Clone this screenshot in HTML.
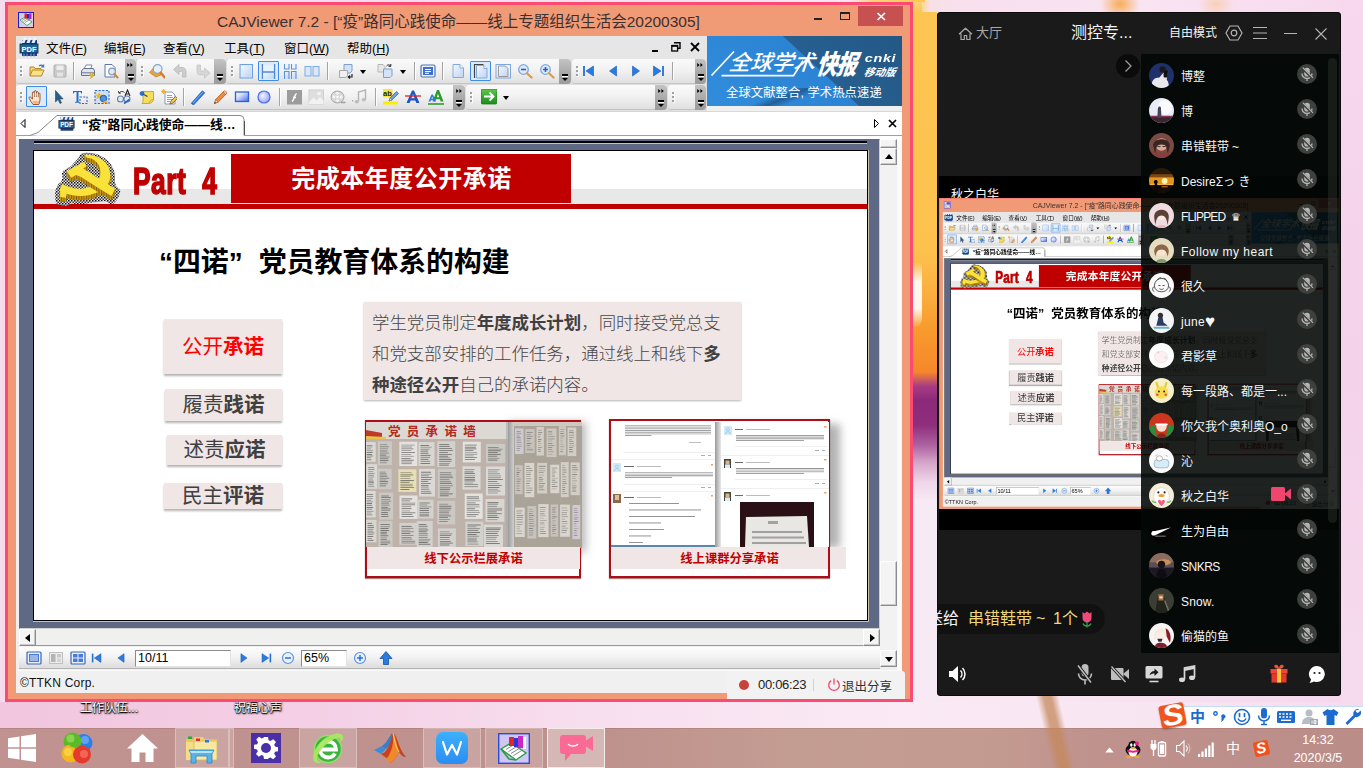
<!DOCTYPE html>
<html lang="zh-CN"><head><meta charset="utf-8"><title>CAJViewer 7.2</title>
<style>
*{box-sizing:border-box;margin:0;padding:0}
html,body{width:1363px;height:768px;overflow:hidden}
body{position:relative;font-family:"Liberation Sans","Noto Sans CJK SC",sans-serif;font-size:13px;color:#000;background:#f6dcee}
.a{position:absolute}
.wall{left:0;top:0;width:1363px;height:768px;background:
 linear-gradient(90deg,#f5dcec 0,#f6d9ec 300px,#f8e2f1 700px,#f9e8f4 1000px,#f5d6ec 1363px)}
.wmid{left:913px;top:0;width:24px;height:727px;background:linear-gradient(180deg,#fbd27a 0,#fdc552 14px,#fdc24e 250px,#fbb040 290px,#f89a2e 330px,#f6872a 372px,#a83c84 386px,#8c2a7a 400px,#8e2e7c 425px,#ac62a0 445px,#d6a6ca 463px,#efd6e8 482px,#f8eaf4 502px,#f8eaf4 727px)}
.wmidhl{left:913px;top:262px;width:9px;height:66px;background:linear-gradient(180deg,rgba(255,255,255,0),#fff 30%,#fff 70%,rgba(255,255,255,0));border-radius:0 6px 10px 0;opacity:.9}
.wtop{left:922px;top:0;width:441px;height:12px;background:radial-gradient(ellipse 20px 16px at 198px 4px,rgba(248,170,80,.95),rgba(248,170,80,0)),radial-gradient(ellipse 18px 14px at 294px 4px,rgba(250,200,160,.7),rgba(250,200,160,0)),linear-gradient(90deg,#fbd890 0,#f9e0e6 8px,#f8e0ee 40px,#f9e4f2 50%,#f7d8ee)}
.wright{left:1341px;top:0;width:22px;height:727px;background:linear-gradient(180deg,#f7d8ee,#f4d2ea 50%,#f6dcee)}
.wstem{left:1044px;top:696px;width:23px;height:72px;background:linear-gradient(90deg,rgba(196,136,92,0) 0,rgba(196,136,92,.75) 35%,rgba(196,136,92,.75) 65%,rgba(196,136,92,0) 100%);transform:skewX(13deg)}
.taskbar{left:0;top:728px;width:1363px;height:40px;background:linear-gradient(180deg,rgba(120,60,50,.25) 0,rgba(120,60,50,0) 1.5px),linear-gradient(90deg,#c09391 0,#be918d 600px,#c49d92 800px,#c39a90 1000px,#bf928d 1100px,#bb8d89 1363px)}
.cajin{left:-5px;top:-2px;width:1363px;height:768px}
.caj{left:5px;top:2px;width:908px;height:700px;overflow:hidden}
.ttl{font-size:15.5px;line-height:22px;color:#3a3030;white-space:nowrap}
.mn{font-size:12.5px;line-height:17px;color:#000;white-space:nowrap}
.mn u{text-underline-offset:1px}
.tb{background:linear-gradient(180deg,#fafafa 0,#f2f2f2 45%,#e0e0e0 100%);border-radius:3px;border-bottom:1px solid #c4c4c4}
.tsep{width:2px;background:linear-gradient(90deg,#a4a4a4 0,#a4a4a4 50%,#fdfdfd 50%)}
.grip{width:2px;height:10px;background:repeating-linear-gradient(180deg,#a0a0a0 0,#a0a0a0 2px,rgba(0,0,0,0) 2px,rgba(0,0,0,0) 4px);box-shadow:1px 1px 0 rgba(255,255,255,.8)}
.tcap{background:linear-gradient(180deg,#c4c4c4,#a6a6a6 60%,#9c9c9c);border-radius:0 4px 4px 0}
.chev{width:7px;height:5px;background:linear-gradient(135deg,#000 35%,rgba(0,0,0,0) 36%) 0 0/3.5px 2.5px repeat-x,linear-gradient(45deg,#000 35%,rgba(0,0,0,0) 36%) 0 2.5px/3.5px 2.5px repeat-x;background-repeat:repeat-x}
.capbar{width:6px;height:2px;background:#000;box-shadow:0 1px 0 #fff}
.capar{border:3px solid transparent;border-bottom:0;border-top:3.5px solid #000;width:0;height:0}
.ddar{border:3px solid transparent;border-bottom:0;border-top:4px solid #000;width:0;height:0}
.selbox{background:#dcebfc;border:1px solid #3c8cec;border-radius:1px}
.bt1{font-size:21.5px;color:#fff;font-style:italic;white-space:nowrap;line-height:26px;letter-spacing:0;font-weight:500;transform:skewX(-6deg)}
.bt2{font-size:27px;color:#fff;font-style:italic;font-weight:900;white-space:nowrap;line-height:34px;letter-spacing:-1px;transform-origin:0 50%;transform:skewX(-8deg) scaleX(.76)}
.bt3{font-size:11.5px;color:#fff;font-style:italic;font-weight:bold;line-height:14px;letter-spacing:.5px;transform:scaleX(1.25)}
.bt4{font-size:10.5px;color:#fff;font-style:italic;font-weight:bold;line-height:13px;white-space:nowrap;transform:skewX(-10deg)}
.bt5{font-size:12.3px;color:#fff;line-height:16px;white-space:nowrap;letter-spacing:.1px;font-weight:400}
.tabt{font-size:12.8px;font-weight:bold;line-height:20px;color:#000;white-space:nowrap}
.page{background:#fff;overflow:hidden}
.sbtn{background:#f4f4f4;border:1px solid;border-color:#fff #8c8c8c #8c8c8c #fff;box-shadow:inset -1px -1px 0 #c8c8c8}
.inp{background:#fff;border:1px solid;border-color:#8c8c8c #e4e4e4 #e4e4e4 #8c8c8c;font-size:12.5px;line-height:15px;padding-left:2px;color:#000}
.part4{font-size:36px;line-height:40px;font-weight:bold;color:#c00000;white-space:nowrap;transform-origin:0 0;transform:scaleX(.73);-webkit-text-stroke:1.6px #c00000;letter-spacing:.8px}
.lbtn{background:#f0e6e6;box-shadow:0 2px 2px rgba(0,0,0,.3);text-align:center;font-size:20.5px;color:#404040;white-space:nowrap}
.tbox{background:#f0e6e6;box-shadow:0 1px 2px rgba(0,0,0,.3)}
.ttxt{font-size:17.45px;line-height:31px;color:#454545;font-weight:300;white-space:nowrap}
.ttxt b{font-weight:bold;color:#404040}
.cap{font-size:12.3px;font-weight:bold;color:#c00000;text-align:center;line-height:24px;white-space:nowrap}
.tscale{left:-.91px;top:-1.23px;width:908px;height:700px;transform-origin:0 0;transform:scale(.4465,.4478)}
.tscale .caj{left:0;top:0}
.mname{font-size:12px;line-height:20px;color:#f6f6f6;white-space:nowrap}
.dlabel{font-size:12px;line-height:18px;color:#fff;white-space:nowrap;text-shadow:0 0 2px #000,1px 1px 2px #000,0 1px 1px #000}
.tbtn{background:rgba(255,255,255,.17);box-shadow:inset 0 0 0 1px rgba(255,255,255,.28)}
.tbtn.act{background:rgba(255,255,255,.36);box-shadow:inset 0 0 0 1px rgba(255,255,255,.75)}
.wbot{left:0;top:702px;width:1363px;height:26px;background:linear-gradient(90deg,#f1c6de 0,#f4cfe5 300px,#f8e0f0 620px,#faeaf5 900px,#f8e4f2 1200px,#f6daee 1363px)}
.wtl{left:850px;top:0;width:75px;height:2px;background:linear-gradient(90deg,rgba(251,210,122,0),#fbd27a 30%,#fdc552)}
</style></head>
<body>
<svg width="0" height="0" style="position:absolute"><defs><linearGradient id="gb" x1="0" y1="0" x2="1" y2="1"><stop offset="0" stop-color="#f4f8fe"/><stop offset="1" stop-color="#bcd4f4"/></linearGradient><linearGradient id="gr" x1="0" y1="0" x2="1" y2="1"><stop offset="0" stop-color="#ffffff"/><stop offset=".35" stop-color="#d8e0fc"/><stop offset="1" stop-color="#4468e8"/></linearGradient><radialGradient id="ge" cx=".4" cy=".4" r=".7"><stop offset="0" stop-color="#f4f4ff"/><stop offset="1" stop-color="#8c9cf4"/></radialGradient><linearGradient id="gg" x1="0" y1="0" x2="0" y2="1"><stop offset="0" stop-color="#5cc84c"/><stop offset="1" stop-color="#1c8c1c"/></linearGradient></defs></svg>
<div class="a wall"></div><div class="a wmid"></div><div class="a wmidhl"></div><div class="a wtop"></div><div class="a wright"></div><div class="a wbot"></div><div class="a wtl"></div>
<div class="a dlabel" style="left:80px;top:699px">工作队伍...</div>
<div class="a dlabel" style="left:234px;top:699px">祝福心声</div>
<div class="a taskbar"></div>
<div class="a wstem"></div>
<!-- start -->
<svg class="a" style="left:8px;top:734px" width="28" height="28" viewBox="0 0 28 28"><path d="M0 4.2L11.5 2.5V13.3H0zM13 2.3L28 0V13.3H13zM0 14.7h11.5V25.5L0 23.8zM13 14.7h15V28L13 25.7z" fill="#fff"/></svg>
<!-- clover -->
<svg class="a" style="left:61px;top:732px" width="32" height="32" viewBox="0 0 32 32"><circle cx="11.5" cy="9.5" r="9" fill="#5cba28"/><circle cx="22.5" cy="11" r="9" fill="#2c7fe8"/><circle cx="9.5" cy="21.5" r="9" fill="#f4b81c"/><circle cx="21" cy="22.5" r="9" fill="#e63a2c"/><path d="M11.5 .5a9 9 0 0 1 8 13l-5 2.5-6-2z" fill="#5cba28"/><circle cx="9.5" cy="6.5" r="4" fill="#b0e870" opacity=".55"/><circle cx="24" cy="8" r="4" fill="#8cc0fa" opacity=".55"/><circle cx="7" cy="20" r="4" fill="#fde26c" opacity=".55"/><circle cx="23" cy="22" r="4" fill="#f98c7c" opacity=".55"/></svg>
<!-- home -->
<svg class="a" style="left:126px;top:733px" width="33" height="30" viewBox="0 0 33 30"><path d="M16.5 1L32 15.5h-4.5V29H19.5V19.5h-6V29H5.5V15.5H1z" fill="#fff"/></svg>
<!-- explorer -->
<div class="a tbtn" style="left:175px;top:728px;width:54px;height:40px"></div>
<div class="a tbtn" style="left:229px;top:728px;width:5px;height:40px"></div>
<svg class="a" style="left:185px;top:734px" width="33" height="30" viewBox="0 0 33 30"><path d="M1 5h9l2 2.5h9V11H1z" fill="#e8c860"/><rect x="1" y="8" width="21" height="18" fill="#f4dc88"/><path d="M9 3h9l2 2.5h12V26H9z" fill="#f0d070"/><rect x="9" y="7" width="23" height="19" rx="1" fill="#f8e8a0" stroke="#d8b850" stroke-width=".8"/><rect x="3" y="2.5" width="4" height="2.5" fill="#2ca82c"/><rect x="11" y="4.5" width="4" height="2.5" fill="#e02c2c"/><rect x="20" y="6" width="4" height="2.5" fill="#2c7ce0"/><path d="M4 16h25l-2 4v9h-5v-7H11v7H6v-9z" fill="#58b4e8" stroke="#2c84c8" stroke-width=".8"/><path d="M5 17h23l-1 2H6z" fill="#b8e4f8"/></svg>
<!-- settings -->

<div class="a" style="left:251px;top:733px;width:30px;height:30px;background:#4a2fa6"></div>
<svg class="a" style="left:254px;top:736px" width="24" height="24" viewBox="0 0 24 24"><path d="M10 1h4l.6 3.2 1.9.8L19.2 3.2l2.8 2.8-1.8 2.7.8 1.9 3.2.6v4l-3.2.6-.8 1.9 1.8 2.7-2.8 2.8-2.7-1.8-1.9.8L14 23h-4l-.6-3.2-1.9-.8-2.7 1.8L2 18l1.8-2.7-.8-1.9L0 12.8v-4l3.2-.6.8-1.9L2.2 3.6 5 .8l2.7 1.8 1.9-.8z" fill="#fff" transform="translate(0 0)"/><circle cx="12" cy="12" r="5" fill="#4a2fa6"/></svg>
<!-- 360 e -->
<div class="a tbtn" style="left:299px;top:728px;width:58px;height:40px"></div>
<svg class="a" style="left:311px;top:731px" width="36" height="36" viewBox="0 0 36 36"><circle cx="17" cy="18" r="13.5" fill="#3cb43c"/><circle cx="17" cy="18" r="13.5" fill="none" stroke="#8ce06c" stroke-width="1.5"/><path d="M9 18.5h16c0-5-3.5-8-8-8s-8 3.5-8 8 3.5 8 8 8c3 0 5.5-1.5 7-4" fill="none" stroke="#fff" stroke-width="3.8"/><path d="M3 30C0 24 6 10 20 4c6-2.5 11-2 12 1 .8 2.5-1 5-3 7 1-3 .5-5-2-5-4 0-12 5-17 12-4 5-5 9-3 11 1 1 3 1 5 0-3 2.5-7 3-9 0z" fill="#a8e860" opacity=".95"/></svg>
<!-- matlab -->
<svg class="a" style="left:374px;top:733px" width="32" height="30" viewBox="0 0 32 30"><path d="M0 17l8-4 4 3-5 5z" fill="#3c8cd8"/><path d="M8 13c3-2 5-5 8-10 1-2 2-3 3-3l2 8-9 8z" fill="#3c7cc0"/><path d="M19 0c2 0 4 6 6 12 2 5 4 9 7 12-3 0-5-2-7-5-2 3-4 8-8 11-2-3-4-5-10-9 5-1 9-8 12-21z" fill="#c8401c"/><path d="M19 0c1 4 0 14-3 20-1 3-3 5-4 6l5 4c4-3 6-8 8-11-2-5-4-19-6-19z" fill="#f0882c"/><path d="M19 0c1 6 3 14 6 19" fill="none" stroke="#fbc04c" stroke-width="1.2"/></svg>
<!-- wps -->
<div class="a tbtn" style="left:423px;top:728px;width:58px;height:40px"></div>
<div class="a" style="left:436px;top:732px;width:32px;height:32px;border-radius:7px;background:linear-gradient(180deg,#3cb0fc,#2c8cf0)"></div>
<svg class="a" style="left:442px;top:741px" width="20" height="15" viewBox="0 0 20 15"><path d="M1 1l4 12.5L10 4l5 9.5L19 1" fill="none" stroke="#fff" stroke-width="2.2" stroke-linejoin="round" stroke-linecap="round"/></svg>
<!-- caj -->
<div class="a tbtn" style="left:485px;top:728px;width:58px;height:40px"></div>
<svg class="a" style="left:498px;top:733px" width="32" height="31" viewBox="0 0 32 31"><rect x=".7" y=".7" width="30.6" height="29.6" fill="#cfc6f6" stroke="#2a4ad8" stroke-width="1.4"/><path d="M3 16l10-6 15 10-10 7z" fill="#fff" stroke="#2c9c3c" stroke-width="1.4"/><path d="M3 16l8 10 7 1" fill="none" stroke="#2c9c3c" stroke-width="1.6"/><path d="M8 16.5l9-5.5M10.5 18.5l9-5.5M13 20.5l9-5.5M15.5 22.5l9-5.5" stroke="#888" stroke-width="1"/><rect x="11" y="4" width="5" height="9" fill="#e02828"/><rect x="16" y="5" width="4" height="9" fill="#2838d8"/><rect x="20" y="3" width="5" height="12" fill="#c828c8"/><rect x="25" y="4" width="3" height="12" fill="#f8f8f8"/></svg>
<!-- meeting (active) -->
<div class="a tbtn act" style="left:547px;top:728px;width:58px;height:40px"></div>
<svg class="a" style="left:560px;top:735px" width="33" height="27" viewBox="0 0 33 27"><path d="M3 0h20a3 3 0 0 1 3 3v2.5L33 1v15l-7-4.5V16a3 3 0 0 1-3 3H11l-6 7v-7H3a3 3 0 0 1-3-3V3a3 3 0 0 1 3-3z" fill="#fb6a94"/><path d="M8.5 9.5c2 2 7 2 9 0" fill="none" stroke="#fff" stroke-width="1.5" stroke-linecap="round"/></svg>
<!-- tray -->
<svg class="a" style="left:1105px;top:747px" width="9" height="6" viewBox="0 0 10 7"><path d="M0 6.5L5 .5l5 6z" fill="#fff"/></svg>
<svg class="a" style="left:1124px;top:740px" width="18" height="18" viewBox="0 0 18 18"><ellipse cx="9" cy="10" rx="7.5" ry="6" fill="#111"/><ellipse cx="9" cy="6" rx="4.8" ry="5.2" fill="#111"/><ellipse cx="9" cy="12" rx="4.5" ry="4.5" fill="#fff"/><ellipse cx="7.3" cy="5" rx="1.2" ry="1.7" fill="#fff"/><ellipse cx="10.7" cy="5" rx="1.2" ry="1.7" fill="#fff"/><ellipse cx="9" cy="8" rx="2.5" ry="1" fill="#f8a81c"/><path d="M3.5 9.5c3 1.5 8 1.5 11 0l.5 2c-3 1.5-9 1.5-12 0z" fill="#f01c8c"/><circle cx="13" cy="3.5" r="2" fill="#f01c8c"/><ellipse cx="5" cy="17" rx="3" ry="1" fill="#f8a81c"/><ellipse cx="13" cy="17" rx="3" ry="1" fill="#f8a81c"/></svg>
<svg class="a" style="left:1150px;top:740px" width="17" height="17" viewBox="0 0 17 17"><path d="M2 0v4M5 0v4" stroke="#fff" stroke-width="1.3"/><path d="M.5 4h6v4l-1.5 2h-3l-1.5-2z" fill="#fff"/><path d="M3.5 10v6" stroke="#fff" stroke-width="1.3"/><rect x="8.5" y="2.5" width="7" height="13.5" rx="1" fill="none" stroke="#fff" stroke-width="1.4"/><rect x="10.5" y="1" width="3" height="1.5" fill="#fff"/><rect x="10" y="4.5" width="4" height="9.5" fill="#fff"/></svg>
<svg class="a" style="left:1176px;top:740px" width="15" height="17" viewBox="0 0 15 17"><path d="M.5 5.5h3L8 1v15L3.5 11.5H.5z" fill="none" stroke="#fff" stroke-width="1.1"/><path d="M10 5.5a4.5 4.5 0 0 1 0 6" fill="none" stroke="#fff" stroke-width="1.1"/><path d="M12 3.5a7.5 7.5 0 0 1 0 10" fill="none" stroke="#e0c8c4" stroke-width="1"/></svg>
<svg class="a" style="left:1198px;top:742px" width="16" height="15" viewBox="0 0 16 15"><rect x="0" y="12" width="2.2" height="3" fill="#fff"/><rect x="3.4" y="9.5" width="2.2" height="5.5" fill="#fff"/><rect x="6.8" y="6.5" width="2.2" height="8.5" fill="#fff"/><rect x="10.2" y="3.5" width="2.2" height="11.5" fill="#fff"/><rect x="13.6" y=".5" width="2.2" height="14.5" fill="#fff"/></svg>
<div class="a" style="left:1226px;top:739px;font-size:14px;line-height:18px;color:#fff">中</div>
<div class="a" style="left:1254px;top:741px;width:15px;height:15px;background:#f0521c;border-radius:2px;transform:rotate(-12deg)"></div>
<div class="a" style="left:1256px;top:738px;font-size:15px;line-height:20px;color:#fff;font-weight:bold;font-style:italic;transform:rotate(-12deg)">S</div>
<div class="a" style="left:1280px;top:731px;width:76px;text-align:center;font-size:12.5px;line-height:18px;color:#fff;white-space:nowrap">14:32</div>
<div class="a" style="left:1280px;top:749px;width:76px;text-align:center;font-size:12.5px;line-height:18px;color:#fff;white-space:nowrap">2020/3/5</div>
<!-- IME bar -->
<div class="a" style="left:1176px;top:706px;width:187px;height:22px;background:#fff;border-top:1px solid #c4dcf4"></div>
<div class="a" style="left:1160px;top:704px;width:25px;height:23px;background:#f0561c;border-radius:3px;transform:rotate(-11deg);box-shadow:0 1px 2px rgba(0,0,0,.3)"></div>
<div class="a" style="left:1163px;top:698px;font-size:29px;line-height:34px;color:#fff;font-weight:bold;font-style:italic;transform:rotate(-11deg) scaleX(1.1)">S</div>
<div class="a" style="left:1190px;top:707px;font-size:15px;line-height:20px;color:#1c6cd0;font-weight:bold">中</div>
<svg class="a" style="left:1213px;top:710px" width="13" height="14" viewBox="0 0 13 14"><circle cx="2.5" cy="3.5" r="1.7" fill="none" stroke="#1c6cd0" stroke-width="1.4"/><path d="M8.5 6.5a1.8 1.8 0 1 1 2 1.8c0 1.5-.8 2.5-2 3.2" fill="#1c6cd0" stroke="#1c6cd0" stroke-width="1"/></svg>
<svg class="a" style="left:1233px;top:708px" width="18" height="18" viewBox="0 0 18 18"><circle cx="9" cy="9" r="7.5" fill="none" stroke="#1c6cd0" stroke-width="1.6"/><path d="M6.5 5.5v3M11.5 5.5v3" stroke="#1c6cd0" stroke-width="1.7" stroke-linecap="round"/><path d="M5 10.5c1.5 3.5 6.5 3.5 8 0" fill="none" stroke="#1c6cd0" stroke-width="1.5"/></svg>
<svg class="a" style="left:1257px;top:707px" width="14" height="19" viewBox="0 0 14 19"><rect x="4" y="1" width="6" height="10.5" rx="3" fill="#1c6cd0"/><path d="M1.5 8.5a5.5 5.5 0 0 0 11 0M7 14v3M4 17.5h6" fill="none" stroke="#1c6cd0" stroke-width="1.5"/></svg>
<svg class="a" style="left:1277px;top:711px" width="18" height="12" viewBox="0 0 18 12"><rect x="0" y="0" width="18" height="12" rx="1.5" fill="#1c6cd0"/><path d="M2 3h2M5.5 3h2M9 3h2M12.5 3h2M2 6h2M5.5 6h2M9 6h2M12.5 6h2" stroke="#fff" stroke-width="1.4"/><path d="M4 9.3h10" stroke="#fff" stroke-width="1.4"/></svg>
<svg class="a" style="left:1301px;top:708px" width="18" height="18" viewBox="0 0 18 18"><circle cx="8" cy="5" r="3.5" fill="#b8bcc4"/><path d="M1 16c0-5 3-7 7-7s7 2 7 7z" fill="#b8bcc4"/><rect x="9" y="11" width="8" height="6" fill="#a4a8b0"/><path d="M11 12.5v3M13 12.5h2v3h-2zM13 14h2" stroke="#fff" stroke-width=".8" fill="none"/></svg>
<svg class="a" style="left:1322px;top:709px" width="17" height="16" viewBox="0 0 17 16"><path d="M5.5 0c1 1.5 5 1.5 6 0l5 3.5-2 3.5-2-1v10h-8V6l-2 1-2-3.5z" fill="#1c6cd0"/></svg>
<svg class="a" style="left:1344px;top:708px" width="17" height="18" viewBox="0 0 17 18"><path d="M15.5 1.5a4.5 4.5 0 0 0-6 5.5L1.5 15l2 2 8-8a4.5 4.5 0 0 0 5-6.5l-2.5 2.5-2-1-.5-1.5z" fill="#1c6cd0"/></svg>

<div class="a caj"><div class="a cajin">
<div class="a" style="left:5px;top:2px;width:908px;height:700px;background:#fb4b72"></div>
<div class="a" style="left:8px;top:5px;width:902px;height:694px;background:#f09a76"></div>
<!-- title bar -->
<svg class="a" style="left:18px;top:12px" width="16" height="16" viewBox="0 0 16 16"><rect x=".5" y=".5" width="15" height="15" fill="#d6cdf6" stroke="#1a1ad8"/><path d="M2 8l5-3 7 5-5 3.5z" fill="#fff" stroke="#2a9a3a" stroke-width=".8"/><path d="M4 8.5l5-3M5.5 9.5l5-3M7 10.5l5-3" stroke="#777" stroke-width=".7"/><rect x="6.5" y="1.5" width="2.5" height="5" fill="#e02020"/><rect x="9" y="2" width="2" height="4.5" fill="#2030d0"/><rect x="11" y="1.5" width="2.5" height="5.5" fill="#c020c0"/></svg>
<div class="a ttl" style="left:217px;top:10.5px;width:490px;height:22px">CAJViewer 7.2 - [“疫”路同心践使命——线上专题组织生活会20200305]</div>
<div class="a" style="left:814px;top:18px;width:8px;height:2px;background:#222"></div>
<div class="a" style="left:840px;top:12px;width:10px;height:8px;border:1px solid #222;border-top-width:2px"></div>
<div class="a" style="left:858px;top:6px;width:45px;height:20px;background:#c75050"></div>
<svg class="a" style="left:875px;top:11px" width="12" height="11" viewBox="0 0 12 11"><path d="M2.5 2l7.5 7M10 2l-7.5 7" stroke="#fff" stroke-width="1.7"/></svg>
<!-- client -->
<div class="a" style="left:16px;top:36px;width:886px;height:657px;background:#f0f0f0"></div>
<!-- menu bar -->
<div class="a" style="left:16px;top:36px;width:691px;height:23px;background:#e6e6e6"></div>
<svg class="a" style="left:19px;top:38px" width="20" height="19" viewBox="0 0 20 19"><path d="M5 0l2 0-1 4h-2zM10 0l2 0-1 4h-2zM15 0l2 0-1 4h-2z" fill="#fff"/><rect x="3" y="2" width="15" height="16" fill="#1b3f8f"/><path d="M4 1l3 0-1.5 4h-3zM9 1l3 0-1.5 4h-3zM14 1l3 0-1.5 4h-3z" fill="#e8eef8"/><rect x="1" y="6" width="18" height="9" fill="#1667a8" stroke="#222" stroke-width=".8"/><text x="10" y="13.5" font-family="Liberation Sans,sans-serif" font-size="7.5" font-weight="bold" fill="#fff" text-anchor="middle">PDF</text><path d="M5 15.5v3M8 15.5v3M12 15.5v3M15 15.5v3" stroke="#6c8fd0" stroke-width="1.2"/></svg>
<div class="a mn" style="left:46px;top:41px">文件(<u>F</u>)</div>
<div class="a mn" style="left:104px;top:41px">编辑(<u>E</u>)</div>
<div class="a mn" style="left:163px;top:41px">查看(<u>V</u>)</div>
<div class="a mn" style="left:224px;top:41px">工具(<u>T</u>)</div>
<div class="a mn" style="left:284px;top:41px">窗口(<u>W</u>)</div>
<div class="a mn" style="left:347px;top:41px">帮助(<u>H</u>)</div>
<div class="a" style="left:652px;top:50px;width:6px;height:2px;background:#000"></div>
<svg class="a" style="left:671px;top:42px" width="10" height="10" viewBox="0 0 10 10"><path d="M3 .8h6v5.5H7" fill="none" stroke="#000" stroke-width="1.4"/><rect x=".8" y="3.5" width="5.8" height="5.5" fill="none" stroke="#000" stroke-width="1.3"/><path d="M.8 4h5.8" stroke="#000" stroke-width="1.6"/></svg>
<svg class="a" style="left:690px;top:42px" width="10" height="10" viewBox="0 0 10 10"><path d="M1 1l8 8M9 1l-8 8" stroke="#000" stroke-width="1.8"/></svg>
<!-- toolbars -->
<div class="a" style="left:16px;top:59px;width:691px;height:52px;background:#dedede"></div>
<div class="a tb" style="left:16px;top:59px;width:120px;height:25px"></div>
<div class="a tb" style="left:137px;top:59px;width:89px;height:25px"></div>
<div class="a tb" style="left:227px;top:59px;width:344px;height:25px"></div>
<div class="a tb" style="left:572px;top:59px;width:134px;height:25px"></div>
<div class="a grip" style="left:20px;top:66px"></div>
<svg class="a" style="left:29px;top:63px" width="16" height="16" viewBox="0 0 16 16"><path d="M1 13V4h4l1 1.5h6V7" fill="#f7d674" stroke="#b58a24" stroke-width="1"/><path d="M1 13l2.5-6h11.5l-2.5 6z" fill="#fbe08a" stroke="#b58a24"/><path d="M10 3.2c1.5-1.6 3.6-1.2 4.4.4M14.6 1.4v2.4h-2.4" fill="none" stroke="#3b78c4" stroke-width="1.2"/></svg>
<svg class="a" style="left:52px;top:63px" width="16" height="16" viewBox="0 0 16 16"><rect x="2" y="2" width="12" height="12" rx="1" fill="#c9c9c9" stroke="#b0b0b0"/><rect x="4.5" y="2.5" width="7" height="4.5" fill="#eee"/><rect x="5" y="9.5" width="6" height="4" fill="#e4e4e4"/></svg>
<div class="a tsep" style="left:73px;top:62px;height:18px"></div>
<svg class="a" style="left:80px;top:63px" width="16" height="16" viewBox="0 0 16 16"><path d="M4 6l2-4h6l-1.5 4z" fill="#fff" stroke="#7e8aa0"/><path d="M1.5 8l2-2.5h10l1 2.5v4.5h-13z" fill="#dfe5ef" stroke="#65728c"/><rect x="2" y="9" width="12" height="1.4" fill="#8a97b0"/><path d="M11 9.5l3 .5-2 2 2.5.3-4 3.2 1-2.6-2.2-.3z" fill="#f5c21c" stroke="#c48a10" stroke-width=".5"/></svg>
<svg class="a" style="left:103px;top:63px" width="16" height="16" viewBox="0 0 16 16"><path d="M2 1.5h7l3 3V14H2z" fill="#fff" stroke="#5e77a8"/><circle cx="9" cy="8.5" r="3.3" fill="#dbe9f8" stroke="#8497b5" stroke-width="1.2"/><path d="M11.3 11l3.2 3.4" stroke="#d18a2c" stroke-width="2.2" stroke-linecap="round"/></svg>
<div class="a tcap" style="left:125px;top:59px;width:11px;height:25px"><svg class="a" style="left:2px;top:4px" width="6" height="4" viewBox="0 0 7 5"><path d="M0 0l3 2.5-3 2.5zM4 0l3 2.5-3 2.5z" fill="#000"/></svg><div class="a capbar" style="left:2.5px;bottom:8px"></div><div class="a capar" style="left:2.5px;bottom:3px"></div></div>
<div class="a grip" style="left:141px;top:66px"></div>
<svg class="a" style="left:149px;top:63px" width="16" height="16" viewBox="0 0 16 16"><path d="M.5 9.5l4-4.5 6 1.5 2.5 5-6 2.5z" fill="#eaa23a" stroke="#b56f14" stroke-width=".6"/><circle cx="8.6" cy="6" r="4.4" fill="#e4f1fc" stroke="#8aa4c4" stroke-width="1.2"/><path d="M11.6 9.6l3.8 4.6" stroke="#d87a2a" stroke-width="2.4" stroke-linecap="round"/></svg>
<svg class="a" style="left:172px;top:63px" width="16" height="16" viewBox="0 0 16 16"><path d="M1.5 6.5L7 1.5V4.5H10C12.5 4.5 14 6 14 8.5V14H10.5V9.5C10.5 8.8 10.2 8.5 9.5 8.5H7V11.5Z" fill="#cdcdcd" stroke="#b4b4b4" stroke-width=".7"/></svg>
<svg class="a" style="left:195px;top:63px" width="16" height="16" viewBox="0 0 16 16"><path d="M2 2H5.5V7C5.5 7.7 5.8 8 6.5 8H9.5V5L15 10L9.5 15V12H5.5C3 12 2 10.5 2 8.5Z" fill="#d6d6d6" stroke="#c2c2c2" stroke-width=".7"/></svg>
<div class="a tcap" style="left:214px;top:59px;width:12px;height:25px"><div class="a capbar" style="left:3px;bottom:8px"></div><div class="a capar" style="left:3px;bottom:3px"></div></div>
<div class="a grip" style="left:231px;top:66px"></div>
<div class="a selbox" style="left:258px;top:61px;width:21px;height:20px"></div>
<svg class="a" style="left:238px;top:63px" width="16" height="16" viewBox="0 0 16 16"><rect x="2" y="1.5" width="12.5" height="13.5" fill="#dce9fa" stroke="#6e9fe0" stroke-width="1"/><rect x="3" y="2.5" width="10.5" height="11.5" fill="url(#gb)"/></svg>
<svg class="a" style="left:260px;top:63px" width="16" height="16" viewBox="0 0 16 16"><rect x="3" y="2" width="11" height="6.5" fill="#e8f1fc"/><rect x="3" y="9.6" width="11" height="6" fill="url(#gb)"/><path d="M2.4 1v15M14.6 1v15M2.4 9h12.2" fill="none" stroke="#4f8ad8" stroke-width="1.3"/></svg>
<svg class="a" style="left:282px;top:63px" width="16" height="16" viewBox="0 0 16 16"><rect x="2.5" y="1" width="4.5" height="5" fill="#edf4fd"/><rect x="9.5" y="1" width="4.5" height="5" fill="#edf4fd"/><rect x="2.5" y="8.5" width="4.5" height="7.5" fill="url(#gb)"/><rect x="9.5" y="8.5" width="4.5" height="7.5" fill="url(#gb)"/><path d="M2.5 1v5h4.5v-5M9.5 1v5h4.5v-5M2.5 16v-7.5h4.5v7.5M9.5 16v-7.5h4.5v7.5" fill="none" stroke="#5b93df" stroke-width="1.1"/></svg>
<svg class="a" style="left:304px;top:63px" width="16" height="16" viewBox="0 0 16 16"><rect x="1" y="3.5" width="6" height="9.5" fill="#dbe8fa" stroke="#7fabe6"/><rect x="9" y="3.5" width="6" height="9.5" fill="#dbe8fa" stroke="#7fabe6"/></svg>
<div class="a tsep" style="left:327px;top:62px;height:18px"></div>
<svg class="a" style="left:338px;top:63px" width="16" height="16" viewBox="0 0 16 16"><path d="M6 1.5h8v6.5l-2 2H6z" fill="#d4e3f7" stroke="#7d9fd2"/><path d="M1.5 7.5h8v5l-1.5 2H1.5z" fill="#f0f0f0" stroke="#a8a8a8"/><path d="M14 11v3h-3.5M12 12.5l-1.7 1.5 1.7 1.5" fill="none" stroke="#222" stroke-width="1.2"/></svg>
<div class="a ddar" style="left:360px;top:70px"></div>
<svg class="a" style="left:377px;top:63px" width="16" height="16" viewBox="0 0 16 16"><path d="M1 1.5h5l2 2V9H1z" fill="#e8e8e8" stroke="#b5b5b5"/><path d="M6.5 6h8.5v6.5l-2 2H6.5z" fill="#d4e3f7" stroke="#7d9fd2"/><path d="M9.5 3c1-1.5 3-1.5 4 0M13.8 1v2.3h-2.3" fill="none" stroke="#222" stroke-width="1"/></svg>
<div class="a ddar" style="left:400px;top:70px"></div>
<div class="a tsep" style="left:414px;top:62px;height:18px"></div>
<svg class="a" style="left:420px;top:63px" width="16" height="16" viewBox="0 0 16 16"><rect x="1" y="2" width="14" height="12" rx="1.5" fill="#e8f0fb" stroke="#4f74b4" stroke-width="1.2"/><rect x="3" y="4" width="10" height="8" fill="#3f6fd0"/><path d="M5 6.5h6M5 8.5h6M5 10.3h4" stroke="#fff" stroke-width="1"/></svg>
<div class="a tsep" style="left:442px;top:62px;height:18px"></div>
<div class="a selbox" style="left:470px;top:61px;width:21px;height:20px"></div>
<svg class="a" style="left:450px;top:63px" width="16" height="16" viewBox="0 0 16 16"><path d="M3 1.5h7l3.5 3.5V14.5H3z" fill="url(#gb)" stroke="#86a9dc"/><path d="M10 1.5V5h3.5" fill="#fff" stroke="#86a9dc"/></svg>
<svg class="a" style="left:473px;top:63px" width="16" height="16" viewBox="0 0 16 16"><path d="M1.5 1v14M1.5 1.5h9" stroke="#444" stroke-width="1.2" fill="none"/><path d="M3.5 2.5h7.5l3 3V15H3.5z" fill="url(#gb)" stroke="#86a9dc"/><path d="M11 2.5V5.5h3" fill="#fff" stroke="#86a9dc"/></svg>
<svg class="a" style="left:495px;top:63px" width="16" height="16" viewBox="0 0 16 16"><rect x="1" y="1.5" width="14.5" height="13.5" fill="none" stroke="#7ea6e0"/><path d="M3.5 3h7l2.5 2.5V13.5H3.5z" fill="url(#gb)" stroke="#9a9a9a"/></svg>
<svg class="a" style="left:517px;top:63px" width="16" height="16" viewBox="0 0 16 16"><circle cx="6.5" cy="6.5" r="4.8" fill="#dcebfb" stroke="#7fa7e0" stroke-width="1.3"/><path d="M4 6.5h5" stroke="#2c5fc4" stroke-width="1.6"/><path d="M10 10.2l4.5 4.3" stroke="#e29a3c" stroke-width="2.2" stroke-linecap="round"/></svg>
<svg class="a" style="left:539px;top:63px" width="16" height="16" viewBox="0 0 16 16"><circle cx="6.5" cy="6.5" r="4.8" fill="#dcebfb" stroke="#7fa7e0" stroke-width="1.3"/><path d="M4 6.5h5M6.5 4v5" stroke="#2c5fc4" stroke-width="1.6"/><path d="M10 10.2l4.5 4.3" stroke="#e29a3c" stroke-width="2.2" stroke-linecap="round"/></svg>
<div class="a tcap" style="left:559px;top:59px;width:12px;height:25px"><div class="a capbar" style="left:3px;bottom:8px"></div><div class="a capar" style="left:3px;bottom:3px"></div></div>
<div class="a grip" style="left:576px;top:66px"></div>
<svg class="a" style="left:581px;top:63px" width="16" height="16" viewBox="0 0 16 16"><path d="M3 3v10" stroke="#1f6fd4" stroke-width="1.8"/><path d="M12.5 3v10L5 8z" fill="#2a7be0" stroke="#1659b8" stroke-width=".6"/></svg>
<svg class="a" style="left:605px;top:63px" width="16" height="16" viewBox="0 0 16 16"><path d="M11.5 3v10L4.5 8z" fill="#2a7be0" stroke="#1659b8" stroke-width=".6"/></svg>
<svg class="a" style="left:628px;top:63px" width="16" height="16" viewBox="0 0 16 16"><path d="M4.5 3v10l7-5z" fill="#2a7be0" stroke="#1659b8" stroke-width=".6"/></svg>
<svg class="a" style="left:650px;top:63px" width="16" height="16" viewBox="0 0 16 16"><path d="M13 3v10" stroke="#1f6fd4" stroke-width="1.8"/><path d="M3.5 3v10L11 8z" fill="#2a7be0" stroke="#1659b8" stroke-width=".6"/></svg>
<div class="a tsep" style="left:672px;top:62px;height:18px"></div>
<div class="a tcap" style="left:695px;top:59px;width:11px;height:25px"><svg class="a" style="left:2px;top:4px" width="6" height="4" viewBox="0 0 7 5"><path d="M0 0l3 2.5-3 2.5zM4 0l3 2.5-3 2.5z" fill="#000"/></svg><div class="a capbar" style="left:2.5px;bottom:8px"></div><div class="a capar" style="left:2.5px;bottom:3px"></div></div>
<div class="a tb" style="left:16px;top:85px;width:449px;height:25px"></div>
<div class="a tb" style="left:466px;top:85px;width:201px;height:25px"></div>
<div class="a tb" style="left:668px;top:85px;width:38px;height:25px"></div>
<div class="a grip" style="left:20px;top:92px"></div>
<div class="a selbox" style="left:26px;top:85.5px;width:21px;height:21px"></div>
<svg class="a" style="left:28px;top:88.5px" width="16" height="16" viewBox="0 0 16 16"><path d="M5 15.5C3.5 13.5 2.5 11.5 1.2 9.5 .5 8.2 1.8 7.2 2.9 8.3L4.4 10.2V4c0-1.5 1.9-1.5 1.9 0V2.8c0-1.6 2-1.6 2 0v.8c0-1.5 1.9-1.5 1.9 0V5c0-1.3 1.8-1.3 1.8.2V10.5c0 2-.6 3.5-1.2 5z" fill="#fde4cc" stroke="#8a4a20" stroke-width=".9" stroke-linejoin="round"/><path d="M6.3 8V4M8.3 8V3.5M10.2 8.2V5" stroke="#8a4a20" stroke-width=".8"/><path d="M5.3 14.5c2 .6 4 .6 5.5 0l.6-2.5H4.5z" fill="#f4a870" opacity=".8"/><path d="M5.3 4v4M7.3 3v4M9.2 4v3.5" stroke="#fff" stroke-width=".7" opacity=".9"/></svg>
<svg class="a" style="left:50px;top:88.5px" width="16" height="16" viewBox="0 0 16 16"><path d="M5.5 1.5v11.5l2.6-2.5 1.9 4 1.5-.7-1.9-3.9h3.5z" fill="#2a5f8c" stroke="#1c4468" stroke-width=".6"/></svg>
<svg class="a" style="left:72px;top:88.5px" width="16" height="16" viewBox="0 0 16 16"><path d="M1 2h9v2.5h-.8C9 3.3 8.5 3 7 3H6.5v9c0 .8.4 1 1.5 1v.8H3V13c1 0 1.5-.2 1.5-1V3H4C2.5 3 2 3.3 1.8 4.5H1z" fill="#1f6fd0"/><rect x="8" y="8" width="7" height="6.5" fill="none" stroke="#2a66c8" stroke-width="1.1" stroke-dasharray="2 1.3"/></svg>
<svg class="a" style="left:94px;top:88.5px" width="16" height="16" viewBox="0 0 16 16"><rect x="1" y="1.5" width="14" height="13" fill="#cfe0f6" stroke="#2a66c8" stroke-width="1.1" stroke-dasharray="2.2 1.4"/><path d="M5 3l1.2 2.4 2.6.3-1.9 1.8.5 2.6L5 8.9 2.6 10.1l.5-2.6L1.2 5.7l2.6-.3z" fill="#f5b81c"/><circle cx="9.5" cy="9.5" r="3.2" fill="#4f92e0" stroke="#1c58b0"/><path d="M8 13.5l6 1.2-2-3.5" fill="#f0a030"/></svg>
<svg class="a" style="left:116px;top:88.5px" width="16" height="16" viewBox="0 0 16 16"><circle cx="4.5" cy="10" r="3" fill="#dcebfb" stroke="#6b7f9c" stroke-width="1.1"/><circle cx="11" cy="10" r="3" fill="#dcebfb" stroke="#6b7f9c" stroke-width="1.1"/><path d="M7.5 9.5h1" stroke="#6b7f9c" stroke-width="1.2"/><path d="M3 4c1.5-2 4-2 5.5-.5M2.5 2l.3 2.3 2.2-.3" fill="none" stroke="#333" stroke-width=".9"/><path d="M9 7l2.5-6L14 7M10 5h3" fill="none" stroke="#222" stroke-width="1.1"/><path d="M8 14.5l5.5-4" stroke="#2a66c8" stroke-width="1.8"/></svg>
<svg class="a" style="left:139px;top:88.5px" width="16" height="16" viewBox="0 0 16 16"><path d="M4 2.5h10.5V10c0 2-2 4.5-5 4.5H3c1.5-1.5 1-3 1-5z" fill="#f6df5c" stroke="#b59a1c" stroke-width=".8"/><path d="M9.5 14.5c.5-2 2-3.5 5-4.5" fill="#e8c93c" stroke="#b59a1c" stroke-width=".6"/><circle cx="3" cy="4.5" r="2" fill="#2f6fd8" stroke="#1a4aa8" stroke-width=".6"/><path d="M4.5 5.5l4 2" stroke="#1a4aa8" stroke-width="1.3"/></svg>
<svg class="a" style="left:161px;top:88.5px" width="16" height="16" viewBox="0 0 16 16"><path d="M4 3h7l3 3v9H4z" fill="#fff" stroke="#7f8fa8" stroke-width=".9"/><path d="M6 6.5h5M6 8.5h6M6 10.5h6M6 12.5h3" stroke="#e0644c" stroke-width=".8"/><path d="M2.5 0v5M0 2.5h5M.8.8l3.4 3.4M4.2.8L.8 4.2" stroke="#f0b020" stroke-width=".9"/><path d="M9 15l.8-2.8 4.7-4.7 2 2-4.7 4.7z" fill="#f2c04c" stroke="#6a4a1a" stroke-width=".7"/></svg>
<div class="a tsep" style="left:183px;top:88px;height:18px"></div>
<svg class="a" style="left:190px;top:88.5px" width="16" height="16" viewBox="0 0 16 16"><path d="M1.3 14.3L12.3 1.8l2.5 2L3.8 15.8z" fill="#2a7be0" stroke="#1450a8" stroke-width=".6"/><path d="M3 14L13 2.8" stroke="#8cc0f8" stroke-width=".8"/><path d="M1.3 14.3l.8 1 1.7.5z" fill="#123"/></svg>
<svg class="a" style="left:212px;top:88.5px" width="16" height="16" viewBox="0 0 16 16"><path d="M2.5 14.5l1.2-4L12 2l2.6 2.5L6.3 13z" fill="#f08a3c" stroke="#a84a14" stroke-width=".7"/><path d="M2.5 14.5l1.2-4 2.6 2.5z" fill="#f3d9b4" stroke="#7a4a24" stroke-width=".5"/><path d="M2.5 14.5l.5-1.6 1 1z" fill="#222"/><path d="M11 3l2.6 2.5 1-1c.5-.5.4-1-.1-1.5l-1-1c-.5-.4-1-.4-1.5 0z" fill="#e8c0b0" stroke="#a84a14" stroke-width=".5"/></svg>
<svg class="a" style="left:234px;top:88.5px" width="16" height="16" viewBox="0 0 16 16"><rect x="1.5" y="3" width="13" height="9.5" fill="url(#gr)" stroke="#2a5fe0" stroke-width="1.3"/></svg>
<svg class="a" style="left:256px;top:88.5px" width="16" height="16" viewBox="0 0 16 16"><circle cx="8" cy="8" r="6" fill="url(#ge)" stroke="#4a6ae8" stroke-width="1.2"/></svg>
<div class="a tsep" style="left:279px;top:88px;height:18px"></div>
<svg class="a" style="left:286px;top:88.5px" width="16" height="16" viewBox="0 0 16 16"><rect x="1" y="1" width="15" height="14.5" fill="#9c9c9c"/><path d="M6 12.5c2-1 2-6 4.5-8M7 8.5h3" stroke="#fff" stroke-width="1.4" fill="none"/></svg>
<svg class="a" style="left:308px;top:88.5px" width="16" height="16" viewBox="0 0 16 16"><rect x="1" y="1" width="14.5" height="14" fill="#dedede" stroke="#d0d0d0"/><path d="M1 13l4.5-4.5 3 3L12 8l3.5 3.5V15H1z" fill="#f2f2f2"/><circle cx="11" cy="4.5" r="1.8" fill="#f4f4f4"/></svg>
<svg class="a" style="left:330px;top:88.5px" width="16" height="16" viewBox="0 0 16 16"><ellipse cx="7.5" cy="8" rx="6.5" ry="6" fill="#d8d8d8" stroke="#a8a8a8"/><circle cx="7.5" cy="8" r="1.2" fill="#fff"/><circle cx="7.5" cy="4.3" r="1.4" fill="#f6f6f6"/><circle cx="7.5" cy="11.7" r="1.4" fill="#f6f6f6"/><circle cx="3.8" cy="8" r="1.4" fill="#f6f6f6"/><circle cx="11.2" cy="8" r="1.4" fill="#f6f6f6"/><path d="M11 13.5h4.5" stroke="#a0a0a0" stroke-width="1.6"/></svg>
<svg class="a" style="left:352px;top:88.5px" width="16" height="16" viewBox="0 0 16 16"><path d="M6.5 12.5V3l7-2v9.5" fill="none" stroke="#b8b8b8" stroke-width="1.5"/><ellipse cx="4.8" cy="12.8" rx="2.2" ry="1.7" fill="#bdbdbd"/><ellipse cx="11.8" cy="10.8" rx="2.2" ry="1.7" fill="#bdbdbd"/><rect x="0" y="11" width="1.2" height="1.5" fill="#aaa"/></svg>
<div class="a tsep" style="left:375px;top:88px;height:18px"></div>
<svg class="a" style="left:383px;top:88.5px" width="16" height="16" viewBox="0 0 16 16"><rect x="0" y="0" width="9.5" height="8.5" fill="#f4e83c"/><text x="0" y="7" font-family="Liberation Sans,sans-serif" font-size="7.5" font-weight="bold" fill="#222">ab</text><rect x="0" y="12.5" width="15" height="3" fill="#f8f000"/><path d="M6 12l1-3L13.5 2.5l2 2L9 11z" fill="#6e9fe6" stroke="#2a4a8a" stroke-width=".6"/><path d="M6 12l1-3 2 2z" fill="#f3d9b4" stroke="#555" stroke-width=".4"/></svg>
<svg class="a" style="left:405px;top:88.5px" width="16" height="16" viewBox="0 0 16 16"><path d="M1.5 14L7 1.5h2L14.5 14h-3.2l-1-2.5H5.6l-1 2.5zM6.4 9.3h3.2L8 5z" fill="#1c56c8"/><path d="M0 7h16" stroke="#e81c1c" stroke-width="1.3"/></svg>
<svg class="a" style="left:428px;top:88.5px" width="16" height="16" viewBox="0 0 16 16"><path d="M4.5 12.5L9 1h2l4.5 11.5h-2.8l-.8-2.2H8l-.8 2.2zM8.8 8.3h2.4L10 4.8z" fill="#2a9a2c"/><path d="M.5 12.5l3-7h1.4l3 7H6l-.5-1.3H2.9l-.5 1.3zM3.4 9.8h1.6L4.2 7.5z" fill="#2a7be0"/><path d="M0 15h16" stroke="#1c8a1c" stroke-width="1.4"/></svg>
<div class="a tcap" style="left:453px;top:85px;width:12px;height:25px"><svg class="a" style="left:2.5px;top:4px" width="6" height="4" viewBox="0 0 7 5"><path d="M0 0l3 2.5-3 2.5zM4 0l3 2.5-3 2.5z" fill="#000"/></svg><div class="a capbar" style="left:3px;bottom:8px"></div><div class="a capar" style="left:3px;bottom:3px"></div></div>
<div class="a grip" style="left:470px;top:92px"></div>
<svg class="a" style="left:481px;top:88.5px" width="16" height="16" viewBox="0 0 16 16"><rect x="0" y="0" width="16" height="15" rx="1.5" fill="url(#gg)" stroke="#1c7a1c" stroke-width=".8"/><path d="M3 7.5h9M8.5 3.5l4 4-4 4" fill="none" stroke="#fff" stroke-width="1.8"/></svg>
<div class="a ddar" style="left:503px;top:95.5px"></div>
<div class="a tcap" style="left:655px;top:85px;width:12px;height:25px"><svg class="a" style="left:2.5px;top:4px" width="6" height="4" viewBox="0 0 7 5"><path d="M0 0l3 2.5-3 2.5zM4 0l3 2.5-3 2.5z" fill="#000"/></svg><div class="a capbar" style="left:3px;bottom:8px"></div><div class="a capar" style="left:3px;bottom:3px"></div></div>
<div class="a grip" style="left:672px;top:92px"></div>
<div class="a tcap" style="left:695px;top:85px;width:11px;height:25px"><svg class="a" style="left:2px;top:4px" width="6" height="4" viewBox="0 0 7 5"><path d="M0 0l3 2.5-3 2.5zM4 0l3 2.5-3 2.5z" fill="#000"/></svg><div class="a capbar" style="left:2.5px;bottom:8px"></div><div class="a capar" style="left:2.5px;bottom:3px"></div></div>
<!-- banner -->
<div class="a banner" style="left:707px;top:36px;width:195px;height:70px">
 <div class="a" style="left:0;top:0;width:195px;height:70px;background:linear-gradient(42.6deg,#318ddc 0,#2b83d4 55.8%,#265f90 56.3%,#235885 100%)"></div>
 <div class="a" style="left:36px;top:52px;width:70px;height:18px;background:linear-gradient(157deg,rgba(30,70,110,0) 42%,rgba(28,66,106,.6) 58%,rgba(30,70,110,0) 74%)"></div>
 <svg class="a" style="left:0;top:0" width="195" height="70" viewBox="0 0 195 70"><path d="M4.5 39.5L27 15.5M14.5 39.7h72l9.5-15" stroke="#fff" stroke-width="1.7" fill="none"/></svg>
 <div class="a bt1" style="left:22px;top:14px">全球学术</div>
 <div class="a bt2" style="left:110px;top:11.5px">快报</div>
 <div class="a bt3" style="left:161px;top:15px">cnki</div>
 <div class="a bt4" style="left:157px;top:30px">移动版</div>
 <div class="a bt5" style="left:19px;top:48.5px">全球文献整合, 学术热点速递</div>
</div>
<!-- tab bar -->
<div class="a" style="left:16px;top:111px;width:886px;height:25px;background:#fff;border-bottom:1px solid #a0a0a0;border-top:1px solid #d8d8d8"></div><div class="a" style="left:16px;top:136px;width:886px;height:3px;background:#fff"></div>
<svg class="a" style="left:16px;top:111px" width="240" height="27" viewBox="0 0 240 27"><path d="M9 8.5v8l-4-4z" fill="#fff" stroke="#000" stroke-width="1"/><path d="M14 24.5l8-3 19-17h183q4 0 4 4v16.5" fill="#fff" stroke="#8a8a8a" stroke-width="1"/><path d="M228.5 10v14" stroke="#555" stroke-width="1"/><path d="M20 25.5h208" stroke="#fff" stroke-width="2"/></svg>
<svg class="a" style="left:58px;top:115px" width="17" height="17" viewBox="0 0 20 19"><rect x="3" y="2" width="15" height="16" fill="#1b3f8f"/><path d="M4 1l3 0-1.5 4h-3zM9 1l3 0-1.5 4h-3zM14 1l3 0-1.5 4h-3z" fill="#e8eef8"/><rect x="1" y="6" width="18" height="9" fill="#1667a8" stroke="#222" stroke-width=".8"/><text x="10" y="13.5" font-family="Liberation Sans,sans-serif" font-size="7.5" font-weight="bold" fill="#fff" text-anchor="middle">PDF</text></svg>
<div class="a tabt" style="left:82px;top:115px">“疫”路同心践使命——线…</div>
<svg class="a" style="left:872px;top:118px" width="26" height="12" viewBox="0 0 26 12"><path d="M2.5 1.5v8l4-4z" fill="#fff" stroke="#000"/><path d="M17 2l7 7M24 2l-7 7" stroke="#000" stroke-width="1.7"/></svg>
<!-- doc area -->
<div class="a" style="left:19px;top:139px;width:861px;height:490px;background:#5f6985;border:1px solid;border-color:#696969 #d0d0d0 #d0d0d0 #696969"></div>
<div class="a" style="left:34px;top:141px;width:833px;height:2px;background:#000"></div>
<div class="a" style="left:34px;top:143px;width:833px;height:1px;background:#c8c4b0"></div>
<div class="a" style="left:33px;top:150px;width:836px;height:472px;background:#000"></div>
<div class="a" style="left:33px;top:621px;width:836px;height:1px;background:#c8c4b0"></div>
<div class="a" style="left:868px;top:150px;width:1px;height:472px;background:#c8c4b0"></div>
<div class="a page" style="left:34px;top:151px;width:833px;height:469px">
<div class="a" style="left:0;top:38px;width:833px;height:15px;background:#e8e8e8"></div>
<div class="a" style="left:0;top:53px;width:833px;height:5px;background:#c00000"></div>
<div class="a" style="left:197px;top:3px;width:340px;height:49px;background:#c00000"></div>
<div class="a" style="left:197px;top:12px;width:341px;text-align:center;font-size:24px;font-weight:bold;color:#fff;line-height:32px;letter-spacing:.5px">完成本年度公开承诺</div>
<div class="a part4" style="left:98.5px;top:10.5px">Part&nbsp; 4</div>
<svg class="a" style="left:20px;top:0" width="68" height="58" viewBox="-2 -1 68 58">
<defs><pattern id="dith" width="3" height="3" patternUnits="userSpaceOnUse"><rect width="3" height="3" fill="#e4e4e4"/><rect width="1.5" height="1.5" fill="#111"/><rect x="1.5" y="1.5" width="1.5" height="1.5" fill="#3a3a3a"/></pattern>
<pattern id="strp" width="2.5" height="4" patternUnits="userSpaceOnUse"><rect width="2.5" height="4" fill="#c8960e"/><rect width="1" height="4" fill="#8a5e08"/></pattern></defs>
<g transform="translate(0 3)" fill="url(#dith)" stroke="url(#dith)" stroke-width="10" stroke-linejoin="round"><path d="M28 4L48 9 54 28 58 40 40 42 20 44 6 40 12 22z"/><path d="M28.1 2.9C33 2.5 36 3 39 3.9C43 5.5 46 7 48.2 9.3C51 12 53 15 53.6 18.4C54.3 22 54.3 25 53.6 28.5C52.5 31.5 50.5 34 48.2 35.8C45.5 38.3 42.5 40 39 41.2C35 42.8 30.5 43.8 26.3 44C22.5 44.2 19 43.8 15.3 43L10.8 41.7L9.9 45.8L4.4 44.9L4 37.6L6.2 32.1L12.6 34.8C16.5 36.2 20.5 36.9 24.5 36.7C27.8 36.5 30.8 36 33.6 34.8C37 33.3 39.8 31 41.8 28.5C43.5 26.3 44.3 23.8 44.5 21.2C44.6 18.3 44 15.5 42.7 13C41.4 10.7 39.5 8.9 37.2 7.5C35.2 6.4 33 5.9 30.8 5.7Z"/><path d="M10.8 19.3L28.1 9.8L30.8 13.9L27.2 16.6L59.1 36.7L55.5 44L46.3 38.5L24.5 24.8L19.9 23L15.3 25.7Z"/></g>
<g fill="url(#strp)" stroke="url(#strp)" stroke-width=".6"><path d="M28.1 2.9C33 2.5 36 3 39 3.9C43 5.5 46 7 48.2 9.3C51 12 53 15 53.6 18.4C54.3 22 54.3 25 53.6 28.5C52.5 31.5 50.5 34 48.2 35.8C45.5 38.3 42.5 40 39 41.2C35 42.8 30.5 43.8 26.3 44C22.5 44.2 19 43.8 15.3 43L10.8 41.7L9.9 45.8L4.4 44.9L4 37.6L6.2 32.1L12.6 34.8C16.5 36.2 20.5 36.9 24.5 36.7C27.8 36.5 30.8 36 33.6 34.8C37 33.3 39.8 31 41.8 28.5C43.5 26.3 44.3 23.8 44.5 21.2C44.6 18.3 44 15.5 42.7 13C41.4 10.7 39.5 8.9 37.2 7.5C35.2 6.4 33 5.9 30.8 5.7Z" transform="translate(0 4)"/><path d="M28.1 2.9C33 2.5 36 3 39 3.9C43 5.5 46 7 48.2 9.3C51 12 53 15 53.6 18.4C54.3 22 54.3 25 53.6 28.5C52.5 31.5 50.5 34 48.2 35.8C45.5 38.3 42.5 40 39 41.2C35 42.8 30.5 43.8 26.3 44C22.5 44.2 19 43.8 15.3 43L10.8 41.7L9.9 45.8L4.4 44.9L4 37.6L6.2 32.1L12.6 34.8C16.5 36.2 20.5 36.9 24.5 36.7C27.8 36.5 30.8 36 33.6 34.8C37 33.3 39.8 31 41.8 28.5C43.5 26.3 44.3 23.8 44.5 21.2C44.6 18.3 44 15.5 42.7 13C41.4 10.7 39.5 8.9 37.2 7.5C35.2 6.4 33 5.9 30.8 5.7Z" transform="translate(0 3)"/><path d="M28.1 2.9C33 2.5 36 3 39 3.9C43 5.5 46 7 48.2 9.3C51 12 53 15 53.6 18.4C54.3 22 54.3 25 53.6 28.5C52.5 31.5 50.5 34 48.2 35.8C45.5 38.3 42.5 40 39 41.2C35 42.8 30.5 43.8 26.3 44C22.5 44.2 19 43.8 15.3 43L10.8 41.7L9.9 45.8L4.4 44.9L4 37.6L6.2 32.1L12.6 34.8C16.5 36.2 20.5 36.9 24.5 36.7C27.8 36.5 30.8 36 33.6 34.8C37 33.3 39.8 31 41.8 28.5C43.5 26.3 44.3 23.8 44.5 21.2C44.6 18.3 44 15.5 42.7 13C41.4 10.7 39.5 8.9 37.2 7.5C35.2 6.4 33 5.9 30.8 5.7Z" transform="translate(0 2)"/><path d="M28.1 2.9C33 2.5 36 3 39 3.9C43 5.5 46 7 48.2 9.3C51 12 53 15 53.6 18.4C54.3 22 54.3 25 53.6 28.5C52.5 31.5 50.5 34 48.2 35.8C45.5 38.3 42.5 40 39 41.2C35 42.8 30.5 43.8 26.3 44C22.5 44.2 19 43.8 15.3 43L10.8 41.7L9.9 45.8L4.4 44.9L4 37.6L6.2 32.1L12.6 34.8C16.5 36.2 20.5 36.9 24.5 36.7C27.8 36.5 30.8 36 33.6 34.8C37 33.3 39.8 31 41.8 28.5C43.5 26.3 44.3 23.8 44.5 21.2C44.6 18.3 44 15.5 42.7 13C41.4 10.7 39.5 8.9 37.2 7.5C35.2 6.4 33 5.9 30.8 5.7Z" transform="translate(0 1)"/></g>
<path d="M28.1 2.9C33 2.5 36 3 39 3.9C43 5.5 46 7 48.2 9.3C51 12 53 15 53.6 18.4C54.3 22 54.3 25 53.6 28.5C52.5 31.5 50.5 34 48.2 35.8C45.5 38.3 42.5 40 39 41.2C35 42.8 30.5 43.8 26.3 44C22.5 44.2 19 43.8 15.3 43L10.8 41.7L9.9 45.8L4.4 44.9L4 37.6L6.2 32.1L12.6 34.8C16.5 36.2 20.5 36.9 24.5 36.7C27.8 36.5 30.8 36 33.6 34.8C37 33.3 39.8 31 41.8 28.5C43.5 26.3 44.3 23.8 44.5 21.2C44.6 18.3 44 15.5 42.7 13C41.4 10.7 39.5 8.9 37.2 7.5C35.2 6.4 33 5.9 30.8 5.7Z" fill="#f9e23a"/>
<g fill="url(#strp)" stroke="url(#strp)" stroke-width=".6"><path d="M10.8 19.3L28.1 9.8L30.8 13.9L27.2 16.6L59.1 36.7L55.5 44L46.3 38.5L24.5 24.8L19.9 23L15.3 25.7Z" transform="translate(0 4)"/><path d="M10.8 19.3L28.1 9.8L30.8 13.9L27.2 16.6L59.1 36.7L55.5 44L46.3 38.5L24.5 24.8L19.9 23L15.3 25.7Z" transform="translate(0 3)"/><path d="M10.8 19.3L28.1 9.8L30.8 13.9L27.2 16.6L59.1 36.7L55.5 44L46.3 38.5L24.5 24.8L19.9 23L15.3 25.7Z" transform="translate(0 2)"/><path d="M10.8 19.3L28.1 9.8L30.8 13.9L27.2 16.6L59.1 36.7L55.5 44L46.3 38.5L24.5 24.8L19.9 23L15.3 25.7Z" transform="translate(0 1)"/></g>
<path d="M10.8 19.3L28.1 9.8L30.8 13.9L27.2 16.6L59.1 36.7L55.5 44L46.3 38.5L24.5 24.8L19.9 23L15.3 25.7Z" fill="#f9e23a"/>
</svg>
<div class="a" style="left:125px;top:94px;font-size:27.9px;font-weight:bold;color:#000;line-height:36px;white-space:nowrap">“四诺”<span style="margin-left:16px">党员教育体系的构建</span></div>
<!-- left buttons -->
<div class="a lbtn" style="left:130px;top:168px;width:118px;height:55px;line-height:55px;color:#ff0000;font-size:20.5px">公开<b>承诺</b></div>
<div class="a lbtn" style="left:131px;top:238px;width:117px;height:32px;line-height:32px">履责<b>践诺</b></div>
<div class="a lbtn" style="left:133px;top:284px;width:115px;height:30px;line-height:30px">述责<b>应诺</b></div>
<div class="a lbtn" style="left:130px;top:332px;width:118px;height:26px;line-height:26px">民主<b>评诺</b></div>
<!-- text box -->
<div class="a tbox" style="left:330px;top:151px;width:377px;height:98px"></div>
<div class="a ttxt" style="left:338px;top:157px">学生党员制定<b>年度成长计划</b>，同时接受党总支<br>和党支部安排的工作任务，通过线上和线下<b>多</b><br><b>种途径公开</b>自己的承诺内容。</div>
<!-- image 1 -->
<div class="a" style="left:474px;top:271px;width:78px;height:130px;background:rgba(60,60,60,.35);filter:blur(4px)"></div>
<div class="a" style="left:331px;top:269px;width:216px;height:158px;background:#fff;border:2px solid #b00c18;box-shadow:0 1px 1px rgba(90,0,0,.5)"></div>
<div class="a" style="left:474px;top:271px;width:6px;height:125px;background:linear-gradient(90deg,#9c9c9c,#d0d0d0)"></div><svg class="a" style="left:332px;top:271px" width="142" height="125" viewBox="0 0 142 125"><rect width="142" height="125" fill="#bfb2ab"/><rect width="142" height="17" fill="#dcd8d4"/><path d="M0 8l16 3 0 4-16 2z" fill="#c03a2a"/><path d="M0 14l20 1v2H0z" fill="#e8c44a"/><text x="22" y="14" font-family="Liberation Sans,Noto Sans CJK SC,sans-serif" font-size="12.5" font-weight="bold" fill="#b4281e" letter-spacing="6.3">党员承诺墙</text><rect x="-1.3" y="20" width="11" height="19.8" fill="#dad9d5"/><rect x="0.7" y="23" width="5.7" height=".8" fill="#4a4a4a" opacity="0.6"/><rect x="0.7" y="24.6" width="5.6" height=".8" fill="#4a4a4a" opacity="0.5"/><rect x="0.7" y="26.5" width="4.4" height=".8" fill="#4a4a4a" opacity="0.5"/><rect x="0.7" y="28.3" width="6.5" height=".8" fill="#4a4a4a" opacity="0.5"/><rect x="0.7" y="30.1" width="6" height=".8" fill="#4a4a4a" opacity="0.8"/><rect x="0.7" y="32" width="5.3" height=".8" fill="#4a4a4a" opacity="0.8"/><rect x="0.7" y="33.6" width="6.6" height=".8" fill="#4a4a4a" opacity="0.6"/><rect x="0.7" y="35.3" width="4.5" height=".8" fill="#4a4a4a" opacity="0.6"/><rect x="0.7" y="37.4" width="4.7" height=".8" fill="#4a4a4a" opacity="0.7"/><rect x="0.2" y="42.2" width="11" height="24.6" fill="#dad9d5"/><rect x="2.2" y="45.2" width="5.9" height=".8" fill="#4a4a4a" opacity="0.6"/><rect x="2.2" y="47.1" width="6.4" height=".8" fill="#4a4a4a" opacity="0.6"/><rect x="2.2" y="49.3" width="5.2" height=".8" fill="#4a4a4a" opacity="0.5"/><rect x="2.2" y="51" width="6.4" height=".8" fill="#4a4a4a" opacity="0.5"/><rect x="2.2" y="52.8" width="5.6" height=".8" fill="#4a4a4a" opacity="0.6"/><rect x="2.2" y="54.6" width="5.9" height=".8" fill="#4a4a4a" opacity="0.5"/><rect x="2.2" y="56.6" width="4.7" height=".8" fill="#4a4a4a" opacity="0.6"/><rect x="2.2" y="58.7" width="5.4" height=".8" fill="#4a4a4a" opacity="0.8"/><rect x="2.2" y="60.4" width="5.8" height=".8" fill="#4a4a4a" opacity="0.8"/><rect x="2.2" y="62.4" width="5.2" height=".8" fill="#4a4a4a" opacity="0.6"/><rect x="2.2" y="64.3" width="6.4" height=".8" fill="#4a4a4a" opacity="0.5"/><rect x="-1.3" y="69" width="11" height="26.4" fill="#dad9d5"/><rect x="0.7" y="72" width="6.2" height=".8" fill="#4a4a4a" opacity="0.7"/><rect x="0.7" y="74.2" width="6.5" height=".8" fill="#4a4a4a" opacity="0.6"/><rect x="0.7" y="76" width="6.1" height=".8" fill="#4a4a4a" opacity="0.5"/><rect x="0.7" y="77.9" width="4.7" height=".8" fill="#4a4a4a" opacity="0.5"/><rect x="0.7" y="79.5" width="6.4" height=".8" fill="#4a4a4a" opacity="0.5"/><rect x="0.7" y="81.2" width="5.3" height=".8" fill="#4a4a4a" opacity="0.8"/><rect x="0.7" y="82.9" width="5.5" height=".8" fill="#4a4a4a" opacity="0.7"/><rect x="0.7" y="85" width="6.5" height=".8" fill="#4a4a4a" opacity="0.8"/><rect x="0.7" y="86.8" width="5.4" height=".8" fill="#4a4a4a" opacity="0.6"/><rect x="0.7" y="88.9" width="6.9" height=".8" fill="#4a4a4a" opacity="0.5"/><rect x="0.7" y="90.6" width="4.8" height=".8" fill="#4a4a4a" opacity="0.5"/><rect x="0.7" y="92.5" width="5.8" height=".8" fill="#4a4a4a" opacity="0.6"/><rect x="-0.5" y="97.9" width="11" height="22.4" fill="#d8d6d0"/><rect x="1.5" y="100.9" width="4.6" height=".8" fill="#4a4a4a" opacity="0.8"/><rect x="1.5" y="103" width="6" height=".8" fill="#4a4a4a" opacity="0.7"/><rect x="1.5" y="104.9" width="6.6" height=".8" fill="#4a4a4a" opacity="0.8"/><rect x="1.5" y="106.9" width="5.8" height=".8" fill="#4a4a4a" opacity="0.6"/><rect x="1.5" y="108.8" width="5.5" height=".8" fill="#4a4a4a" opacity="0.6"/><rect x="1.5" y="110.5" width="7" height=".8" fill="#4a4a4a" opacity="0.6"/><rect x="1.5" y="112.1" width="5.9" height=".8" fill="#4a4a4a" opacity="0.5"/><rect x="1.5" y="114.1" width="5.7" height=".8" fill="#4a4a4a" opacity="0.8"/><rect x="1.5" y="116" width="4.4" height=".8" fill="#4a4a4a" opacity="0.5"/><rect x="1.5" y="117.9" width="6" height=".8" fill="#4a4a4a" opacity="0.8"/><rect x="11.9" y="19.3" width="14" height="23.9" fill="#cbc9c3"/><rect x="13.9" y="22.3" width="7.2" height=".8" fill="#4a4a4a" opacity="0.5"/><rect x="13.9" y="24.4" width="9" height=".8" fill="#4a4a4a" opacity="0.6"/><rect x="13.9" y="26.4" width="8.1" height=".8" fill="#4a4a4a" opacity="0.5"/><rect x="13.9" y="28.6" width="7.4" height=".8" fill="#4a4a4a" opacity="0.7"/><rect x="13.9" y="30.7" width="9" height=".8" fill="#4a4a4a" opacity="0.6"/><rect x="13.9" y="32.7" width="6.4" height=".8" fill="#4a4a4a" opacity="0.8"/><rect x="13.9" y="34.6" width="9.6" height=".8" fill="#4a4a4a" opacity="0.6"/><rect x="13.9" y="36.4" width="8.2" height=".8" fill="#4a4a4a" opacity="0.7"/><rect x="13.9" y="38.3" width="8.5" height=".8" fill="#4a4a4a" opacity="0.8"/><rect x="13.9" y="40.4" width="6.8" height=".8" fill="#4a4a4a" opacity="0.5"/><rect x="11.6" y="46.7" width="14" height="20.4" fill="#cbc9c3"/><rect x="13.6" y="49.7" width="6.1" height=".8" fill="#4a4a4a" opacity="0.5"/><rect x="13.6" y="51.5" width="7" height=".8" fill="#4a4a4a" opacity="0.7"/><rect x="13.6" y="53.7" width="7.8" height=".8" fill="#4a4a4a" opacity="0.8"/><rect x="13.6" y="55.8" width="9.8" height=".8" fill="#4a4a4a" opacity="0.6"/><rect x="13.6" y="57.6" width="6.9" height=".8" fill="#4a4a4a" opacity="0.5"/><rect x="13.6" y="59.3" width="8.5" height=".8" fill="#4a4a4a" opacity="0.8"/><rect x="13.6" y="61.4" width="7.9" height=".8" fill="#4a4a4a" opacity="0.7"/><rect x="13.6" y="63.5" width="6.3" height=".8" fill="#4a4a4a" opacity="0.7"/><rect x="13.2" y="70.6" width="14" height="27" fill="#cbc9c3"/><rect x="15.2" y="73.6" width="7.7" height=".8" fill="#4a4a4a" opacity="0.7"/><rect x="15.2" y="75.2" width="9.8" height=".8" fill="#4a4a4a" opacity="0.7"/><rect x="15.2" y="77.1" width="9" height=".8" fill="#4a4a4a" opacity="0.5"/><rect x="15.2" y="78.8" width="10" height=".8" fill="#4a4a4a" opacity="0.5"/><rect x="15.2" y="80.7" width="7.9" height=".8" fill="#4a4a4a" opacity="0.7"/><rect x="15.2" y="82.7" width="8.4" height=".8" fill="#4a4a4a" opacity="0.6"/><rect x="15.2" y="84.9" width="6.6" height=".8" fill="#4a4a4a" opacity="0.7"/><rect x="15.2" y="86.5" width="9.2" height=".8" fill="#4a4a4a" opacity="0.7"/><rect x="15.2" y="88.1" width="9" height=".8" fill="#4a4a4a" opacity="0.5"/><rect x="15.2" y="90.3" width="6.8" height=".8" fill="#4a4a4a" opacity="0.8"/><rect x="15.2" y="92" width="6.9" height=".8" fill="#4a4a4a" opacity="0.7"/><rect x="15.2" y="94" width="7.3" height=".8" fill="#4a4a4a" opacity="0.7"/><rect x="12.5" y="99.2" width="14" height="25.8" fill="#cbc9c3"/><rect x="14.5" y="102.2" width="9.3" height=".8" fill="#4a4a4a" opacity="0.7"/><rect x="14.5" y="104.3" width="9.5" height=".8" fill="#4a4a4a" opacity="0.5"/><rect x="14.5" y="106" width="8" height=".8" fill="#4a4a4a" opacity="0.8"/><rect x="14.5" y="108.1" width="8.4" height=".8" fill="#4a4a4a" opacity="0.8"/><rect x="14.5" y="109.8" width="6.6" height=".8" fill="#4a4a4a" opacity="0.7"/><rect x="14.5" y="111.4" width="6.2" height=".8" fill="#4a4a4a" opacity="0.7"/><rect x="14.5" y="113.4" width="7.9" height=".8" fill="#4a4a4a" opacity="0.8"/><rect x="14.5" y="115.5" width="6.2" height=".8" fill="#4a4a4a" opacity="0.5"/><rect x="14.5" y="117.1" width="6.4" height=".8" fill="#4a4a4a" opacity="0.6"/><rect x="14.5" y="118.7" width="9.6" height=".8" fill="#4a4a4a" opacity="0.5"/><rect x="14.5" y="120.5" width="9.9" height=".8" fill="#4a4a4a" opacity="0.7"/><rect x="14.5" y="122.2" width="7.1" height=".8" fill="#4a4a4a" opacity="0.7"/><rect x="33.3" y="19.7" width="18" height="24.3" fill="#e3e2de"/><rect x="35.3" y="22.7" width="13.4" height=".8" fill="#4a4a4a" opacity="0.5"/><rect x="35.3" y="24.6" width="10.7" height=".8" fill="#4a4a4a" opacity="0.6"/><rect x="35.3" y="26.4" width="12.2" height=".8" fill="#4a4a4a" opacity="0.6"/><rect x="35.3" y="28.1" width="10.1" height=".8" fill="#4a4a4a" opacity="0.5"/><rect x="35.3" y="30.2" width="13.7" height=".8" fill="#4a4a4a" opacity="0.7"/><rect x="35.3" y="32" width="9.8" height=".8" fill="#4a4a4a" opacity="0.5"/><rect x="35.3" y="33.9" width="12.6" height=".8" fill="#4a4a4a" opacity="0.5"/><rect x="35.3" y="36" width="9.3" height=".8" fill="#4a4a4a" opacity="0.7"/><rect x="35.3" y="37.8" width="12.4" height=".8" fill="#4a4a4a" opacity="0.8"/><rect x="35.3" y="39.6" width="10.8" height=".8" fill="#4a4a4a" opacity="0.6"/><rect x="35.3" y="41.3" width="10.4" height=".8" fill="#4a4a4a" opacity="0.6"/><rect x="32.4" y="47.3" width="18" height="22.6" fill="#e6dfb4"/><rect x="34.4" y="50.3" width="11.3" height=".8" fill="#4a4a4a" opacity="0.5"/><rect x="34.4" y="52.5" width="12.8" height=".8" fill="#4a4a4a" opacity="0.8"/><rect x="34.4" y="54.1" width="9.9" height=".8" fill="#4a4a4a" opacity="0.5"/><rect x="34.4" y="56.2" width="9.9" height=".8" fill="#4a4a4a" opacity="0.5"/><rect x="34.4" y="58.1" width="13.5" height=".8" fill="#4a4a4a" opacity="0.8"/><rect x="34.4" y="59.8" width="9.2" height=".8" fill="#4a4a4a" opacity="0.8"/><rect x="34.4" y="61.8" width="12.3" height=".8" fill="#4a4a4a" opacity="0.5"/><rect x="34.4" y="63.4" width="12.3" height=".8" fill="#4a4a4a" opacity="0.6"/><rect x="34.4" y="65" width="13.7" height=".8" fill="#4a4a4a" opacity="0.7"/><rect x="34.4" y="67.1" width="8.9" height=".8" fill="#4a4a4a" opacity="0.8"/><rect x="33.5" y="73.5" width="18" height="23.4" fill="#e3e2de"/><rect x="35.5" y="76.5" width="10.7" height=".8" fill="#4a4a4a" opacity="0.8"/><rect x="35.5" y="78.5" width="8.6" height=".8" fill="#4a4a4a" opacity="0.7"/><rect x="35.5" y="80.7" width="13.8" height=".8" fill="#4a4a4a" opacity="0.6"/><rect x="35.5" y="82.4" width="13.6" height=".8" fill="#4a4a4a" opacity="0.7"/><rect x="35.5" y="84.3" width="9.6" height=".8" fill="#4a4a4a" opacity="0.6"/><rect x="35.5" y="86.3" width="9.9" height=".8" fill="#4a4a4a" opacity="0.8"/><rect x="35.5" y="88.5" width="8.6" height=".8" fill="#4a4a4a" opacity="0.5"/><rect x="35.5" y="90.4" width="13.9" height=".8" fill="#4a4a4a" opacity="0.7"/><rect x="35.5" y="92.2" width="10.9" height=".8" fill="#4a4a4a" opacity="0.7"/><rect x="35.5" y="94.2" width="12.1" height=".8" fill="#4a4a4a" opacity="0.7"/><rect x="33.4" y="100.9" width="18" height="21.7" fill="#d2d1cd"/><rect x="35.4" y="103.9" width="10.3" height=".8" fill="#4a4a4a" opacity="0.8"/><rect x="35.4" y="105.9" width="12" height=".8" fill="#4a4a4a" opacity="0.6"/><rect x="35.4" y="107.8" width="8.7" height=".8" fill="#4a4a4a" opacity="0.5"/><rect x="35.4" y="109.4" width="12.5" height=".8" fill="#4a4a4a" opacity="0.6"/><rect x="35.4" y="111.1" width="8.9" height=".8" fill="#4a4a4a" opacity="0.8"/><rect x="35.4" y="113.2" width="12.2" height=".8" fill="#4a4a4a" opacity="0.6"/><rect x="35.4" y="115" width="10" height=".8" fill="#4a4a4a" opacity="0.6"/><rect x="35.4" y="116.7" width="10.9" height=".8" fill="#4a4a4a" opacity="0.6"/><rect x="35.4" y="118.8" width="13.8" height=".8" fill="#4a4a4a" opacity="0.7"/><rect x="35.4" y="120.6" width="13.8" height=".8" fill="#4a4a4a" opacity="0.6"/><rect x="52.5" y="20.1" width="16" height="23.7" fill="#d8d6d0"/><rect x="54.5" y="23.1" width="8.4" height=".8" fill="#4a4a4a" opacity="0.8"/><rect x="54.5" y="24.8" width="11.1" height=".8" fill="#4a4a4a" opacity="0.5"/><rect x="54.5" y="26.8" width="9.1" height=".8" fill="#4a4a4a" opacity="0.6"/><rect x="54.5" y="28.7" width="7.6" height=".8" fill="#4a4a4a" opacity="0.8"/><rect x="54.5" y="30.8" width="7.9" height=".8" fill="#4a4a4a" opacity="0.8"/><rect x="54.5" y="32.9" width="10.1" height=".8" fill="#4a4a4a" opacity="0.8"/><rect x="54.5" y="34.9" width="9.6" height=".8" fill="#4a4a4a" opacity="0.6"/><rect x="54.5" y="36.9" width="7.9" height=".8" fill="#4a4a4a" opacity="0.8"/><rect x="54.5" y="38.9" width="9.7" height=".8" fill="#4a4a4a" opacity="0.6"/><rect x="54.5" y="41" width="9.6" height=".8" fill="#4a4a4a" opacity="0.8"/><rect x="53" y="46.8" width="16" height="27.8" fill="#dad9d5"/><rect x="55" y="49.8" width="10" height=".8" fill="#4a4a4a" opacity="0.8"/><rect x="55" y="51.8" width="10.5" height=".8" fill="#4a4a4a" opacity="0.5"/><rect x="55" y="53.4" width="7.8" height=".8" fill="#4a4a4a" opacity="0.6"/><rect x="55" y="55.1" width="11.2" height=".8" fill="#4a4a4a" opacity="0.7"/><rect x="55" y="57" width="10.2" height=".8" fill="#4a4a4a" opacity="0.7"/><rect x="55" y="58.9" width="7.2" height=".8" fill="#4a4a4a" opacity="0.8"/><rect x="55" y="61" width="9.6" height=".8" fill="#4a4a4a" opacity="0.7"/><rect x="55" y="63" width="7.5" height=".8" fill="#4a4a4a" opacity="0.7"/><rect x="55" y="64.7" width="7.6" height=".8" fill="#4a4a4a" opacity="0.6"/><rect x="55" y="66.8" width="8.2" height=".8" fill="#4a4a4a" opacity="0.7"/><rect x="55" y="68.9" width="9.6" height=".8" fill="#4a4a4a" opacity="0.6"/><rect x="55" y="70.8" width="10.5" height=".8" fill="#4a4a4a" opacity="0.8"/><rect x="51.5" y="77.6" width="16" height="18.9" fill="#d2d1cd"/><rect x="53.5" y="80.6" width="10.3" height=".8" fill="#4a4a4a" opacity="0.7"/><rect x="53.5" y="82.6" width="7.8" height=".8" fill="#4a4a4a" opacity="0.6"/><rect x="53.5" y="84.5" width="11.9" height=".8" fill="#4a4a4a" opacity="0.5"/><rect x="53.5" y="86.2" width="9.6" height=".8" fill="#4a4a4a" opacity="0.7"/><rect x="53.5" y="88" width="9.4" height=".8" fill="#4a4a4a" opacity="0.8"/><rect x="53.5" y="90.2" width="9.8" height=".8" fill="#4a4a4a" opacity="0.6"/><rect x="53.5" y="91.8" width="9.5" height=".8" fill="#4a4a4a" opacity="0.6"/><rect x="53.5" y="93.5" width="9.6" height=".8" fill="#4a4a4a" opacity="0.8"/><rect x="50.7" y="99" width="16" height="26" fill="#d2d1cd"/><rect x="52.7" y="102" width="7.6" height=".8" fill="#4a4a4a" opacity="0.7"/><rect x="52.7" y="103.8" width="8.9" height=".8" fill="#4a4a4a" opacity="0.7"/><rect x="52.7" y="105.8" width="8.5" height=".8" fill="#4a4a4a" opacity="0.5"/><rect x="52.7" y="107.6" width="9.6" height=".8" fill="#4a4a4a" opacity="0.8"/><rect x="52.7" y="109.4" width="8" height=".8" fill="#4a4a4a" opacity="0.8"/><rect x="52.7" y="111.4" width="9.1" height=".8" fill="#4a4a4a" opacity="0.7"/><rect x="52.7" y="113.3" width="9" height=".8" fill="#4a4a4a" opacity="0.5"/><rect x="52.7" y="115.1" width="8.8" height=".8" fill="#4a4a4a" opacity="0.6"/><rect x="52.7" y="116.9" width="11.7" height=".8" fill="#4a4a4a" opacity="0.5"/><rect x="52.7" y="118.5" width="10.8" height=".8" fill="#4a4a4a" opacity="0.6"/><rect x="52.7" y="120.2" width="9.1" height=".8" fill="#4a4a4a" opacity="0.8"/><rect x="52.7" y="121.8" width="11.6" height=".8" fill="#4a4a4a" opacity="0.8"/><rect x="71.2" y="19.2" width="18" height="25.9" fill="#d2d1cd"/><rect x="73.2" y="22.2" width="9.9" height=".8" fill="#4a4a4a" opacity="0.7"/><rect x="73.2" y="23.9" width="10.5" height=".8" fill="#4a4a4a" opacity="0.8"/><rect x="73.2" y="26" width="12.9" height=".8" fill="#4a4a4a" opacity="0.7"/><rect x="73.2" y="28.1" width="13.7" height=".8" fill="#4a4a4a" opacity="0.7"/><rect x="73.2" y="30.2" width="8.7" height=".8" fill="#4a4a4a" opacity="0.7"/><rect x="73.2" y="32" width="12.6" height=".8" fill="#4a4a4a" opacity="0.7"/><rect x="73.2" y="33.8" width="8.7" height=".8" fill="#4a4a4a" opacity="0.8"/><rect x="73.2" y="35.5" width="11" height=".8" fill="#4a4a4a" opacity="0.6"/><rect x="73.2" y="37.3" width="12.5" height=".8" fill="#4a4a4a" opacity="0.8"/><rect x="73.2" y="39" width="12.1" height=".8" fill="#4a4a4a" opacity="0.6"/><rect x="73.2" y="41" width="10.6" height=".8" fill="#4a4a4a" opacity="0.5"/><rect x="73.2" y="42.7" width="9.6" height=".8" fill="#4a4a4a" opacity="0.8"/><rect x="71.8" y="47.1" width="18" height="28.9" fill="#cbc9c3"/><rect x="73.8" y="50.1" width="11.5" height=".8" fill="#4a4a4a" opacity="0.5"/><rect x="73.8" y="51.9" width="11.5" height=".8" fill="#4a4a4a" opacity="0.6"/><rect x="73.8" y="53.7" width="12.9" height=".8" fill="#4a4a4a" opacity="0.5"/><rect x="73.8" y="55.3" width="13.3" height=".8" fill="#4a4a4a" opacity="0.6"/><rect x="73.8" y="57.3" width="9.6" height=".8" fill="#4a4a4a" opacity="0.6"/><rect x="73.8" y="59.4" width="11.2" height=".8" fill="#4a4a4a" opacity="0.7"/><rect x="73.8" y="61.2" width="12.2" height=".8" fill="#4a4a4a" opacity="0.7"/><rect x="73.8" y="63.3" width="13.2" height=".8" fill="#4a4a4a" opacity="0.5"/><rect x="73.8" y="65.4" width="10.6" height=".8" fill="#4a4a4a" opacity="0.7"/><rect x="73.8" y="67.3" width="10.1" height=".8" fill="#4a4a4a" opacity="0.8"/><rect x="73.8" y="69.5" width="9.1" height=".8" fill="#4a4a4a" opacity="0.6"/><rect x="73.8" y="71.5" width="12.9" height=".8" fill="#4a4a4a" opacity="0.8"/><rect x="73.8" y="73.4" width="8.8" height=".8" fill="#4a4a4a" opacity="0.8"/><rect x="71.2" y="78.8" width="18" height="23.6" fill="#cbc9c3"/><rect x="73.2" y="81.8" width="9" height=".8" fill="#4a4a4a" opacity="0.5"/><rect x="73.2" y="83.8" width="12.2" height=".8" fill="#4a4a4a" opacity="0.8"/><rect x="73.2" y="85.8" width="12" height=".8" fill="#4a4a4a" opacity="0.8"/><rect x="73.2" y="87.7" width="11.5" height=".8" fill="#4a4a4a" opacity="0.5"/><rect x="73.2" y="89.7" width="9.7" height=".8" fill="#4a4a4a" opacity="0.8"/><rect x="73.2" y="91.7" width="10.1" height=".8" fill="#4a4a4a" opacity="0.5"/><rect x="73.2" y="93.5" width="12" height=".8" fill="#4a4a4a" opacity="0.7"/><rect x="73.2" y="95.1" width="8.8" height=".8" fill="#4a4a4a" opacity="0.7"/><rect x="73.2" y="97.1" width="10.6" height=".8" fill="#4a4a4a" opacity="0.5"/><rect x="73.2" y="99" width="8.5" height=".8" fill="#4a4a4a" opacity="0.6"/><rect x="71.9" y="106.4" width="18" height="18.6" fill="#d2d1cd"/><rect x="73.9" y="109.4" width="9.7" height=".8" fill="#4a4a4a" opacity="0.5"/><rect x="73.9" y="111.5" width="12.3" height=".8" fill="#4a4a4a" opacity="0.6"/><rect x="73.9" y="113.1" width="11.2" height=".8" fill="#4a4a4a" opacity="0.7"/><rect x="73.9" y="115" width="9.8" height=".8" fill="#4a4a4a" opacity="0.7"/><rect x="73.9" y="117.2" width="9.7" height=".8" fill="#4a4a4a" opacity="0.5"/><rect x="73.9" y="119" width="10.8" height=".8" fill="#4a4a4a" opacity="0.7"/><rect x="73.9" y="120.7" width="12.9" height=".8" fill="#4a4a4a" opacity="0.7"/><rect x="73.9" y="122.6" width="9.5" height=".8" fill="#4a4a4a" opacity="0.8"/><rect x="96.8" y="19.7" width="18" height="20.7" fill="#e3e2de"/><rect x="98.8" y="22.7" width="11.9" height=".8" fill="#4a4a4a" opacity="0.7"/><rect x="98.8" y="24.8" width="11.1" height=".8" fill="#4a4a4a" opacity="0.8"/><rect x="98.8" y="26.5" width="11.7" height=".8" fill="#4a4a4a" opacity="0.8"/><rect x="98.8" y="28.1" width="8.5" height=".8" fill="#4a4a4a" opacity="0.7"/><rect x="98.8" y="29.9" width="12.4" height=".8" fill="#4a4a4a" opacity="0.5"/><rect x="98.8" y="31.8" width="12.4" height=".8" fill="#4a4a4a" opacity="0.6"/><rect x="98.8" y="33.5" width="8.8" height=".8" fill="#4a4a4a" opacity="0.5"/><rect x="98.8" y="35.2" width="12.1" height=".8" fill="#4a4a4a" opacity="0.7"/><rect x="98.8" y="37.1" width="10.1" height=".8" fill="#4a4a4a" opacity="0.7"/><rect x="96.5" y="44.3" width="18" height="23.3" fill="#dad9d5"/><rect x="98.5" y="47.3" width="10" height=".8" fill="#4a4a4a" opacity="0.6"/><rect x="98.5" y="49.5" width="9.1" height=".8" fill="#4a4a4a" opacity="0.8"/><rect x="98.5" y="51.2" width="10.4" height=".8" fill="#4a4a4a" opacity="0.8"/><rect x="98.5" y="53.3" width="10.8" height=".8" fill="#4a4a4a" opacity="0.5"/><rect x="98.5" y="55.2" width="10.5" height=".8" fill="#4a4a4a" opacity="0.8"/><rect x="98.5" y="56.9" width="10.4" height=".8" fill="#4a4a4a" opacity="0.8"/><rect x="98.5" y="58.5" width="10.7" height=".8" fill="#4a4a4a" opacity="0.8"/><rect x="98.5" y="60.6" width="8.6" height=".8" fill="#4a4a4a" opacity="0.5"/><rect x="98.5" y="62.2" width="13.6" height=".8" fill="#4a4a4a" opacity="0.6"/><rect x="98.5" y="64.3" width="13.4" height=".8" fill="#4a4a4a" opacity="0.6"/><rect x="98.7" y="71.5" width="18" height="25.4" fill="#e3e2de"/><rect x="100.7" y="74.5" width="12.3" height=".8" fill="#4a4a4a" opacity="0.8"/><rect x="100.7" y="76.3" width="12.4" height=".8" fill="#4a4a4a" opacity="0.7"/><rect x="100.7" y="78.4" width="13.7" height=".8" fill="#4a4a4a" opacity="0.5"/><rect x="100.7" y="80.5" width="9" height=".8" fill="#4a4a4a" opacity="0.7"/><rect x="100.7" y="82.4" width="12.7" height=".8" fill="#4a4a4a" opacity="0.8"/><rect x="100.7" y="84.5" width="13" height=".8" fill="#4a4a4a" opacity="0.5"/><rect x="100.7" y="86.4" width="8.4" height=".8" fill="#4a4a4a" opacity="0.8"/><rect x="100.7" y="88.2" width="12.3" height=".8" fill="#4a4a4a" opacity="0.5"/><rect x="100.7" y="89.9" width="13.2" height=".8" fill="#4a4a4a" opacity="0.6"/><rect x="100.7" y="92" width="11.7" height=".8" fill="#4a4a4a" opacity="0.7"/><rect x="100.7" y="93.8" width="9.3" height=".8" fill="#4a4a4a" opacity="0.6"/><rect x="99.4" y="99.6" width="18" height="24.5" fill="#d2d1cd"/><rect x="101.4" y="102.6" width="13.3" height=".8" fill="#4a4a4a" opacity="0.8"/><rect x="101.4" y="104.4" width="8.9" height=".8" fill="#4a4a4a" opacity="0.5"/><rect x="101.4" y="106.3" width="12.4" height=".8" fill="#4a4a4a" opacity="0.6"/><rect x="101.4" y="108" width="10.7" height=".8" fill="#4a4a4a" opacity="0.7"/><rect x="101.4" y="110" width="12.6" height=".8" fill="#4a4a4a" opacity="0.8"/><rect x="101.4" y="112" width="9.1" height=".8" fill="#4a4a4a" opacity="0.8"/><rect x="101.4" y="113.8" width="11.6" height=".8" fill="#4a4a4a" opacity="0.6"/><rect x="101.4" y="115.8" width="9.5" height=".8" fill="#4a4a4a" opacity="0.5"/><rect x="101.4" y="117.6" width="9.3" height=".8" fill="#4a4a4a" opacity="0.8"/><rect x="101.4" y="119.5" width="10.2" height=".8" fill="#4a4a4a" opacity="0.6"/><rect x="101.4" y="121.7" width="11.2" height=".8" fill="#4a4a4a" opacity="0.5"/><rect x="120.1" y="22" width="19" height="19.2" fill="#cbc9c3"/><rect x="122.1" y="25" width="10.4" height=".8" fill="#4a4a4a" opacity="0.6"/><rect x="122.1" y="26.8" width="14.3" height=".8" fill="#4a4a4a" opacity="0.5"/><rect x="122.1" y="28.4" width="12.6" height=".8" fill="#4a4a4a" opacity="0.8"/><rect x="122.1" y="30.1" width="9.5" height=".8" fill="#4a4a4a" opacity="0.7"/><rect x="122.1" y="31.9" width="12.6" height=".8" fill="#4a4a4a" opacity="0.8"/><rect x="122.1" y="33.8" width="9" height=".8" fill="#4a4a4a" opacity="0.7"/><rect x="122.1" y="35.9" width="11.1" height=".8" fill="#4a4a4a" opacity="0.5"/><rect x="122.1" y="37.7" width="9.3" height=".8" fill="#4a4a4a" opacity="0.8"/><rect x="120" y="44.5" width="19" height="29" fill="#dad9d5"/><rect x="122" y="47.5" width="11.5" height=".8" fill="#4a4a4a" opacity="0.6"/><rect x="122" y="49.5" width="9.5" height=".8" fill="#4a4a4a" opacity="0.5"/><rect x="122" y="51.4" width="11.9" height=".8" fill="#4a4a4a" opacity="0.6"/><rect x="122" y="53.5" width="13" height=".8" fill="#4a4a4a" opacity="0.5"/><rect x="122" y="55.4" width="12.9" height=".8" fill="#4a4a4a" opacity="0.6"/><rect x="122" y="57.2" width="14.9" height=".8" fill="#4a4a4a" opacity="0.7"/><rect x="122" y="59" width="9.3" height=".8" fill="#4a4a4a" opacity="0.7"/><rect x="122" y="61.1" width="11.5" height=".8" fill="#4a4a4a" opacity="0.5"/><rect x="122" y="63.2" width="13.8" height=".8" fill="#4a4a4a" opacity="0.7"/><rect x="122" y="65" width="11.4" height=".8" fill="#4a4a4a" opacity="0.8"/><rect x="122" y="66.9" width="9.9" height=".8" fill="#4a4a4a" opacity="0.5"/><rect x="122" y="68.6" width="12.5" height=".8" fill="#4a4a4a" opacity="0.6"/><rect x="122" y="70.6" width="9.8" height=".8" fill="#4a4a4a" opacity="0.5"/><rect x="119.4" y="77" width="19" height="22.8" fill="#d8d6d0"/><rect x="121.4" y="80" width="11.2" height=".8" fill="#4a4a4a" opacity="0.7"/><rect x="121.4" y="81.7" width="10.7" height=".8" fill="#4a4a4a" opacity="0.7"/><rect x="121.4" y="83.9" width="9.7" height=".8" fill="#4a4a4a" opacity="0.6"/><rect x="121.4" y="85.9" width="14.8" height=".8" fill="#4a4a4a" opacity="0.5"/><rect x="121.4" y="87.6" width="14.7" height=".8" fill="#4a4a4a" opacity="0.8"/><rect x="121.4" y="89.5" width="9.3" height=".8" fill="#4a4a4a" opacity="0.8"/><rect x="121.4" y="91.3" width="14.4" height=".8" fill="#4a4a4a" opacity="0.7"/><rect x="121.4" y="93.4" width="10" height=".8" fill="#4a4a4a" opacity="0.8"/><rect x="121.4" y="95.2" width="11.4" height=".8" fill="#4a4a4a" opacity="0.8"/><rect x="121.4" y="97.3" width="10.1" height=".8" fill="#4a4a4a" opacity="0.5"/><rect x="117.9" y="102.6" width="19" height="22.4" fill="#dad9d5"/><rect x="119.9" y="105.6" width="14.8" height=".8" fill="#4a4a4a" opacity="0.8"/><rect x="119.9" y="107.3" width="14.3" height=".8" fill="#4a4a4a" opacity="0.8"/><rect x="119.9" y="109.3" width="13" height=".8" fill="#4a4a4a" opacity="0.6"/><rect x="119.9" y="111.1" width="11.7" height=".8" fill="#4a4a4a" opacity="0.8"/><rect x="119.9" y="113.2" width="12.9" height=".8" fill="#4a4a4a" opacity="0.6"/><rect x="119.9" y="114.9" width="11.3" height=".8" fill="#4a4a4a" opacity="0.6"/><rect x="119.9" y="116.8" width="10.1" height=".8" fill="#4a4a4a" opacity="0.5"/><rect x="119.9" y="119" width="11.8" height=".8" fill="#4a4a4a" opacity="0.6"/><rect x="119.9" y="121" width="13.9" height=".8" fill="#4a4a4a" opacity="0.8"/><rect x="140" y="0" width="2" height="125" fill="#aaa" opacity=".6"/></svg><svg class="a" style="left:480px;top:271px" width="68" height="126" viewBox="0 0 68 126"><rect width="68" height="126" fill="#aaa398"/><rect width="68" height="4" fill="#cfc8be"/><rect x="1" y="6.4" width="8.6" height="25.7" fill="#cfc9d1"/><rect x="2.5" y="9.4" width="4.1" height=".7" fill="#4a4a4a" opacity="0.6"/><rect x="2.5" y="11.4" width="5" height=".7" fill="#4a4a4a" opacity="0.5"/><rect x="2.5" y="13.6" width="3.3" height=".7" fill="#4a4a4a" opacity="0.5"/><rect x="2.5" y="15.5" width="4.3" height=".7" fill="#4a4a4a" opacity="0.7"/><rect x="2.5" y="17.7" width="4.5" height=".7" fill="#4a4a4a" opacity="0.5"/><rect x="2.5" y="19.9" width="4.9" height=".7" fill="#4a4a4a" opacity="0.6"/><rect x="2.5" y="22.1" width="5.1" height=".7" fill="#4a4a4a" opacity="0.3"/><rect x="2.5" y="23.9" width="5.2" height=".7" fill="#4a4a4a" opacity="0.5"/><rect x="2.5" y="26.3" width="3.7" height=".7" fill="#4a4a4a" opacity="0.5"/><rect x="2.5" y="28.2" width="3.4" height=".7" fill="#4a4a4a" opacity="0.4"/><rect x="11.3" y="7" width="9.3" height="24" fill="#c8c2bd"/><rect x="12.8" y="10" width="5.8" height=".7" fill="#4a4a4a" opacity="0.6"/><rect x="12.8" y="12" width="3.9" height=".7" fill="#4a4a4a" opacity="0.4"/><rect x="12.8" y="13.9" width="5.6" height=".7" fill="#4a4a4a" opacity="0.5"/><rect x="12.8" y="16.3" width="4.4" height=".7" fill="#4a4a4a" opacity="0.7"/><rect x="12.8" y="18.6" width="3.1" height=".7" fill="#4a4a4a" opacity="0.4"/><rect x="12.8" y="21.1" width="4.6" height=".7" fill="#4a4a4a" opacity="0.7"/><rect x="12.8" y="23.2" width="3.4" height=".7" fill="#4a4a4a" opacity="0.6"/><rect x="12.8" y="25.5" width="4" height=".7" fill="#4a4a4a" opacity="0.3"/><rect x="12.8" y="27.5" width="6.2" height=".7" fill="#4a4a4a" opacity="0.6"/><rect x="22.5" y="4.9" width="7.4" height="28.7" fill="#d2cec5"/><rect x="24" y="7.9" width="3.7" height=".7" fill="#4a4a4a" opacity="0.4"/><rect x="24" y="10" width="4.3" height=".7" fill="#4a4a4a" opacity="0.6"/><rect x="24" y="12.1" width="3" height=".7" fill="#4a4a4a" opacity="0.5"/><rect x="24" y="14.6" width="2.2" height=".7" fill="#4a4a4a" opacity="0.6"/><rect x="24" y="17.1" width="3.5" height=".7" fill="#4a4a4a" opacity="0.7"/><rect x="24" y="18.9" width="2.6" height=".7" fill="#4a4a4a" opacity="0.7"/><rect x="24" y="21.1" width="3.4" height=".7" fill="#4a4a4a" opacity="0.3"/><rect x="24" y="23" width="3.1" height=".7" fill="#4a4a4a" opacity="0.3"/><rect x="24" y="25.2" width="4" height=".7" fill="#4a4a4a" opacity="0.5"/><rect x="24" y="27.1" width="2.6" height=".7" fill="#4a4a4a" opacity="0.6"/><rect x="24" y="28.9" width="3" height=".7" fill="#4a4a4a" opacity="0.5"/><rect x="32.6" y="6.5" width="9.9" height="28.6" fill="#cbc7bf"/><rect x="34.1" y="9.5" width="4" height=".7" fill="#4a4a4a" opacity="0.7"/><rect x="34.1" y="11.8" width="4.3" height=".7" fill="#4a4a4a" opacity="0.4"/><rect x="34.1" y="14.2" width="6.7" height=".7" fill="#4a4a4a" opacity="0.4"/><rect x="34.1" y="16.6" width="6.5" height=".7" fill="#4a4a4a" opacity="0.5"/><rect x="34.1" y="18.7" width="3.8" height=".7" fill="#4a4a4a" opacity="0.3"/><rect x="34.1" y="21.2" width="4.3" height=".7" fill="#4a4a4a" opacity="0.6"/><rect x="34.1" y="23.2" width="6.3" height=".7" fill="#4a4a4a" opacity="0.5"/><rect x="34.1" y="25.2" width="4.1" height=".7" fill="#4a4a4a" opacity="0.6"/><rect x="34.1" y="27" width="4.2" height=".7" fill="#4a4a4a" opacity="0.5"/><rect x="34.1" y="29.4" width="5.6" height=".7" fill="#4a4a4a" opacity="0.4"/><rect x="34.1" y="31.9" width="4.2" height=".7" fill="#4a4a4a" opacity="0.3"/><rect x="44.9" y="4.1" width="7.2" height="29.2" fill="#cbc7bf"/><rect x="46.4" y="7.1" width="4.2" height=".7" fill="#4a4a4a" opacity="0.3"/><rect x="46.4" y="9" width="3.1" height=".7" fill="#4a4a4a" opacity="0.4"/><rect x="46.4" y="11.3" width="3.2" height=".7" fill="#4a4a4a" opacity="0.7"/><rect x="46.4" y="13.6" width="4.1" height=".7" fill="#4a4a4a" opacity="0.5"/><rect x="46.4" y="15.6" width="2.8" height=".7" fill="#4a4a4a" opacity="0.3"/><rect x="46.4" y="17.8" width="2.3" height=".7" fill="#4a4a4a" opacity="0.3"/><rect x="46.4" y="19.8" width="2.4" height=".7" fill="#4a4a4a" opacity="0.3"/><rect x="46.4" y="22" width="2.9" height=".7" fill="#4a4a4a" opacity="0.3"/><rect x="46.4" y="24.4" width="3.7" height=".7" fill="#4a4a4a" opacity="0.4"/><rect x="46.4" y="26.9" width="2.8" height=".7" fill="#4a4a4a" opacity="0.3"/><rect x="46.4" y="29" width="2.3" height=".7" fill="#4a4a4a" opacity="0.6"/><rect x="53.6" y="5.5" width="8.7" height="28.6" fill="#d2cec5"/><rect x="55.1" y="8.5" width="4.5" height=".7" fill="#4a4a4a" opacity="0.5"/><rect x="55.1" y="10.4" width="4.7" height=".7" fill="#4a4a4a" opacity="0.7"/><rect x="55.1" y="12.8" width="5" height=".7" fill="#4a4a4a" opacity="0.5"/><rect x="55.1" y="15.1" width="4.5" height=".7" fill="#4a4a4a" opacity="0.5"/><rect x="55.1" y="17.5" width="3.1" height=".7" fill="#4a4a4a" opacity="0.6"/><rect x="55.1" y="19.3" width="4.6" height=".7" fill="#4a4a4a" opacity="0.5"/><rect x="55.1" y="21.3" width="4.9" height=".7" fill="#4a4a4a" opacity="0.5"/><rect x="55.1" y="23.5" width="5.5" height=".7" fill="#4a4a4a" opacity="0.4"/><rect x="55.1" y="25.3" width="3.7" height=".7" fill="#4a4a4a" opacity="0.6"/><rect x="55.1" y="27.2" width="3.4" height=".7" fill="#4a4a4a" opacity="0.7"/><rect x="55.1" y="29.5" width="4.1" height=".7" fill="#4a4a4a" opacity="0.7"/><rect x="1" y="43.2" width="7.7" height="29" fill="#c8c2bd"/><rect x="2.5" y="46.2" width="2.8" height=".7" fill="#4a4a4a" opacity="0.4"/><rect x="2.5" y="48.2" width="4.5" height=".7" fill="#4a4a4a" opacity="0.4"/><rect x="2.5" y="50.1" width="3.2" height=".7" fill="#4a4a4a" opacity="0.7"/><rect x="2.5" y="51.9" width="2.5" height=".7" fill="#4a4a4a" opacity="0.7"/><rect x="2.5" y="54.3" width="2.6" height=".7" fill="#4a4a4a" opacity="0.5"/><rect x="2.5" y="56.7" width="4.3" height=".7" fill="#4a4a4a" opacity="0.5"/><rect x="2.5" y="58.9" width="3.9" height=".7" fill="#4a4a4a" opacity="0.6"/><rect x="2.5" y="61.3" width="3.8" height=".7" fill="#4a4a4a" opacity="0.4"/><rect x="2.5" y="63.6" width="3" height=".7" fill="#4a4a4a" opacity="0.5"/><rect x="2.5" y="65.9" width="3" height=".7" fill="#4a4a4a" opacity="0.4"/><rect x="2.5" y="68.2" width="3.7" height=".7" fill="#4a4a4a" opacity="0.6"/><rect x="10.6" y="40.9" width="9.7" height="34.3" fill="#d9d5cd"/><rect x="12.1" y="43.9" width="3.5" height=".7" fill="#4a4a4a" opacity="0.6"/><rect x="12.1" y="46.1" width="5.5" height=".7" fill="#4a4a4a" opacity="0.6"/><rect x="12.1" y="48.4" width="6.6" height=".7" fill="#4a4a4a" opacity="0.6"/><rect x="12.1" y="50.4" width="4.9" height=".7" fill="#4a4a4a" opacity="0.4"/><rect x="12.1" y="52.2" width="4.9" height=".7" fill="#4a4a4a" opacity="0.6"/><rect x="12.1" y="54.1" width="4.3" height=".7" fill="#4a4a4a" opacity="0.4"/><rect x="12.1" y="56.4" width="5.1" height=".7" fill="#4a4a4a" opacity="0.5"/><rect x="12.1" y="58.7" width="4.7" height=".7" fill="#4a4a4a" opacity="0.6"/><rect x="12.1" y="61.2" width="3.6" height=".7" fill="#4a4a4a" opacity="0.7"/><rect x="12.1" y="63.5" width="3.8" height=".7" fill="#4a4a4a" opacity="0.5"/><rect x="12.1" y="65.7" width="6.4" height=".7" fill="#4a4a4a" opacity="0.5"/><rect x="12.1" y="67.9" width="6.3" height=".7" fill="#4a4a4a" opacity="0.6"/><rect x="12.1" y="70.4" width="4.9" height=".7" fill="#4a4a4a" opacity="0.6"/><rect x="23.2" y="40.9" width="9.9" height="30.6" fill="#d2cec5"/><rect x="24.7" y="43.9" width="6.8" height=".7" fill="#4a4a4a" opacity="0.7"/><rect x="24.7" y="46" width="6.1" height=".7" fill="#4a4a4a" opacity="0.4"/><rect x="24.7" y="48.5" width="6.4" height=".7" fill="#4a4a4a" opacity="0.4"/><rect x="24.7" y="50.3" width="4.9" height=".7" fill="#4a4a4a" opacity="0.5"/><rect x="24.7" y="52.7" width="5.1" height=".7" fill="#4a4a4a" opacity="0.3"/><rect x="24.7" y="55" width="3.7" height=".7" fill="#4a4a4a" opacity="0.6"/><rect x="24.7" y="56.9" width="4.6" height=".7" fill="#4a4a4a" opacity="0.6"/><rect x="24.7" y="58.8" width="3.9" height=".7" fill="#4a4a4a" opacity="0.5"/><rect x="24.7" y="61.2" width="6.3" height=".7" fill="#4a4a4a" opacity="0.6"/><rect x="24.7" y="63.6" width="5.1" height=".7" fill="#4a4a4a" opacity="0.7"/><rect x="24.7" y="65.5" width="4.2" height=".7" fill="#4a4a4a" opacity="0.5"/><rect x="24.7" y="67.5" width="5.9" height=".7" fill="#4a4a4a" opacity="0.6"/><rect x="36.3" y="42.7" width="9" height="28.5" fill="#d9d5cd"/><rect x="37.8" y="45.7" width="5.6" height=".7" fill="#4a4a4a" opacity="0.5"/><rect x="37.8" y="47.7" width="3.4" height=".7" fill="#4a4a4a" opacity="0.5"/><rect x="37.8" y="49.7" width="4.5" height=".7" fill="#4a4a4a" opacity="0.5"/><rect x="37.8" y="51.6" width="3" height=".7" fill="#4a4a4a" opacity="0.5"/><rect x="37.8" y="53.7" width="3.1" height=".7" fill="#4a4a4a" opacity="0.7"/><rect x="37.8" y="55.9" width="5.9" height=".7" fill="#4a4a4a" opacity="0.3"/><rect x="37.8" y="57.8" width="3.5" height=".7" fill="#4a4a4a" opacity="0.7"/><rect x="37.8" y="59.9" width="5.7" height=".7" fill="#4a4a4a" opacity="0.6"/><rect x="37.8" y="62" width="3.7" height=".7" fill="#4a4a4a" opacity="0.5"/><rect x="37.8" y="64" width="5.7" height=".7" fill="#4a4a4a" opacity="0.7"/><rect x="37.8" y="66.5" width="4.5" height=".7" fill="#4a4a4a" opacity="0.3"/><rect x="46.8" y="40.1" width="7.9" height="35.1" fill="#d2cec5"/><rect x="48.3" y="43.1" width="2.5" height=".7" fill="#4a4a4a" opacity="0.4"/><rect x="48.3" y="45.4" width="3.1" height=".7" fill="#4a4a4a" opacity="0.5"/><rect x="48.3" y="47.6" width="3.9" height=".7" fill="#4a4a4a" opacity="0.6"/><rect x="48.3" y="49.8" width="4.2" height=".7" fill="#4a4a4a" opacity="0.6"/><rect x="48.3" y="52.3" width="2.5" height=".7" fill="#4a4a4a" opacity="0.6"/><rect x="48.3" y="54.6" width="4" height=".7" fill="#4a4a4a" opacity="0.5"/><rect x="48.3" y="57" width="3.8" height=".7" fill="#4a4a4a" opacity="0.4"/><rect x="48.3" y="59" width="3.8" height=".7" fill="#4a4a4a" opacity="0.5"/><rect x="48.3" y="60.9" width="4.7" height=".7" fill="#4a4a4a" opacity="0.6"/><rect x="48.3" y="62.9" width="2.9" height=".7" fill="#4a4a4a" opacity="0.5"/><rect x="48.3" y="65.3" width="2.9" height=".7" fill="#4a4a4a" opacity="0.6"/><rect x="48.3" y="67.3" width="2.7" height=".7" fill="#4a4a4a" opacity="0.7"/><rect x="48.3" y="69.2" width="2.7" height=".7" fill="#4a4a4a" opacity="0.5"/><rect x="48.3" y="71.3" width="4.8" height=".7" fill="#4a4a4a" opacity="0.5"/><rect x="56.6" y="40.4" width="9.2" height="32.8" fill="#d2cec5"/><rect x="58.1" y="43.4" width="4.2" height=".7" fill="#4a4a4a" opacity="0.6"/><rect x="58.1" y="45.4" width="5.3" height=".7" fill="#4a4a4a" opacity="0.6"/><rect x="58.1" y="47.5" width="6.2" height=".7" fill="#4a4a4a" opacity="0.6"/><rect x="58.1" y="49.8" width="4.6" height=".7" fill="#4a4a4a" opacity="0.3"/><rect x="58.1" y="52.2" width="5" height=".7" fill="#4a4a4a" opacity="0.7"/><rect x="58.1" y="54.3" width="3.7" height=".7" fill="#4a4a4a" opacity="0.3"/><rect x="58.1" y="56.2" width="3.6" height=".7" fill="#4a4a4a" opacity="0.4"/><rect x="58.1" y="58.5" width="4.9" height=".7" fill="#4a4a4a" opacity="0.4"/><rect x="58.1" y="60.8" width="3.3" height=".7" fill="#4a4a4a" opacity="0.3"/><rect x="58.1" y="62.9" width="4.4" height=".7" fill="#4a4a4a" opacity="0.4"/><rect x="58.1" y="64.8" width="4.3" height=".7" fill="#4a4a4a" opacity="0.6"/><rect x="58.1" y="66.6" width="3.7" height=".7" fill="#4a4a4a" opacity="0.5"/><rect x="58.1" y="68.7" width="4.2" height=".7" fill="#4a4a4a" opacity="0.7"/><rect x="1" y="85.6" width="9.8" height="29.4" fill="#d9d5cd"/><rect x="2.5" y="88.6" width="5.8" height=".7" fill="#4a4a4a" opacity="0.6"/><rect x="2.5" y="90.8" width="4.8" height=".7" fill="#4a4a4a" opacity="0.5"/><rect x="2.5" y="93" width="6.7" height=".7" fill="#4a4a4a" opacity="0.6"/><rect x="2.5" y="94.9" width="6.5" height=".7" fill="#4a4a4a" opacity="0.6"/><rect x="2.5" y="97.3" width="6.1" height=".7" fill="#4a4a4a" opacity="0.5"/><rect x="2.5" y="99.7" width="6.4" height=".7" fill="#4a4a4a" opacity="0.6"/><rect x="2.5" y="102.1" width="6" height=".7" fill="#4a4a4a" opacity="0.5"/><rect x="2.5" y="104.4" width="3.6" height=".7" fill="#4a4a4a" opacity="0.4"/><rect x="2.5" y="106.5" width="3.4" height=".7" fill="#4a4a4a" opacity="0.4"/><rect x="2.5" y="108.7" width="5.5" height=".7" fill="#4a4a4a" opacity="0.4"/><rect x="2.5" y="111.2" width="5.6" height=".7" fill="#4a4a4a" opacity="0.4"/><rect x="13.4" y="84.1" width="8.9" height="32.5" fill="#c8c2bd"/><rect x="14.9" y="87.1" width="3.6" height=".7" fill="#4a4a4a" opacity="0.3"/><rect x="14.9" y="89.1" width="4.6" height=".7" fill="#4a4a4a" opacity="0.3"/><rect x="14.9" y="91" width="3.6" height=".7" fill="#4a4a4a" opacity="0.5"/><rect x="14.9" y="93.2" width="5.2" height=".7" fill="#4a4a4a" opacity="0.6"/><rect x="14.9" y="95" width="3.7" height=".7" fill="#4a4a4a" opacity="0.4"/><rect x="14.9" y="97" width="4.5" height=".7" fill="#4a4a4a" opacity="0.5"/><rect x="14.9" y="99.2" width="5.4" height=".7" fill="#4a4a4a" opacity="0.3"/><rect x="14.9" y="101.3" width="4.8" height=".7" fill="#4a4a4a" opacity="0.5"/><rect x="14.9" y="103.6" width="5.7" height=".7" fill="#4a4a4a" opacity="0.5"/><rect x="14.9" y="106" width="4.1" height=".7" fill="#4a4a4a" opacity="0.7"/><rect x="14.9" y="108.4" width="4.5" height=".7" fill="#4a4a4a" opacity="0.5"/><rect x="14.9" y="110.5" width="4.4" height=".7" fill="#4a4a4a" opacity="0.4"/><rect x="14.9" y="112.6" width="3.8" height=".7" fill="#4a4a4a" opacity="0.5"/><rect x="24.3" y="82.1" width="10.3" height="33" fill="#d9d5cd"/><rect x="25.8" y="85.1" width="5.8" height=".7" fill="#4a4a4a" opacity="0.6"/><rect x="25.8" y="87.2" width="6.1" height=".7" fill="#4a4a4a" opacity="0.3"/><rect x="25.8" y="89.2" width="5.1" height=".7" fill="#4a4a4a" opacity="0.5"/><rect x="25.8" y="91.5" width="4.8" height=".7" fill="#4a4a4a" opacity="0.6"/><rect x="25.8" y="93.5" width="6.2" height=".7" fill="#4a4a4a" opacity="0.4"/><rect x="25.8" y="95.8" width="3.8" height=".7" fill="#4a4a4a" opacity="0.3"/><rect x="25.8" y="98.2" width="6.9" height=".7" fill="#4a4a4a" opacity="0.4"/><rect x="25.8" y="100.6" width="4.5" height=".7" fill="#4a4a4a" opacity="0.6"/><rect x="25.8" y="102.5" width="5.1" height=".7" fill="#4a4a4a" opacity="0.3"/><rect x="25.8" y="104.9" width="4.9" height=".7" fill="#4a4a4a" opacity="0.4"/><rect x="25.8" y="106.9" width="4.1" height=".7" fill="#4a4a4a" opacity="0.5"/><rect x="25.8" y="109.2" width="5.9" height=".7" fill="#4a4a4a" opacity="0.6"/><rect x="25.8" y="111.2" width="6.3" height=".7" fill="#4a4a4a" opacity="0.6"/><rect x="36.7" y="82.5" width="7.5" height="32.1" fill="#c8c2bd"/><rect x="38.2" y="85.5" width="4" height=".7" fill="#4a4a4a" opacity="0.5"/><rect x="38.2" y="87.5" width="2.8" height=".7" fill="#4a4a4a" opacity="0.6"/><rect x="38.2" y="89.7" width="3.5" height=".7" fill="#4a4a4a" opacity="0.6"/><rect x="38.2" y="92" width="2.6" height=".7" fill="#4a4a4a" opacity="0.4"/><rect x="38.2" y="94.5" width="4.3" height=".7" fill="#4a4a4a" opacity="0.7"/><rect x="38.2" y="96.3" width="2.4" height=".7" fill="#4a4a4a" opacity="0.4"/><rect x="38.2" y="98.4" width="3.6" height=".7" fill="#4a4a4a" opacity="0.3"/><rect x="38.2" y="100.6" width="2.4" height=".7" fill="#4a4a4a" opacity="0.3"/><rect x="38.2" y="102.9" width="3.5" height=".7" fill="#4a4a4a" opacity="0.6"/><rect x="38.2" y="105" width="3.3" height=".7" fill="#4a4a4a" opacity="0.4"/><rect x="38.2" y="107" width="3.9" height=".7" fill="#4a4a4a" opacity="0.6"/><rect x="38.2" y="108.8" width="2.5" height=".7" fill="#4a4a4a" opacity="0.6"/><rect x="38.2" y="111.1" width="3.9" height=".7" fill="#4a4a4a" opacity="0.4"/><rect x="46.1" y="82.6" width="9.8" height="32.2" fill="#d9d5cd"/><rect x="47.6" y="85.6" width="5.5" height=".7" fill="#4a4a4a" opacity="0.4"/><rect x="47.6" y="87.9" width="6.2" height=".7" fill="#4a4a4a" opacity="0.4"/><rect x="47.6" y="90.2" width="5.4" height=".7" fill="#4a4a4a" opacity="0.5"/><rect x="47.6" y="92.2" width="5.3" height=".7" fill="#4a4a4a" opacity="0.5"/><rect x="47.6" y="94.4" width="6.2" height=".7" fill="#4a4a4a" opacity="0.5"/><rect x="47.6" y="96.8" width="3.4" height=".7" fill="#4a4a4a" opacity="0.4"/><rect x="47.6" y="99.2" width="5.5" height=".7" fill="#4a4a4a" opacity="0.6"/><rect x="47.6" y="101.4" width="6" height=".7" fill="#4a4a4a" opacity="0.4"/><rect x="47.6" y="103.8" width="4.2" height=".7" fill="#4a4a4a" opacity="0.6"/><rect x="47.6" y="105.8" width="6.5" height=".7" fill="#4a4a4a" opacity="0.4"/><rect x="47.6" y="107.9" width="5.4" height=".7" fill="#4a4a4a" opacity="0.7"/><rect x="47.6" y="110.2" width="4.4" height=".7" fill="#4a4a4a" opacity="0.5"/><rect x="58.4" y="83" width="7.8" height="34.2" fill="#cfc9d1"/><rect x="59.9" y="86" width="3.3" height=".7" fill="#4a4a4a" opacity="0.4"/><rect x="59.9" y="88.1" width="3.3" height=".7" fill="#4a4a4a" opacity="0.4"/><rect x="59.9" y="90.3" width="4.3" height=".7" fill="#4a4a4a" opacity="0.5"/><rect x="59.9" y="92.7" width="3.7" height=".7" fill="#4a4a4a" opacity="0.4"/><rect x="59.9" y="95" width="4.5" height=".7" fill="#4a4a4a" opacity="0.4"/><rect x="59.9" y="96.8" width="3.6" height=".7" fill="#4a4a4a" opacity="0.5"/><rect x="59.9" y="99" width="4.7" height=".7" fill="#4a4a4a" opacity="0.6"/><rect x="59.9" y="101.4" width="2.5" height=".7" fill="#4a4a4a" opacity="0.5"/><rect x="59.9" y="103.7" width="2.6" height=".7" fill="#4a4a4a" opacity="0.3"/><rect x="59.9" y="106" width="4.5" height=".7" fill="#4a4a4a" opacity="0.3"/><rect x="59.9" y="108.3" width="2.7" height=".7" fill="#4a4a4a" opacity="0.6"/><rect x="59.9" y="110.5" width="3" height=".7" fill="#4a4a4a" opacity="0.4"/><rect x="59.9" y="112.9" width="3.6" height=".7" fill="#4a4a4a" opacity="0.6"/></svg>
<div class="a" style="left:333px;top:396px;width:213px;height:22px;background:#f0e6e6"></div>
<div class="a cap" style="left:333px;top:396px;width:213px">线下公示栏展承诺</div>
<!-- image 2 -->
<div class="a" style="left:690px;top:273px;width:116px;height:124px;background:rgba(60,60,60,.4);filter:blur(4px)"></div>
<div class="a" style="left:575px;top:268px;width:221px;height:159px;background:#fff;border:2px solid #b00c18;box-shadow:0 1px 1px rgba(90,0,0,.5)"></div>
<svg class="a" style="left:577px;top:271px" width="104" height="125" viewBox="0 0 104 125"><rect width="104" height="125" fill="#fff"/><rect x="14" y="3" width="86" height=".8" fill="#555" opacity="0.5"/><rect x="14" y="4.7" width="86" height=".8" fill="#555" opacity="0.6"/><rect x="14" y="6.4" width="86" height=".8" fill="#555" opacity="0.6"/><rect x="14" y="8.1" width="86" height=".8" fill="#555" opacity="0.7"/><rect x="14" y="9.8" width="86" height=".8" fill="#555" opacity="0.7"/><rect x="14" y="11.5" width="86" height=".8" fill="#555" opacity="0.5"/><rect x="14" y="13.2" width="26.4" height=".8" fill="#555" opacity="0.7"/><rect x="78" y="20" width="12" height=".8" fill="#777" opacity=".6"/><rect x="12" y="30" width="92" height=".5" fill="#ddd"/><rect x="90" y="33" width="4" height=".8" fill="#999"/><rect x="97" y="33" width="3" height=".8" fill="#999"/><rect x="0" y="37.5" width="104" height=".6" fill="#e4e4e4"/><rect x="2" y="41" width="8" height="9" fill="#d4e8f6"/><path d="M6 43a1.5 1.5 0 1 0 .01 0M3.5 49c0-3 5-3 5 0" fill="none" stroke="#8cc0e4" stroke-width=".7"/><rect x="13" y="44" width="10" height=".8" fill="#444"/><rect x="26" y="44" width="24" height=".8" fill="#aaa"/><rect x="100" y="42" width="2" height="1.5" fill="#f0a060"/><rect x="14" y="50" width="88" height=".8" fill="#555" opacity="0.5"/><rect x="14" y="51.7" width="88" height=".8" fill="#555" opacity="0.5"/><rect x="14" y="53.4" width="88" height=".8" fill="#555" opacity="0.8"/><rect x="14" y="55.1" width="47.1" height=".8" fill="#555" opacity="0.7"/><rect x="12" y="62" width="92" height=".5" fill="#ddd"/><rect x="90" y="65" width="4" height=".8" fill="#999"/><rect x="97" y="65" width="3" height=".8" fill="#999"/><rect x="0" y="69.5" width="104" height=".6" fill="#e4e4e4"/><rect x="2" y="72" width="8" height="9" fill="#8a6a4a"/><rect x="4" y="73" width="4" height="5" fill="#d8c0a0"/><rect x="13" y="75" width="10" height=".8" fill="#444"/><rect x="26" y="75" width="24" height=".8" fill="#aaa"/><rect x="100" y="73" width="2" height="1.5" fill="#f0a060"/><rect x="18" y="81" width="50" height=".9" fill="#555" opacity=".7"/><rect x="18" y="87.5" width="72" height=".9" fill="#555" opacity=".7"/><rect x="18" y="94" width="66" height=".9" fill="#555" opacity=".7"/><rect x="18" y="100.5" width="32" height=".9" fill="#555" opacity=".7"/><rect x="18" y="107" width="35" height=".9" fill="#555" opacity=".7"/><rect x="18" y="113.5" width="22" height=".9" fill="#555" opacity=".7"/><rect x="18" y="120" width="14" height=".9" fill="#555" opacity=".7"/><rect x="0" y="123" width="104" height="2" fill="#5a86b4"/></svg><div class="a" style="left:681px;top:271px;width:6px;height:125px;background:linear-gradient(90deg,#9a9a9a,#e8e8e8)"></div><svg class="a" style="left:687px;top:271px" width="108" height="125" viewBox="0 0 108 125"><rect width="108" height="125" fill="#fff"/><rect x="3" y="4" width="8" height="9" fill="#d4e8f6"/><path d="M7 6a1.5 1.5 0 1 0 .01 0M4.5 12c0-3 5-3 5 0" fill="none" stroke="#8cc0e4" stroke-width=".7"/><rect x="14" y="7" width="8" height=".8" fill="#444"/><rect x="25" y="7" width="24" height=".8" fill="#aaa"/><rect x="103" y="4" width="2.5" height="1.5" fill="#f0a060"/><rect x="15" y="13" width="88" height=".8" fill="#555" opacity="0.7"/><rect x="15" y="14.7" width="88" height=".8" fill="#555" opacity="0.7"/><rect x="15" y="16.4" width="88" height=".8" fill="#555" opacity="0.7"/><rect x="15" y="18.1" width="67.9" height=".8" fill="#555" opacity="0.7"/><rect x="14" y="24" width="92" height=".5" fill="#ddd"/><rect x="94" y="28" width="4" height=".8" fill="#999"/><rect x="101" y="28" width="3" height=".8" fill="#999"/><rect x="0" y="33" width="108" height=".6" fill="#e4e4e4"/><rect x="3" y="37" width="7" height="9" fill="#3a4a3a"/><rect x="4.5" y="38.5" width="4" height="4" fill="#e0b090"/><rect x="4" y="42.5" width="5" height="3.5" fill="#dfe8f4"/><rect x="14" y="40" width="8" height=".8" fill="#444"/><rect x="25" y="40" width="24" height=".8" fill="#aaa"/><rect x="103" y="37" width="2.5" height="1.5" fill="#f0a060"/><rect x="15" y="46" width="88" height=".8" fill="#555" opacity="0.8"/><rect x="15" y="47.7" width="88" height=".8" fill="#555" opacity="0.5"/><rect x="15" y="49.4" width="88" height=".8" fill="#555" opacity="0.6"/><rect x="15" y="51.1" width="67.9" height=".8" fill="#555" opacity="0.7"/><rect x="14" y="57" width="92" height=".5" fill="#ddd"/><rect x="94" y="61" width="4" height=".8" fill="#999"/><rect x="101" y="61" width="3" height=".8" fill="#999"/><rect x="0" y="66" width="108" height=".6" fill="#e4e4e4"/><rect x="3" y="70" width="7" height="9" fill="#3a4a3a"/><rect x="4.5" y="71.5" width="4" height="4" fill="#e0b090"/><rect x="4" y="75.5" width="5" height="3.5" fill="#dfe8f4"/><rect x="14" y="73" width="8" height=".8" fill="#444"/><rect x="25" y="73" width="24" height=".8" fill="#aaa"/><rect x="103" y="70" width="2.5" height="1.5" fill="#f0a060"/><rect x="19" y="80" width="74" height="45" fill="#2a0f16"/><path d="M25 95l61-1 2 31H24z" fill="#e9e7e4"/><rect x="47" y="99" width="10" height="3" fill="#777" opacity=".6"/><rect x="31" y="109" width="50" height="2" fill="#666" opacity=".55"/><rect x="31" y="114.5" width="52" height="2" fill="#666" opacity=".55"/><rect x="31" y="120" width="54" height="2" fill="#666" opacity=".55"/></svg>
<div class="a" style="left:578px;top:396px;width:234px;height:22px;background:#f0e6e6"></div>
<div class="a" style="left:794px;top:396px;width:2px;height:22px;background:#b00c18"></div>
<div class="a cap" style="left:578px;top:396px;width:235px">线上课群分享承诺</div>

</div>
<!-- v scrollbar -->
<div class="a" style="left:880px;top:139px;width:17px;height:528px;background:#f2f2f2"></div>
<div class="a sbtn" style="left:880px;top:139px;width:17px;height:9px"></div>
<div class="a sbtn" style="left:880px;top:148px;width:17px;height:17px"><div class="a" style="left:4px;top:5px;border:4px solid transparent;border-top:0;border-bottom:5px solid #000"></div></div>
<div class="a sbtn" style="left:880px;top:561px;width:17px;height:45px"></div>
<div class="a sbtn" style="left:880px;top:650px;width:17px;height:17px"><div class="a" style="left:4px;top:6px;border:4px solid transparent;border-bottom:0;border-top:5px solid #000"></div></div>
<div class="a" style="left:897px;top:139px;width:5px;height:554px;background:#fafafa"></div>
<!-- h scrollbar -->
<div class="a" style="left:19px;top:629px;width:861px;height:17px;background:#f0f0f0;border-bottom:1px solid #999"></div>
<div class="a sbtn" style="left:19px;top:629px;width:17px;height:17px"><div class="a" style="left:5px;top:4px;border:4px solid transparent;border-left:0;border-right:5px solid #000"></div></div>
<div class="a sbtn" style="left:863px;top:629px;width:17px;height:17px"><div class="a" style="left:6px;top:4px;border:4px solid transparent;border-right:0;border-left:5px solid #000"></div></div>
<!-- nav toolbar -->
<div class="a" style="left:19px;top:647px;width:861px;height:22px;background:linear-gradient(180deg,#fdfdfd,#f2f2f2 50%,#dcdcdc);border-bottom:1px solid #b4b4b4"></div>
<svg class="a" style="left:26px;top:650px" width="16" height="16" viewBox="0 0 16 16"><rect x="1" y="2" width="14" height="12" rx="1" fill="#e8f0fb" stroke="#3c66b0" stroke-width="1.2"/><rect x="3" y="4" width="10" height="8" fill="#4a7ad8"/><path d="M4 6h8M4 8h8M4 10h8" stroke="#fff" stroke-width=".9"/></svg>
<svg class="a" style="left:48px;top:650px" width="16" height="16" viewBox="0 0 16 16"><rect x="1.5" y="2.5" width="13" height="11" fill="#ececec" stroke="#c0c0c0"/><rect x="3" y="4" width="4.5" height="8" fill="#b4b4b4"/><rect x="9" y="4" width="4" height="3.5" fill="#c8c8c8"/><rect x="9" y="8.5" width="4" height="3.5" fill="#d4d4d4"/></svg>
<svg class="a" style="left:70px;top:650px" width="16" height="16" viewBox="0 0 16 16"><rect x="1" y="2" width="14" height="12" rx="1" fill="#e8f0fb" stroke="#3c66b0" stroke-width="1.2"/><rect x="3" y="4" width="4.5" height="3.5" fill="#4a7ad8"/><rect x="8.5" y="4" width="4.5" height="3.5" fill="#4a7ad8"/><rect x="3" y="8.5" width="4.5" height="3.5" fill="#4a7ad8"/><rect x="8.5" y="8.5" width="4.5" height="3.5" fill="#4a7ad8"/></svg>
<svg class="a" style="left:90px;top:651px" width="14" height="14" viewBox="0 0 16 16"><path d="M3 3v10" stroke="#1f6fd4" stroke-width="1.8"/><path d="M12.5 3v10L5 8z" fill="#2a7be0" stroke="#1659b8" stroke-width=".6"/></svg>
<svg class="a" style="left:114px;top:651px" width="14" height="14" viewBox="0 0 16 16"><path d="M11.5 3v10L4.5 8z" fill="#2a7be0" stroke="#1659b8" stroke-width=".6"/></svg>
<svg class="a" style="left:237px;top:651px" width="14" height="14" viewBox="0 0 16 16"><path d="M4.5 3v10l7-5z" fill="#2a7be0" stroke="#1659b8" stroke-width=".6"/></svg>
<svg class="a" style="left:259px;top:651px" width="14" height="14" viewBox="0 0 16 16"><path d="M13 3v10" stroke="#1f6fd4" stroke-width="1.8"/><path d="M3.5 3v10L11 8z" fill="#2a7be0" stroke="#1659b8" stroke-width=".6"/></svg>
<svg class="a" style="left:280px;top:650px" width="16" height="16" viewBox="0 0 16 16"><circle cx="8" cy="8" r="5.5" fill="#e8f2fd" stroke="#5b93df" stroke-width="1.2"/><path d="M5 8h6" stroke="#2c6fd4" stroke-width="1.5"/></svg>
<svg class="a" style="left:352px;top:650px" width="16" height="16" viewBox="0 0 16 16"><circle cx="8" cy="8" r="5.5" fill="#e8f2fd" stroke="#5b93df" stroke-width="1.2"/><path d="M5 8h6M8 5v6" stroke="#2c6fd4" stroke-width="1.5"/></svg>
<svg class="a" style="left:378px;top:650px" width="16" height="16" viewBox="0 0 16 16"><path d="M8 1.5L14 8.5h-3.5V14.5h-5V8.5H2z" fill="#2a7be0" stroke="#1450a8" stroke-width=".8"/></svg>
<div class="a inp" style="left:135px;top:650px;width:96px;height:17px">10/11</div>
<div class="a inp" style="left:301px;top:650px;width:46px;height:17px">65%</div>
<!-- status -->
<div class="a" style="left:16px;top:670px;width:886px;height:23px;background:#f0f0f0;border-top:1px solid #fafafa"></div>
<div class="a" style="left:20px;top:676px;font-size:12px;color:#111;letter-spacing:.2px">©TTKN Corp.</div>
<!-- share bar -->
<div class="a" style="left:727px;top:671px;width:178px;height:28px;background:#f2f2f2;border-radius:3px 3px 0 0"></div>
<div class="a" style="left:739px;top:680px;width:10px;height:10px;border-radius:5px;background:#c8423c"></div>
<div class="a" style="left:758px;top:677px;font-size:13px;color:#222;letter-spacing:-.3px">00:06:23</div>
<div class="a" style="left:813px;top:679px;width:1px;height:12px;background:#d0d0d0"></div>
<svg class="a" style="left:827px;top:678px" width="14" height="14" viewBox="0 0 14 14"><path d="M4.2 2.6A5.3 5.3 0 1 0 9.8 2.6" fill="none" stroke="#f0466e" stroke-width="1.3"/><path d="M7 .5v6" stroke="#f0466e" stroke-width="1.3"/></svg>
<div class="a" style="left:842px;top:676px;font-size:12.5px;color:#333">退出分享</div>
</div>
</div>
<div class="a" style="left:937px;top:12px;width:404px;height:684px;background:#1a1a1a;border-radius:4px;box-shadow:0 0 0 1px rgba(10,10,10,.9) inset"></div>
<!-- header -->
<svg class="a" style="left:958px;top:27px" width="15" height="14" viewBox="0 0 15 14"><path d="M1 7.3L7.5 1.2 14 7.3M3 6.5V12.5h3.3V8.5h2.4v4H12V6.5" fill="none" stroke="#a9a9a9" stroke-width="1.2" stroke-linejoin="round"/></svg>
<div class="a" style="left:976px;top:24px;font-size:13px;line-height:18px;color:#a9a9a9;white-space:nowrap">大厅</div>
<div class="a" style="left:1071px;top:22px;font-size:16px;line-height:22px;color:#f4f4f4;white-space:nowrap">测控专...</div>
<div class="a" style="left:1169px;top:24px;font-size:12px;line-height:18px;color:#f4f4f4;white-space:nowrap">自由模式</div>
<svg class="a" style="left:1225px;top:24px" width="18" height="18" viewBox="0 0 18 18"><path d="M5 2h8l4 7-4 7H5L1 9z" fill="none" stroke="#b4b4b4" stroke-width="1.2"/><circle cx="9" cy="9" r="2.8" fill="none" stroke="#b4b4b4" stroke-width="1.2"/></svg>
<svg class="a" style="left:1253px;top:26px" width="14" height="14" viewBox="0 0 14 14"><path d="M0 1.5h14M0 7h14M0 12.5h14" stroke="#b4b4b4" stroke-width="1.2"/></svg>
<div class="a" style="left:1284px;top:33px;width:13px;height:1px;background:#b4b4b4"></div>
<svg class="a" style="left:1315px;top:28px" width="12" height="12" viewBox="0 0 12 12"><path d="M.5.5l11 11M11.5.5l-11 11" stroke="#b4b4b4" stroke-width="1.1"/></svg>
<!-- video -->
<div class="a" style="left:939px;top:176px;width:400px;height:354px;background:#000"></div>
<div class="a" style="left:951px;top:187px;font-size:12px;line-height:16px;color:#fff;white-space:nowrap">秋之白华</div>
<div class="a thumb" style="left:939px;top:198px;width:400px;height:310.8px;overflow:hidden"><div class="a tscale"><div class="a caj"><div class="a cajin">
<div class="a" style="left:5px;top:2px;width:908px;height:700px;background:#fb4b72"></div>
<div class="a" style="left:8px;top:5px;width:902px;height:694px;background:#f09a76"></div>
<!-- title bar -->
<svg class="a" style="left:18px;top:12px" width="16" height="16" viewBox="0 0 16 16"><rect x=".5" y=".5" width="15" height="15" fill="#d6cdf6" stroke="#1a1ad8"/><path d="M2 8l5-3 7 5-5 3.5z" fill="#fff" stroke="#2a9a3a" stroke-width=".8"/><path d="M4 8.5l5-3M5.5 9.5l5-3M7 10.5l5-3" stroke="#777" stroke-width=".7"/><rect x="6.5" y="1.5" width="2.5" height="5" fill="#e02020"/><rect x="9" y="2" width="2" height="4.5" fill="#2030d0"/><rect x="11" y="1.5" width="2.5" height="5.5" fill="#c020c0"/></svg>
<div class="a ttl" style="left:217px;top:10.5px;width:490px;height:22px">CAJViewer 7.2 - [“疫”路同心践使命——线上专题组织生活会20200305]</div>
<div class="a" style="left:814px;top:18px;width:8px;height:2px;background:#222"></div>
<div class="a" style="left:840px;top:12px;width:10px;height:8px;border:1px solid #222;border-top-width:2px"></div>
<div class="a" style="left:858px;top:6px;width:45px;height:20px;background:#c75050"></div>
<svg class="a" style="left:875px;top:11px" width="12" height="11" viewBox="0 0 12 11"><path d="M2.5 2l7.5 7M10 2l-7.5 7" stroke="#fff" stroke-width="1.7"/></svg>
<!-- client -->
<div class="a" style="left:16px;top:36px;width:886px;height:657px;background:#f0f0f0"></div>
<!-- menu bar -->
<div class="a" style="left:16px;top:36px;width:691px;height:23px;background:#e6e6e6"></div>
<svg class="a" style="left:19px;top:38px" width="20" height="19" viewBox="0 0 20 19"><path d="M5 0l2 0-1 4h-2zM10 0l2 0-1 4h-2zM15 0l2 0-1 4h-2z" fill="#fff"/><rect x="3" y="2" width="15" height="16" fill="#1b3f8f"/><path d="M4 1l3 0-1.5 4h-3zM9 1l3 0-1.5 4h-3zM14 1l3 0-1.5 4h-3z" fill="#e8eef8"/><rect x="1" y="6" width="18" height="9" fill="#1667a8" stroke="#222" stroke-width=".8"/><text x="10" y="13.5" font-family="Liberation Sans,sans-serif" font-size="7.5" font-weight="bold" fill="#fff" text-anchor="middle">PDF</text><path d="M5 15.5v3M8 15.5v3M12 15.5v3M15 15.5v3" stroke="#6c8fd0" stroke-width="1.2"/></svg>
<div class="a mn" style="left:46px;top:41px">文件(<u>F</u>)</div>
<div class="a mn" style="left:104px;top:41px">编辑(<u>E</u>)</div>
<div class="a mn" style="left:163px;top:41px">查看(<u>V</u>)</div>
<div class="a mn" style="left:224px;top:41px">工具(<u>T</u>)</div>
<div class="a mn" style="left:284px;top:41px">窗口(<u>W</u>)</div>
<div class="a mn" style="left:347px;top:41px">帮助(<u>H</u>)</div>
<div class="a" style="left:652px;top:50px;width:6px;height:2px;background:#000"></div>
<svg class="a" style="left:671px;top:42px" width="10" height="10" viewBox="0 0 10 10"><path d="M3 .8h6v5.5H7" fill="none" stroke="#000" stroke-width="1.4"/><rect x=".8" y="3.5" width="5.8" height="5.5" fill="none" stroke="#000" stroke-width="1.3"/><path d="M.8 4h5.8" stroke="#000" stroke-width="1.6"/></svg>
<svg class="a" style="left:690px;top:42px" width="10" height="10" viewBox="0 0 10 10"><path d="M1 1l8 8M9 1l-8 8" stroke="#000" stroke-width="1.8"/></svg>
<!-- toolbars -->
<div class="a" style="left:16px;top:59px;width:691px;height:52px;background:#dedede"></div>
<div class="a tb" style="left:16px;top:59px;width:120px;height:25px"></div>
<div class="a tb" style="left:137px;top:59px;width:89px;height:25px"></div>
<div class="a tb" style="left:227px;top:59px;width:344px;height:25px"></div>
<div class="a tb" style="left:572px;top:59px;width:134px;height:25px"></div>
<div class="a grip" style="left:20px;top:66px"></div>
<svg class="a" style="left:29px;top:63px" width="16" height="16" viewBox="0 0 16 16"><path d="M1 13V4h4l1 1.5h6V7" fill="#f7d674" stroke="#b58a24" stroke-width="1"/><path d="M1 13l2.5-6h11.5l-2.5 6z" fill="#fbe08a" stroke="#b58a24"/><path d="M10 3.2c1.5-1.6 3.6-1.2 4.4.4M14.6 1.4v2.4h-2.4" fill="none" stroke="#3b78c4" stroke-width="1.2"/></svg>
<svg class="a" style="left:52px;top:63px" width="16" height="16" viewBox="0 0 16 16"><rect x="2" y="2" width="12" height="12" rx="1" fill="#c9c9c9" stroke="#b0b0b0"/><rect x="4.5" y="2.5" width="7" height="4.5" fill="#eee"/><rect x="5" y="9.5" width="6" height="4" fill="#e4e4e4"/></svg>
<div class="a tsep" style="left:73px;top:62px;height:18px"></div>
<svg class="a" style="left:80px;top:63px" width="16" height="16" viewBox="0 0 16 16"><path d="M4 6l2-4h6l-1.5 4z" fill="#fff" stroke="#7e8aa0"/><path d="M1.5 8l2-2.5h10l1 2.5v4.5h-13z" fill="#dfe5ef" stroke="#65728c"/><rect x="2" y="9" width="12" height="1.4" fill="#8a97b0"/><path d="M11 9.5l3 .5-2 2 2.5.3-4 3.2 1-2.6-2.2-.3z" fill="#f5c21c" stroke="#c48a10" stroke-width=".5"/></svg>
<svg class="a" style="left:103px;top:63px" width="16" height="16" viewBox="0 0 16 16"><path d="M2 1.5h7l3 3V14H2z" fill="#fff" stroke="#5e77a8"/><circle cx="9" cy="8.5" r="3.3" fill="#dbe9f8" stroke="#8497b5" stroke-width="1.2"/><path d="M11.3 11l3.2 3.4" stroke="#d18a2c" stroke-width="2.2" stroke-linecap="round"/></svg>
<div class="a tcap" style="left:125px;top:59px;width:11px;height:25px"><svg class="a" style="left:2px;top:4px" width="6" height="4" viewBox="0 0 7 5"><path d="M0 0l3 2.5-3 2.5zM4 0l3 2.5-3 2.5z" fill="#000"/></svg><div class="a capbar" style="left:2.5px;bottom:8px"></div><div class="a capar" style="left:2.5px;bottom:3px"></div></div>
<div class="a grip" style="left:141px;top:66px"></div>
<svg class="a" style="left:149px;top:63px" width="16" height="16" viewBox="0 0 16 16"><path d="M.5 9.5l4-4.5 6 1.5 2.5 5-6 2.5z" fill="#eaa23a" stroke="#b56f14" stroke-width=".6"/><circle cx="8.6" cy="6" r="4.4" fill="#e4f1fc" stroke="#8aa4c4" stroke-width="1.2"/><path d="M11.6 9.6l3.8 4.6" stroke="#d87a2a" stroke-width="2.4" stroke-linecap="round"/></svg>
<svg class="a" style="left:172px;top:63px" width="16" height="16" viewBox="0 0 16 16"><path d="M1.5 6.5L7 1.5V4.5H10C12.5 4.5 14 6 14 8.5V14H10.5V9.5C10.5 8.8 10.2 8.5 9.5 8.5H7V11.5Z" fill="#cdcdcd" stroke="#b4b4b4" stroke-width=".7"/></svg>
<svg class="a" style="left:195px;top:63px" width="16" height="16" viewBox="0 0 16 16"><path d="M2 2H5.5V7C5.5 7.7 5.8 8 6.5 8H9.5V5L15 10L9.5 15V12H5.5C3 12 2 10.5 2 8.5Z" fill="#d6d6d6" stroke="#c2c2c2" stroke-width=".7"/></svg>
<div class="a tcap" style="left:214px;top:59px;width:12px;height:25px"><div class="a capbar" style="left:3px;bottom:8px"></div><div class="a capar" style="left:3px;bottom:3px"></div></div>
<div class="a grip" style="left:231px;top:66px"></div>
<div class="a selbox" style="left:258px;top:61px;width:21px;height:20px"></div>
<svg class="a" style="left:238px;top:63px" width="16" height="16" viewBox="0 0 16 16"><rect x="2" y="1.5" width="12.5" height="13.5" fill="#dce9fa" stroke="#6e9fe0" stroke-width="1"/><rect x="3" y="2.5" width="10.5" height="11.5" fill="url(#gb)"/></svg>
<svg class="a" style="left:260px;top:63px" width="16" height="16" viewBox="0 0 16 16"><rect x="3" y="2" width="11" height="6.5" fill="#e8f1fc"/><rect x="3" y="9.6" width="11" height="6" fill="url(#gb)"/><path d="M2.4 1v15M14.6 1v15M2.4 9h12.2" fill="none" stroke="#4f8ad8" stroke-width="1.3"/></svg>
<svg class="a" style="left:282px;top:63px" width="16" height="16" viewBox="0 0 16 16"><rect x="2.5" y="1" width="4.5" height="5" fill="#edf4fd"/><rect x="9.5" y="1" width="4.5" height="5" fill="#edf4fd"/><rect x="2.5" y="8.5" width="4.5" height="7.5" fill="url(#gb)"/><rect x="9.5" y="8.5" width="4.5" height="7.5" fill="url(#gb)"/><path d="M2.5 1v5h4.5v-5M9.5 1v5h4.5v-5M2.5 16v-7.5h4.5v7.5M9.5 16v-7.5h4.5v7.5" fill="none" stroke="#5b93df" stroke-width="1.1"/></svg>
<svg class="a" style="left:304px;top:63px" width="16" height="16" viewBox="0 0 16 16"><rect x="1" y="3.5" width="6" height="9.5" fill="#dbe8fa" stroke="#7fabe6"/><rect x="9" y="3.5" width="6" height="9.5" fill="#dbe8fa" stroke="#7fabe6"/></svg>
<div class="a tsep" style="left:327px;top:62px;height:18px"></div>
<svg class="a" style="left:338px;top:63px" width="16" height="16" viewBox="0 0 16 16"><path d="M6 1.5h8v6.5l-2 2H6z" fill="#d4e3f7" stroke="#7d9fd2"/><path d="M1.5 7.5h8v5l-1.5 2H1.5z" fill="#f0f0f0" stroke="#a8a8a8"/><path d="M14 11v3h-3.5M12 12.5l-1.7 1.5 1.7 1.5" fill="none" stroke="#222" stroke-width="1.2"/></svg>
<div class="a ddar" style="left:360px;top:70px"></div>
<svg class="a" style="left:377px;top:63px" width="16" height="16" viewBox="0 0 16 16"><path d="M1 1.5h5l2 2V9H1z" fill="#e8e8e8" stroke="#b5b5b5"/><path d="M6.5 6h8.5v6.5l-2 2H6.5z" fill="#d4e3f7" stroke="#7d9fd2"/><path d="M9.5 3c1-1.5 3-1.5 4 0M13.8 1v2.3h-2.3" fill="none" stroke="#222" stroke-width="1"/></svg>
<div class="a ddar" style="left:400px;top:70px"></div>
<div class="a tsep" style="left:414px;top:62px;height:18px"></div>
<svg class="a" style="left:420px;top:63px" width="16" height="16" viewBox="0 0 16 16"><rect x="1" y="2" width="14" height="12" rx="1.5" fill="#e8f0fb" stroke="#4f74b4" stroke-width="1.2"/><rect x="3" y="4" width="10" height="8" fill="#3f6fd0"/><path d="M5 6.5h6M5 8.5h6M5 10.3h4" stroke="#fff" stroke-width="1"/></svg>
<div class="a tsep" style="left:442px;top:62px;height:18px"></div>
<div class="a selbox" style="left:470px;top:61px;width:21px;height:20px"></div>
<svg class="a" style="left:450px;top:63px" width="16" height="16" viewBox="0 0 16 16"><path d="M3 1.5h7l3.5 3.5V14.5H3z" fill="url(#gb)" stroke="#86a9dc"/><path d="M10 1.5V5h3.5" fill="#fff" stroke="#86a9dc"/></svg>
<svg class="a" style="left:473px;top:63px" width="16" height="16" viewBox="0 0 16 16"><path d="M1.5 1v14M1.5 1.5h9" stroke="#444" stroke-width="1.2" fill="none"/><path d="M3.5 2.5h7.5l3 3V15H3.5z" fill="url(#gb)" stroke="#86a9dc"/><path d="M11 2.5V5.5h3" fill="#fff" stroke="#86a9dc"/></svg>
<svg class="a" style="left:495px;top:63px" width="16" height="16" viewBox="0 0 16 16"><rect x="1" y="1.5" width="14.5" height="13.5" fill="none" stroke="#7ea6e0"/><path d="M3.5 3h7l2.5 2.5V13.5H3.5z" fill="url(#gb)" stroke="#9a9a9a"/></svg>
<svg class="a" style="left:517px;top:63px" width="16" height="16" viewBox="0 0 16 16"><circle cx="6.5" cy="6.5" r="4.8" fill="#dcebfb" stroke="#7fa7e0" stroke-width="1.3"/><path d="M4 6.5h5" stroke="#2c5fc4" stroke-width="1.6"/><path d="M10 10.2l4.5 4.3" stroke="#e29a3c" stroke-width="2.2" stroke-linecap="round"/></svg>
<svg class="a" style="left:539px;top:63px" width="16" height="16" viewBox="0 0 16 16"><circle cx="6.5" cy="6.5" r="4.8" fill="#dcebfb" stroke="#7fa7e0" stroke-width="1.3"/><path d="M4 6.5h5M6.5 4v5" stroke="#2c5fc4" stroke-width="1.6"/><path d="M10 10.2l4.5 4.3" stroke="#e29a3c" stroke-width="2.2" stroke-linecap="round"/></svg>
<div class="a tcap" style="left:559px;top:59px;width:12px;height:25px"><div class="a capbar" style="left:3px;bottom:8px"></div><div class="a capar" style="left:3px;bottom:3px"></div></div>
<div class="a grip" style="left:576px;top:66px"></div>
<svg class="a" style="left:581px;top:63px" width="16" height="16" viewBox="0 0 16 16"><path d="M3 3v10" stroke="#1f6fd4" stroke-width="1.8"/><path d="M12.5 3v10L5 8z" fill="#2a7be0" stroke="#1659b8" stroke-width=".6"/></svg>
<svg class="a" style="left:605px;top:63px" width="16" height="16" viewBox="0 0 16 16"><path d="M11.5 3v10L4.5 8z" fill="#2a7be0" stroke="#1659b8" stroke-width=".6"/></svg>
<svg class="a" style="left:628px;top:63px" width="16" height="16" viewBox="0 0 16 16"><path d="M4.5 3v10l7-5z" fill="#2a7be0" stroke="#1659b8" stroke-width=".6"/></svg>
<svg class="a" style="left:650px;top:63px" width="16" height="16" viewBox="0 0 16 16"><path d="M13 3v10" stroke="#1f6fd4" stroke-width="1.8"/><path d="M3.5 3v10L11 8z" fill="#2a7be0" stroke="#1659b8" stroke-width=".6"/></svg>
<div class="a tsep" style="left:672px;top:62px;height:18px"></div>
<div class="a tcap" style="left:695px;top:59px;width:11px;height:25px"><svg class="a" style="left:2px;top:4px" width="6" height="4" viewBox="0 0 7 5"><path d="M0 0l3 2.5-3 2.5zM4 0l3 2.5-3 2.5z" fill="#000"/></svg><div class="a capbar" style="left:2.5px;bottom:8px"></div><div class="a capar" style="left:2.5px;bottom:3px"></div></div>
<div class="a tb" style="left:16px;top:85px;width:449px;height:25px"></div>
<div class="a tb" style="left:466px;top:85px;width:201px;height:25px"></div>
<div class="a tb" style="left:668px;top:85px;width:38px;height:25px"></div>
<div class="a grip" style="left:20px;top:92px"></div>
<div class="a selbox" style="left:26px;top:85.5px;width:21px;height:21px"></div>
<svg class="a" style="left:28px;top:88.5px" width="16" height="16" viewBox="0 0 16 16"><path d="M5 15.5C3.5 13.5 2.5 11.5 1.2 9.5 .5 8.2 1.8 7.2 2.9 8.3L4.4 10.2V4c0-1.5 1.9-1.5 1.9 0V2.8c0-1.6 2-1.6 2 0v.8c0-1.5 1.9-1.5 1.9 0V5c0-1.3 1.8-1.3 1.8.2V10.5c0 2-.6 3.5-1.2 5z" fill="#fde4cc" stroke="#8a4a20" stroke-width=".9" stroke-linejoin="round"/><path d="M6.3 8V4M8.3 8V3.5M10.2 8.2V5" stroke="#8a4a20" stroke-width=".8"/><path d="M5.3 14.5c2 .6 4 .6 5.5 0l.6-2.5H4.5z" fill="#f4a870" opacity=".8"/><path d="M5.3 4v4M7.3 3v4M9.2 4v3.5" stroke="#fff" stroke-width=".7" opacity=".9"/></svg>
<svg class="a" style="left:50px;top:88.5px" width="16" height="16" viewBox="0 0 16 16"><path d="M5.5 1.5v11.5l2.6-2.5 1.9 4 1.5-.7-1.9-3.9h3.5z" fill="#2a5f8c" stroke="#1c4468" stroke-width=".6"/></svg>
<svg class="a" style="left:72px;top:88.5px" width="16" height="16" viewBox="0 0 16 16"><path d="M1 2h9v2.5h-.8C9 3.3 8.5 3 7 3H6.5v9c0 .8.4 1 1.5 1v.8H3V13c1 0 1.5-.2 1.5-1V3H4C2.5 3 2 3.3 1.8 4.5H1z" fill="#1f6fd0"/><rect x="8" y="8" width="7" height="6.5" fill="none" stroke="#2a66c8" stroke-width="1.1" stroke-dasharray="2 1.3"/></svg>
<svg class="a" style="left:94px;top:88.5px" width="16" height="16" viewBox="0 0 16 16"><rect x="1" y="1.5" width="14" height="13" fill="#cfe0f6" stroke="#2a66c8" stroke-width="1.1" stroke-dasharray="2.2 1.4"/><path d="M5 3l1.2 2.4 2.6.3-1.9 1.8.5 2.6L5 8.9 2.6 10.1l.5-2.6L1.2 5.7l2.6-.3z" fill="#f5b81c"/><circle cx="9.5" cy="9.5" r="3.2" fill="#4f92e0" stroke="#1c58b0"/><path d="M8 13.5l6 1.2-2-3.5" fill="#f0a030"/></svg>
<svg class="a" style="left:116px;top:88.5px" width="16" height="16" viewBox="0 0 16 16"><circle cx="4.5" cy="10" r="3" fill="#dcebfb" stroke="#6b7f9c" stroke-width="1.1"/><circle cx="11" cy="10" r="3" fill="#dcebfb" stroke="#6b7f9c" stroke-width="1.1"/><path d="M7.5 9.5h1" stroke="#6b7f9c" stroke-width="1.2"/><path d="M3 4c1.5-2 4-2 5.5-.5M2.5 2l.3 2.3 2.2-.3" fill="none" stroke="#333" stroke-width=".9"/><path d="M9 7l2.5-6L14 7M10 5h3" fill="none" stroke="#222" stroke-width="1.1"/><path d="M8 14.5l5.5-4" stroke="#2a66c8" stroke-width="1.8"/></svg>
<svg class="a" style="left:139px;top:88.5px" width="16" height="16" viewBox="0 0 16 16"><path d="M4 2.5h10.5V10c0 2-2 4.5-5 4.5H3c1.5-1.5 1-3 1-5z" fill="#f6df5c" stroke="#b59a1c" stroke-width=".8"/><path d="M9.5 14.5c.5-2 2-3.5 5-4.5" fill="#e8c93c" stroke="#b59a1c" stroke-width=".6"/><circle cx="3" cy="4.5" r="2" fill="#2f6fd8" stroke="#1a4aa8" stroke-width=".6"/><path d="M4.5 5.5l4 2" stroke="#1a4aa8" stroke-width="1.3"/></svg>
<svg class="a" style="left:161px;top:88.5px" width="16" height="16" viewBox="0 0 16 16"><path d="M4 3h7l3 3v9H4z" fill="#fff" stroke="#7f8fa8" stroke-width=".9"/><path d="M6 6.5h5M6 8.5h6M6 10.5h6M6 12.5h3" stroke="#e0644c" stroke-width=".8"/><path d="M2.5 0v5M0 2.5h5M.8.8l3.4 3.4M4.2.8L.8 4.2" stroke="#f0b020" stroke-width=".9"/><path d="M9 15l.8-2.8 4.7-4.7 2 2-4.7 4.7z" fill="#f2c04c" stroke="#6a4a1a" stroke-width=".7"/></svg>
<div class="a tsep" style="left:183px;top:88px;height:18px"></div>
<svg class="a" style="left:190px;top:88.5px" width="16" height="16" viewBox="0 0 16 16"><path d="M1.3 14.3L12.3 1.8l2.5 2L3.8 15.8z" fill="#2a7be0" stroke="#1450a8" stroke-width=".6"/><path d="M3 14L13 2.8" stroke="#8cc0f8" stroke-width=".8"/><path d="M1.3 14.3l.8 1 1.7.5z" fill="#123"/></svg>
<svg class="a" style="left:212px;top:88.5px" width="16" height="16" viewBox="0 0 16 16"><path d="M2.5 14.5l1.2-4L12 2l2.6 2.5L6.3 13z" fill="#f08a3c" stroke="#a84a14" stroke-width=".7"/><path d="M2.5 14.5l1.2-4 2.6 2.5z" fill="#f3d9b4" stroke="#7a4a24" stroke-width=".5"/><path d="M2.5 14.5l.5-1.6 1 1z" fill="#222"/><path d="M11 3l2.6 2.5 1-1c.5-.5.4-1-.1-1.5l-1-1c-.5-.4-1-.4-1.5 0z" fill="#e8c0b0" stroke="#a84a14" stroke-width=".5"/></svg>
<svg class="a" style="left:234px;top:88.5px" width="16" height="16" viewBox="0 0 16 16"><rect x="1.5" y="3" width="13" height="9.5" fill="url(#gr)" stroke="#2a5fe0" stroke-width="1.3"/></svg>
<svg class="a" style="left:256px;top:88.5px" width="16" height="16" viewBox="0 0 16 16"><circle cx="8" cy="8" r="6" fill="url(#ge)" stroke="#4a6ae8" stroke-width="1.2"/></svg>
<div class="a tsep" style="left:279px;top:88px;height:18px"></div>
<svg class="a" style="left:286px;top:88.5px" width="16" height="16" viewBox="0 0 16 16"><rect x="1" y="1" width="15" height="14.5" fill="#9c9c9c"/><path d="M6 12.5c2-1 2-6 4.5-8M7 8.5h3" stroke="#fff" stroke-width="1.4" fill="none"/></svg>
<svg class="a" style="left:308px;top:88.5px" width="16" height="16" viewBox="0 0 16 16"><rect x="1" y="1" width="14.5" height="14" fill="#dedede" stroke="#d0d0d0"/><path d="M1 13l4.5-4.5 3 3L12 8l3.5 3.5V15H1z" fill="#f2f2f2"/><circle cx="11" cy="4.5" r="1.8" fill="#f4f4f4"/></svg>
<svg class="a" style="left:330px;top:88.5px" width="16" height="16" viewBox="0 0 16 16"><ellipse cx="7.5" cy="8" rx="6.5" ry="6" fill="#d8d8d8" stroke="#a8a8a8"/><circle cx="7.5" cy="8" r="1.2" fill="#fff"/><circle cx="7.5" cy="4.3" r="1.4" fill="#f6f6f6"/><circle cx="7.5" cy="11.7" r="1.4" fill="#f6f6f6"/><circle cx="3.8" cy="8" r="1.4" fill="#f6f6f6"/><circle cx="11.2" cy="8" r="1.4" fill="#f6f6f6"/><path d="M11 13.5h4.5" stroke="#a0a0a0" stroke-width="1.6"/></svg>
<svg class="a" style="left:352px;top:88.5px" width="16" height="16" viewBox="0 0 16 16"><path d="M6.5 12.5V3l7-2v9.5" fill="none" stroke="#b8b8b8" stroke-width="1.5"/><ellipse cx="4.8" cy="12.8" rx="2.2" ry="1.7" fill="#bdbdbd"/><ellipse cx="11.8" cy="10.8" rx="2.2" ry="1.7" fill="#bdbdbd"/><rect x="0" y="11" width="1.2" height="1.5" fill="#aaa"/></svg>
<div class="a tsep" style="left:375px;top:88px;height:18px"></div>
<svg class="a" style="left:383px;top:88.5px" width="16" height="16" viewBox="0 0 16 16"><rect x="0" y="0" width="9.5" height="8.5" fill="#f4e83c"/><text x="0" y="7" font-family="Liberation Sans,sans-serif" font-size="7.5" font-weight="bold" fill="#222">ab</text><rect x="0" y="12.5" width="15" height="3" fill="#f8f000"/><path d="M6 12l1-3L13.5 2.5l2 2L9 11z" fill="#6e9fe6" stroke="#2a4a8a" stroke-width=".6"/><path d="M6 12l1-3 2 2z" fill="#f3d9b4" stroke="#555" stroke-width=".4"/></svg>
<svg class="a" style="left:405px;top:88.5px" width="16" height="16" viewBox="0 0 16 16"><path d="M1.5 14L7 1.5h2L14.5 14h-3.2l-1-2.5H5.6l-1 2.5zM6.4 9.3h3.2L8 5z" fill="#1c56c8"/><path d="M0 7h16" stroke="#e81c1c" stroke-width="1.3"/></svg>
<svg class="a" style="left:428px;top:88.5px" width="16" height="16" viewBox="0 0 16 16"><path d="M4.5 12.5L9 1h2l4.5 11.5h-2.8l-.8-2.2H8l-.8 2.2zM8.8 8.3h2.4L10 4.8z" fill="#2a9a2c"/><path d="M.5 12.5l3-7h1.4l3 7H6l-.5-1.3H2.9l-.5 1.3zM3.4 9.8h1.6L4.2 7.5z" fill="#2a7be0"/><path d="M0 15h16" stroke="#1c8a1c" stroke-width="1.4"/></svg>
<div class="a tcap" style="left:453px;top:85px;width:12px;height:25px"><svg class="a" style="left:2.5px;top:4px" width="6" height="4" viewBox="0 0 7 5"><path d="M0 0l3 2.5-3 2.5zM4 0l3 2.5-3 2.5z" fill="#000"/></svg><div class="a capbar" style="left:3px;bottom:8px"></div><div class="a capar" style="left:3px;bottom:3px"></div></div>
<div class="a grip" style="left:470px;top:92px"></div>
<svg class="a" style="left:481px;top:88.5px" width="16" height="16" viewBox="0 0 16 16"><rect x="0" y="0" width="16" height="15" rx="1.5" fill="url(#gg)" stroke="#1c7a1c" stroke-width=".8"/><path d="M3 7.5h9M8.5 3.5l4 4-4 4" fill="none" stroke="#fff" stroke-width="1.8"/></svg>
<div class="a ddar" style="left:503px;top:95.5px"></div>
<div class="a tcap" style="left:655px;top:85px;width:12px;height:25px"><svg class="a" style="left:2.5px;top:4px" width="6" height="4" viewBox="0 0 7 5"><path d="M0 0l3 2.5-3 2.5zM4 0l3 2.5-3 2.5z" fill="#000"/></svg><div class="a capbar" style="left:3px;bottom:8px"></div><div class="a capar" style="left:3px;bottom:3px"></div></div>
<div class="a grip" style="left:672px;top:92px"></div>
<div class="a tcap" style="left:695px;top:85px;width:11px;height:25px"><svg class="a" style="left:2px;top:4px" width="6" height="4" viewBox="0 0 7 5"><path d="M0 0l3 2.5-3 2.5zM4 0l3 2.5-3 2.5z" fill="#000"/></svg><div class="a capbar" style="left:2.5px;bottom:8px"></div><div class="a capar" style="left:2.5px;bottom:3px"></div></div>
<!-- banner -->
<div class="a banner" style="left:707px;top:36px;width:195px;height:70px">
 <div class="a" style="left:0;top:0;width:195px;height:70px;background:linear-gradient(42.6deg,#318ddc 0,#2b83d4 55.8%,#265f90 56.3%,#235885 100%)"></div>
 <div class="a" style="left:36px;top:52px;width:70px;height:18px;background:linear-gradient(157deg,rgba(30,70,110,0) 42%,rgba(28,66,106,.6) 58%,rgba(30,70,110,0) 74%)"></div>
 <svg class="a" style="left:0;top:0" width="195" height="70" viewBox="0 0 195 70"><path d="M4.5 39.5L27 15.5M14.5 39.7h72l9.5-15" stroke="#fff" stroke-width="1.7" fill="none"/></svg>
 <div class="a bt1" style="left:22px;top:14px">全球学术</div>
 <div class="a bt2" style="left:110px;top:11.5px">快报</div>
 <div class="a bt3" style="left:161px;top:15px">cnki</div>
 <div class="a bt4" style="left:157px;top:30px">移动版</div>
 <div class="a bt5" style="left:19px;top:48.5px">全球文献整合, 学术热点速递</div>
</div>
<!-- tab bar -->
<div class="a" style="left:16px;top:111px;width:886px;height:25px;background:#fff;border-bottom:1px solid #a0a0a0;border-top:1px solid #d8d8d8"></div><div class="a" style="left:16px;top:136px;width:886px;height:3px;background:#fff"></div>
<svg class="a" style="left:16px;top:111px" width="240" height="27" viewBox="0 0 240 27"><path d="M9 8.5v8l-4-4z" fill="#fff" stroke="#000" stroke-width="1"/><path d="M14 24.5l8-3 19-17h183q4 0 4 4v16.5" fill="#fff" stroke="#8a8a8a" stroke-width="1"/><path d="M228.5 10v14" stroke="#555" stroke-width="1"/><path d="M20 25.5h208" stroke="#fff" stroke-width="2"/></svg>
<svg class="a" style="left:58px;top:115px" width="17" height="17" viewBox="0 0 20 19"><rect x="3" y="2" width="15" height="16" fill="#1b3f8f"/><path d="M4 1l3 0-1.5 4h-3zM9 1l3 0-1.5 4h-3zM14 1l3 0-1.5 4h-3z" fill="#e8eef8"/><rect x="1" y="6" width="18" height="9" fill="#1667a8" stroke="#222" stroke-width=".8"/><text x="10" y="13.5" font-family="Liberation Sans,sans-serif" font-size="7.5" font-weight="bold" fill="#fff" text-anchor="middle">PDF</text></svg>
<div class="a tabt" style="left:82px;top:115px">“疫”路同心践使命——线…</div>
<svg class="a" style="left:872px;top:118px" width="26" height="12" viewBox="0 0 26 12"><path d="M2.5 1.5v8l4-4z" fill="#fff" stroke="#000"/><path d="M17 2l7 7M24 2l-7 7" stroke="#000" stroke-width="1.7"/></svg>
<!-- doc area -->
<div class="a" style="left:19px;top:139px;width:861px;height:490px;background:#5f6985;border:1px solid;border-color:#696969 #d0d0d0 #d0d0d0 #696969"></div>
<div class="a" style="left:34px;top:141px;width:833px;height:2px;background:#000"></div>
<div class="a" style="left:34px;top:143px;width:833px;height:1px;background:#c8c4b0"></div>
<div class="a" style="left:33px;top:150px;width:836px;height:472px;background:#000"></div>
<div class="a" style="left:33px;top:621px;width:836px;height:1px;background:#c8c4b0"></div>
<div class="a" style="left:868px;top:150px;width:1px;height:472px;background:#c8c4b0"></div>
<div class="a page" style="left:34px;top:151px;width:833px;height:469px">
<div class="a" style="left:0;top:38px;width:833px;height:15px;background:#e8e8e8"></div>
<div class="a" style="left:0;top:53px;width:833px;height:5px;background:#c00000"></div>
<div class="a" style="left:197px;top:3px;width:340px;height:49px;background:#c00000"></div>
<div class="a" style="left:197px;top:12px;width:341px;text-align:center;font-size:24px;font-weight:bold;color:#fff;line-height:32px;letter-spacing:.5px">完成本年度公开承诺</div>
<div class="a part4" style="left:98.5px;top:10.5px">Part&nbsp; 4</div>
<svg class="a" style="left:20px;top:0" width="68" height="58" viewBox="-2 -1 68 58">
<defs><pattern id="dith2" width="3" height="3" patternUnits="userSpaceOnUse"><rect width="3" height="3" fill="#e4e4e4"/><rect width="1.5" height="1.5" fill="#111"/><rect x="1.5" y="1.5" width="1.5" height="1.5" fill="#3a3a3a"/></pattern>
<pattern id="strp2" width="2.5" height="4" patternUnits="userSpaceOnUse"><rect width="2.5" height="4" fill="#c8960e"/><rect width="1" height="4" fill="#8a5e08"/></pattern></defs>
<g transform="translate(0 3)" fill="url(#dith2)" stroke="url(#dith2)" stroke-width="10" stroke-linejoin="round"><path d="M28 4L48 9 54 28 58 40 40 42 20 44 6 40 12 22z"/><path d="M28.1 2.9C33 2.5 36 3 39 3.9C43 5.5 46 7 48.2 9.3C51 12 53 15 53.6 18.4C54.3 22 54.3 25 53.6 28.5C52.5 31.5 50.5 34 48.2 35.8C45.5 38.3 42.5 40 39 41.2C35 42.8 30.5 43.8 26.3 44C22.5 44.2 19 43.8 15.3 43L10.8 41.7L9.9 45.8L4.4 44.9L4 37.6L6.2 32.1L12.6 34.8C16.5 36.2 20.5 36.9 24.5 36.7C27.8 36.5 30.8 36 33.6 34.8C37 33.3 39.8 31 41.8 28.5C43.5 26.3 44.3 23.8 44.5 21.2C44.6 18.3 44 15.5 42.7 13C41.4 10.7 39.5 8.9 37.2 7.5C35.2 6.4 33 5.9 30.8 5.7Z"/><path d="M10.8 19.3L28.1 9.8L30.8 13.9L27.2 16.6L59.1 36.7L55.5 44L46.3 38.5L24.5 24.8L19.9 23L15.3 25.7Z"/></g>
<g fill="url(#strp2)" stroke="url(#strp2)" stroke-width=".6"><path d="M28.1 2.9C33 2.5 36 3 39 3.9C43 5.5 46 7 48.2 9.3C51 12 53 15 53.6 18.4C54.3 22 54.3 25 53.6 28.5C52.5 31.5 50.5 34 48.2 35.8C45.5 38.3 42.5 40 39 41.2C35 42.8 30.5 43.8 26.3 44C22.5 44.2 19 43.8 15.3 43L10.8 41.7L9.9 45.8L4.4 44.9L4 37.6L6.2 32.1L12.6 34.8C16.5 36.2 20.5 36.9 24.5 36.7C27.8 36.5 30.8 36 33.6 34.8C37 33.3 39.8 31 41.8 28.5C43.5 26.3 44.3 23.8 44.5 21.2C44.6 18.3 44 15.5 42.7 13C41.4 10.7 39.5 8.9 37.2 7.5C35.2 6.4 33 5.9 30.8 5.7Z" transform="translate(0 4)"/><path d="M28.1 2.9C33 2.5 36 3 39 3.9C43 5.5 46 7 48.2 9.3C51 12 53 15 53.6 18.4C54.3 22 54.3 25 53.6 28.5C52.5 31.5 50.5 34 48.2 35.8C45.5 38.3 42.5 40 39 41.2C35 42.8 30.5 43.8 26.3 44C22.5 44.2 19 43.8 15.3 43L10.8 41.7L9.9 45.8L4.4 44.9L4 37.6L6.2 32.1L12.6 34.8C16.5 36.2 20.5 36.9 24.5 36.7C27.8 36.5 30.8 36 33.6 34.8C37 33.3 39.8 31 41.8 28.5C43.5 26.3 44.3 23.8 44.5 21.2C44.6 18.3 44 15.5 42.7 13C41.4 10.7 39.5 8.9 37.2 7.5C35.2 6.4 33 5.9 30.8 5.7Z" transform="translate(0 3)"/><path d="M28.1 2.9C33 2.5 36 3 39 3.9C43 5.5 46 7 48.2 9.3C51 12 53 15 53.6 18.4C54.3 22 54.3 25 53.6 28.5C52.5 31.5 50.5 34 48.2 35.8C45.5 38.3 42.5 40 39 41.2C35 42.8 30.5 43.8 26.3 44C22.5 44.2 19 43.8 15.3 43L10.8 41.7L9.9 45.8L4.4 44.9L4 37.6L6.2 32.1L12.6 34.8C16.5 36.2 20.5 36.9 24.5 36.7C27.8 36.5 30.8 36 33.6 34.8C37 33.3 39.8 31 41.8 28.5C43.5 26.3 44.3 23.8 44.5 21.2C44.6 18.3 44 15.5 42.7 13C41.4 10.7 39.5 8.9 37.2 7.5C35.2 6.4 33 5.9 30.8 5.7Z" transform="translate(0 2)"/><path d="M28.1 2.9C33 2.5 36 3 39 3.9C43 5.5 46 7 48.2 9.3C51 12 53 15 53.6 18.4C54.3 22 54.3 25 53.6 28.5C52.5 31.5 50.5 34 48.2 35.8C45.5 38.3 42.5 40 39 41.2C35 42.8 30.5 43.8 26.3 44C22.5 44.2 19 43.8 15.3 43L10.8 41.7L9.9 45.8L4.4 44.9L4 37.6L6.2 32.1L12.6 34.8C16.5 36.2 20.5 36.9 24.5 36.7C27.8 36.5 30.8 36 33.6 34.8C37 33.3 39.8 31 41.8 28.5C43.5 26.3 44.3 23.8 44.5 21.2C44.6 18.3 44 15.5 42.7 13C41.4 10.7 39.5 8.9 37.2 7.5C35.2 6.4 33 5.9 30.8 5.7Z" transform="translate(0 1)"/></g>
<path d="M28.1 2.9C33 2.5 36 3 39 3.9C43 5.5 46 7 48.2 9.3C51 12 53 15 53.6 18.4C54.3 22 54.3 25 53.6 28.5C52.5 31.5 50.5 34 48.2 35.8C45.5 38.3 42.5 40 39 41.2C35 42.8 30.5 43.8 26.3 44C22.5 44.2 19 43.8 15.3 43L10.8 41.7L9.9 45.8L4.4 44.9L4 37.6L6.2 32.1L12.6 34.8C16.5 36.2 20.5 36.9 24.5 36.7C27.8 36.5 30.8 36 33.6 34.8C37 33.3 39.8 31 41.8 28.5C43.5 26.3 44.3 23.8 44.5 21.2C44.6 18.3 44 15.5 42.7 13C41.4 10.7 39.5 8.9 37.2 7.5C35.2 6.4 33 5.9 30.8 5.7Z" fill="#f9e23a"/>
<g fill="url(#strp2)" stroke="url(#strp2)" stroke-width=".6"><path d="M10.8 19.3L28.1 9.8L30.8 13.9L27.2 16.6L59.1 36.7L55.5 44L46.3 38.5L24.5 24.8L19.9 23L15.3 25.7Z" transform="translate(0 4)"/><path d="M10.8 19.3L28.1 9.8L30.8 13.9L27.2 16.6L59.1 36.7L55.5 44L46.3 38.5L24.5 24.8L19.9 23L15.3 25.7Z" transform="translate(0 3)"/><path d="M10.8 19.3L28.1 9.8L30.8 13.9L27.2 16.6L59.1 36.7L55.5 44L46.3 38.5L24.5 24.8L19.9 23L15.3 25.7Z" transform="translate(0 2)"/><path d="M10.8 19.3L28.1 9.8L30.8 13.9L27.2 16.6L59.1 36.7L55.5 44L46.3 38.5L24.5 24.8L19.9 23L15.3 25.7Z" transform="translate(0 1)"/></g>
<path d="M10.8 19.3L28.1 9.8L30.8 13.9L27.2 16.6L59.1 36.7L55.5 44L46.3 38.5L24.5 24.8L19.9 23L15.3 25.7Z" fill="#f9e23a"/>
</svg>
<div class="a" style="left:125px;top:94px;font-size:27.9px;font-weight:bold;color:#000;line-height:36px;white-space:nowrap">“四诺”<span style="margin-left:16px">党员教育体系的构建</span></div>
<!-- left buttons -->
<div class="a lbtn" style="left:130px;top:168px;width:118px;height:55px;line-height:55px;color:#ff0000;font-size:20.5px">公开<b>承诺</b></div>
<div class="a lbtn" style="left:131px;top:238px;width:117px;height:32px;line-height:32px">履责<b>践诺</b></div>
<div class="a lbtn" style="left:133px;top:284px;width:115px;height:30px;line-height:30px">述责<b>应诺</b></div>
<div class="a lbtn" style="left:130px;top:332px;width:118px;height:26px;line-height:26px">民主<b>评诺</b></div>
<!-- text box -->
<div class="a tbox" style="left:330px;top:151px;width:377px;height:98px"></div>
<div class="a ttxt" style="left:338px;top:157px">学生党员制定<b>年度成长计划</b>，同时接受党总支<br>和党支部安排的工作任务，通过线上和线下<b>多</b><br><b>种途径公开</b>自己的承诺内容。</div>
<!-- image 1 -->
<div class="a" style="left:474px;top:271px;width:78px;height:130px;background:rgba(60,60,60,.35);filter:blur(4px)"></div>
<div class="a" style="left:331px;top:269px;width:216px;height:158px;background:#fff;border:2px solid #b00c18;box-shadow:0 1px 1px rgba(90,0,0,.5)"></div>
<div class="a" style="left:474px;top:271px;width:6px;height:125px;background:linear-gradient(90deg,#9c9c9c,#d0d0d0)"></div><svg class="a" style="left:332px;top:271px" width="142" height="125" viewBox="0 0 142 125"><rect width="142" height="125" fill="#bfb2ab"/><rect width="142" height="17" fill="#dcd8d4"/><path d="M0 8l16 3 0 4-16 2z" fill="#c03a2a"/><path d="M0 14l20 1v2H0z" fill="#e8c44a"/><text x="22" y="14" font-family="Liberation Sans,Noto Sans CJK SC,sans-serif" font-size="12.5" font-weight="bold" fill="#b4281e" letter-spacing="6.3">党员承诺墙</text><rect x="-1.3" y="20" width="11" height="19.8" fill="#dad9d5"/><rect x="0.7" y="23" width="5.7" height=".8" fill="#4a4a4a" opacity="0.6"/><rect x="0.7" y="24.6" width="5.6" height=".8" fill="#4a4a4a" opacity="0.5"/><rect x="0.7" y="26.5" width="4.4" height=".8" fill="#4a4a4a" opacity="0.5"/><rect x="0.7" y="28.3" width="6.5" height=".8" fill="#4a4a4a" opacity="0.5"/><rect x="0.7" y="30.1" width="6" height=".8" fill="#4a4a4a" opacity="0.8"/><rect x="0.7" y="32" width="5.3" height=".8" fill="#4a4a4a" opacity="0.8"/><rect x="0.7" y="33.6" width="6.6" height=".8" fill="#4a4a4a" opacity="0.6"/><rect x="0.7" y="35.3" width="4.5" height=".8" fill="#4a4a4a" opacity="0.6"/><rect x="0.7" y="37.4" width="4.7" height=".8" fill="#4a4a4a" opacity="0.7"/><rect x="0.2" y="42.2" width="11" height="24.6" fill="#dad9d5"/><rect x="2.2" y="45.2" width="5.9" height=".8" fill="#4a4a4a" opacity="0.6"/><rect x="2.2" y="47.1" width="6.4" height=".8" fill="#4a4a4a" opacity="0.6"/><rect x="2.2" y="49.3" width="5.2" height=".8" fill="#4a4a4a" opacity="0.5"/><rect x="2.2" y="51" width="6.4" height=".8" fill="#4a4a4a" opacity="0.5"/><rect x="2.2" y="52.8" width="5.6" height=".8" fill="#4a4a4a" opacity="0.6"/><rect x="2.2" y="54.6" width="5.9" height=".8" fill="#4a4a4a" opacity="0.5"/><rect x="2.2" y="56.6" width="4.7" height=".8" fill="#4a4a4a" opacity="0.6"/><rect x="2.2" y="58.7" width="5.4" height=".8" fill="#4a4a4a" opacity="0.8"/><rect x="2.2" y="60.4" width="5.8" height=".8" fill="#4a4a4a" opacity="0.8"/><rect x="2.2" y="62.4" width="5.2" height=".8" fill="#4a4a4a" opacity="0.6"/><rect x="2.2" y="64.3" width="6.4" height=".8" fill="#4a4a4a" opacity="0.5"/><rect x="-1.3" y="69" width="11" height="26.4" fill="#dad9d5"/><rect x="0.7" y="72" width="6.2" height=".8" fill="#4a4a4a" opacity="0.7"/><rect x="0.7" y="74.2" width="6.5" height=".8" fill="#4a4a4a" opacity="0.6"/><rect x="0.7" y="76" width="6.1" height=".8" fill="#4a4a4a" opacity="0.5"/><rect x="0.7" y="77.9" width="4.7" height=".8" fill="#4a4a4a" opacity="0.5"/><rect x="0.7" y="79.5" width="6.4" height=".8" fill="#4a4a4a" opacity="0.5"/><rect x="0.7" y="81.2" width="5.3" height=".8" fill="#4a4a4a" opacity="0.8"/><rect x="0.7" y="82.9" width="5.5" height=".8" fill="#4a4a4a" opacity="0.7"/><rect x="0.7" y="85" width="6.5" height=".8" fill="#4a4a4a" opacity="0.8"/><rect x="0.7" y="86.8" width="5.4" height=".8" fill="#4a4a4a" opacity="0.6"/><rect x="0.7" y="88.9" width="6.9" height=".8" fill="#4a4a4a" opacity="0.5"/><rect x="0.7" y="90.6" width="4.8" height=".8" fill="#4a4a4a" opacity="0.5"/><rect x="0.7" y="92.5" width="5.8" height=".8" fill="#4a4a4a" opacity="0.6"/><rect x="-0.5" y="97.9" width="11" height="22.4" fill="#d8d6d0"/><rect x="1.5" y="100.9" width="4.6" height=".8" fill="#4a4a4a" opacity="0.8"/><rect x="1.5" y="103" width="6" height=".8" fill="#4a4a4a" opacity="0.7"/><rect x="1.5" y="104.9" width="6.6" height=".8" fill="#4a4a4a" opacity="0.8"/><rect x="1.5" y="106.9" width="5.8" height=".8" fill="#4a4a4a" opacity="0.6"/><rect x="1.5" y="108.8" width="5.5" height=".8" fill="#4a4a4a" opacity="0.6"/><rect x="1.5" y="110.5" width="7" height=".8" fill="#4a4a4a" opacity="0.6"/><rect x="1.5" y="112.1" width="5.9" height=".8" fill="#4a4a4a" opacity="0.5"/><rect x="1.5" y="114.1" width="5.7" height=".8" fill="#4a4a4a" opacity="0.8"/><rect x="1.5" y="116" width="4.4" height=".8" fill="#4a4a4a" opacity="0.5"/><rect x="1.5" y="117.9" width="6" height=".8" fill="#4a4a4a" opacity="0.8"/><rect x="11.9" y="19.3" width="14" height="23.9" fill="#cbc9c3"/><rect x="13.9" y="22.3" width="7.2" height=".8" fill="#4a4a4a" opacity="0.5"/><rect x="13.9" y="24.4" width="9" height=".8" fill="#4a4a4a" opacity="0.6"/><rect x="13.9" y="26.4" width="8.1" height=".8" fill="#4a4a4a" opacity="0.5"/><rect x="13.9" y="28.6" width="7.4" height=".8" fill="#4a4a4a" opacity="0.7"/><rect x="13.9" y="30.7" width="9" height=".8" fill="#4a4a4a" opacity="0.6"/><rect x="13.9" y="32.7" width="6.4" height=".8" fill="#4a4a4a" opacity="0.8"/><rect x="13.9" y="34.6" width="9.6" height=".8" fill="#4a4a4a" opacity="0.6"/><rect x="13.9" y="36.4" width="8.2" height=".8" fill="#4a4a4a" opacity="0.7"/><rect x="13.9" y="38.3" width="8.5" height=".8" fill="#4a4a4a" opacity="0.8"/><rect x="13.9" y="40.4" width="6.8" height=".8" fill="#4a4a4a" opacity="0.5"/><rect x="11.6" y="46.7" width="14" height="20.4" fill="#cbc9c3"/><rect x="13.6" y="49.7" width="6.1" height=".8" fill="#4a4a4a" opacity="0.5"/><rect x="13.6" y="51.5" width="7" height=".8" fill="#4a4a4a" opacity="0.7"/><rect x="13.6" y="53.7" width="7.8" height=".8" fill="#4a4a4a" opacity="0.8"/><rect x="13.6" y="55.8" width="9.8" height=".8" fill="#4a4a4a" opacity="0.6"/><rect x="13.6" y="57.6" width="6.9" height=".8" fill="#4a4a4a" opacity="0.5"/><rect x="13.6" y="59.3" width="8.5" height=".8" fill="#4a4a4a" opacity="0.8"/><rect x="13.6" y="61.4" width="7.9" height=".8" fill="#4a4a4a" opacity="0.7"/><rect x="13.6" y="63.5" width="6.3" height=".8" fill="#4a4a4a" opacity="0.7"/><rect x="13.2" y="70.6" width="14" height="27" fill="#cbc9c3"/><rect x="15.2" y="73.6" width="7.7" height=".8" fill="#4a4a4a" opacity="0.7"/><rect x="15.2" y="75.2" width="9.8" height=".8" fill="#4a4a4a" opacity="0.7"/><rect x="15.2" y="77.1" width="9" height=".8" fill="#4a4a4a" opacity="0.5"/><rect x="15.2" y="78.8" width="10" height=".8" fill="#4a4a4a" opacity="0.5"/><rect x="15.2" y="80.7" width="7.9" height=".8" fill="#4a4a4a" opacity="0.7"/><rect x="15.2" y="82.7" width="8.4" height=".8" fill="#4a4a4a" opacity="0.6"/><rect x="15.2" y="84.9" width="6.6" height=".8" fill="#4a4a4a" opacity="0.7"/><rect x="15.2" y="86.5" width="9.2" height=".8" fill="#4a4a4a" opacity="0.7"/><rect x="15.2" y="88.1" width="9" height=".8" fill="#4a4a4a" opacity="0.5"/><rect x="15.2" y="90.3" width="6.8" height=".8" fill="#4a4a4a" opacity="0.8"/><rect x="15.2" y="92" width="6.9" height=".8" fill="#4a4a4a" opacity="0.7"/><rect x="15.2" y="94" width="7.3" height=".8" fill="#4a4a4a" opacity="0.7"/><rect x="12.5" y="99.2" width="14" height="25.8" fill="#cbc9c3"/><rect x="14.5" y="102.2" width="9.3" height=".8" fill="#4a4a4a" opacity="0.7"/><rect x="14.5" y="104.3" width="9.5" height=".8" fill="#4a4a4a" opacity="0.5"/><rect x="14.5" y="106" width="8" height=".8" fill="#4a4a4a" opacity="0.8"/><rect x="14.5" y="108.1" width="8.4" height=".8" fill="#4a4a4a" opacity="0.8"/><rect x="14.5" y="109.8" width="6.6" height=".8" fill="#4a4a4a" opacity="0.7"/><rect x="14.5" y="111.4" width="6.2" height=".8" fill="#4a4a4a" opacity="0.7"/><rect x="14.5" y="113.4" width="7.9" height=".8" fill="#4a4a4a" opacity="0.8"/><rect x="14.5" y="115.5" width="6.2" height=".8" fill="#4a4a4a" opacity="0.5"/><rect x="14.5" y="117.1" width="6.4" height=".8" fill="#4a4a4a" opacity="0.6"/><rect x="14.5" y="118.7" width="9.6" height=".8" fill="#4a4a4a" opacity="0.5"/><rect x="14.5" y="120.5" width="9.9" height=".8" fill="#4a4a4a" opacity="0.7"/><rect x="14.5" y="122.2" width="7.1" height=".8" fill="#4a4a4a" opacity="0.7"/><rect x="33.3" y="19.7" width="18" height="24.3" fill="#e3e2de"/><rect x="35.3" y="22.7" width="13.4" height=".8" fill="#4a4a4a" opacity="0.5"/><rect x="35.3" y="24.6" width="10.7" height=".8" fill="#4a4a4a" opacity="0.6"/><rect x="35.3" y="26.4" width="12.2" height=".8" fill="#4a4a4a" opacity="0.6"/><rect x="35.3" y="28.1" width="10.1" height=".8" fill="#4a4a4a" opacity="0.5"/><rect x="35.3" y="30.2" width="13.7" height=".8" fill="#4a4a4a" opacity="0.7"/><rect x="35.3" y="32" width="9.8" height=".8" fill="#4a4a4a" opacity="0.5"/><rect x="35.3" y="33.9" width="12.6" height=".8" fill="#4a4a4a" opacity="0.5"/><rect x="35.3" y="36" width="9.3" height=".8" fill="#4a4a4a" opacity="0.7"/><rect x="35.3" y="37.8" width="12.4" height=".8" fill="#4a4a4a" opacity="0.8"/><rect x="35.3" y="39.6" width="10.8" height=".8" fill="#4a4a4a" opacity="0.6"/><rect x="35.3" y="41.3" width="10.4" height=".8" fill="#4a4a4a" opacity="0.6"/><rect x="32.4" y="47.3" width="18" height="22.6" fill="#e6dfb4"/><rect x="34.4" y="50.3" width="11.3" height=".8" fill="#4a4a4a" opacity="0.5"/><rect x="34.4" y="52.5" width="12.8" height=".8" fill="#4a4a4a" opacity="0.8"/><rect x="34.4" y="54.1" width="9.9" height=".8" fill="#4a4a4a" opacity="0.5"/><rect x="34.4" y="56.2" width="9.9" height=".8" fill="#4a4a4a" opacity="0.5"/><rect x="34.4" y="58.1" width="13.5" height=".8" fill="#4a4a4a" opacity="0.8"/><rect x="34.4" y="59.8" width="9.2" height=".8" fill="#4a4a4a" opacity="0.8"/><rect x="34.4" y="61.8" width="12.3" height=".8" fill="#4a4a4a" opacity="0.5"/><rect x="34.4" y="63.4" width="12.3" height=".8" fill="#4a4a4a" opacity="0.6"/><rect x="34.4" y="65" width="13.7" height=".8" fill="#4a4a4a" opacity="0.7"/><rect x="34.4" y="67.1" width="8.9" height=".8" fill="#4a4a4a" opacity="0.8"/><rect x="33.5" y="73.5" width="18" height="23.4" fill="#e3e2de"/><rect x="35.5" y="76.5" width="10.7" height=".8" fill="#4a4a4a" opacity="0.8"/><rect x="35.5" y="78.5" width="8.6" height=".8" fill="#4a4a4a" opacity="0.7"/><rect x="35.5" y="80.7" width="13.8" height=".8" fill="#4a4a4a" opacity="0.6"/><rect x="35.5" y="82.4" width="13.6" height=".8" fill="#4a4a4a" opacity="0.7"/><rect x="35.5" y="84.3" width="9.6" height=".8" fill="#4a4a4a" opacity="0.6"/><rect x="35.5" y="86.3" width="9.9" height=".8" fill="#4a4a4a" opacity="0.8"/><rect x="35.5" y="88.5" width="8.6" height=".8" fill="#4a4a4a" opacity="0.5"/><rect x="35.5" y="90.4" width="13.9" height=".8" fill="#4a4a4a" opacity="0.7"/><rect x="35.5" y="92.2" width="10.9" height=".8" fill="#4a4a4a" opacity="0.7"/><rect x="35.5" y="94.2" width="12.1" height=".8" fill="#4a4a4a" opacity="0.7"/><rect x="33.4" y="100.9" width="18" height="21.7" fill="#d2d1cd"/><rect x="35.4" y="103.9" width="10.3" height=".8" fill="#4a4a4a" opacity="0.8"/><rect x="35.4" y="105.9" width="12" height=".8" fill="#4a4a4a" opacity="0.6"/><rect x="35.4" y="107.8" width="8.7" height=".8" fill="#4a4a4a" opacity="0.5"/><rect x="35.4" y="109.4" width="12.5" height=".8" fill="#4a4a4a" opacity="0.6"/><rect x="35.4" y="111.1" width="8.9" height=".8" fill="#4a4a4a" opacity="0.8"/><rect x="35.4" y="113.2" width="12.2" height=".8" fill="#4a4a4a" opacity="0.6"/><rect x="35.4" y="115" width="10" height=".8" fill="#4a4a4a" opacity="0.6"/><rect x="35.4" y="116.7" width="10.9" height=".8" fill="#4a4a4a" opacity="0.6"/><rect x="35.4" y="118.8" width="13.8" height=".8" fill="#4a4a4a" opacity="0.7"/><rect x="35.4" y="120.6" width="13.8" height=".8" fill="#4a4a4a" opacity="0.6"/><rect x="52.5" y="20.1" width="16" height="23.7" fill="#d8d6d0"/><rect x="54.5" y="23.1" width="8.4" height=".8" fill="#4a4a4a" opacity="0.8"/><rect x="54.5" y="24.8" width="11.1" height=".8" fill="#4a4a4a" opacity="0.5"/><rect x="54.5" y="26.8" width="9.1" height=".8" fill="#4a4a4a" opacity="0.6"/><rect x="54.5" y="28.7" width="7.6" height=".8" fill="#4a4a4a" opacity="0.8"/><rect x="54.5" y="30.8" width="7.9" height=".8" fill="#4a4a4a" opacity="0.8"/><rect x="54.5" y="32.9" width="10.1" height=".8" fill="#4a4a4a" opacity="0.8"/><rect x="54.5" y="34.9" width="9.6" height=".8" fill="#4a4a4a" opacity="0.6"/><rect x="54.5" y="36.9" width="7.9" height=".8" fill="#4a4a4a" opacity="0.8"/><rect x="54.5" y="38.9" width="9.7" height=".8" fill="#4a4a4a" opacity="0.6"/><rect x="54.5" y="41" width="9.6" height=".8" fill="#4a4a4a" opacity="0.8"/><rect x="53" y="46.8" width="16" height="27.8" fill="#dad9d5"/><rect x="55" y="49.8" width="10" height=".8" fill="#4a4a4a" opacity="0.8"/><rect x="55" y="51.8" width="10.5" height=".8" fill="#4a4a4a" opacity="0.5"/><rect x="55" y="53.4" width="7.8" height=".8" fill="#4a4a4a" opacity="0.6"/><rect x="55" y="55.1" width="11.2" height=".8" fill="#4a4a4a" opacity="0.7"/><rect x="55" y="57" width="10.2" height=".8" fill="#4a4a4a" opacity="0.7"/><rect x="55" y="58.9" width="7.2" height=".8" fill="#4a4a4a" opacity="0.8"/><rect x="55" y="61" width="9.6" height=".8" fill="#4a4a4a" opacity="0.7"/><rect x="55" y="63" width="7.5" height=".8" fill="#4a4a4a" opacity="0.7"/><rect x="55" y="64.7" width="7.6" height=".8" fill="#4a4a4a" opacity="0.6"/><rect x="55" y="66.8" width="8.2" height=".8" fill="#4a4a4a" opacity="0.7"/><rect x="55" y="68.9" width="9.6" height=".8" fill="#4a4a4a" opacity="0.6"/><rect x="55" y="70.8" width="10.5" height=".8" fill="#4a4a4a" opacity="0.8"/><rect x="51.5" y="77.6" width="16" height="18.9" fill="#d2d1cd"/><rect x="53.5" y="80.6" width="10.3" height=".8" fill="#4a4a4a" opacity="0.7"/><rect x="53.5" y="82.6" width="7.8" height=".8" fill="#4a4a4a" opacity="0.6"/><rect x="53.5" y="84.5" width="11.9" height=".8" fill="#4a4a4a" opacity="0.5"/><rect x="53.5" y="86.2" width="9.6" height=".8" fill="#4a4a4a" opacity="0.7"/><rect x="53.5" y="88" width="9.4" height=".8" fill="#4a4a4a" opacity="0.8"/><rect x="53.5" y="90.2" width="9.8" height=".8" fill="#4a4a4a" opacity="0.6"/><rect x="53.5" y="91.8" width="9.5" height=".8" fill="#4a4a4a" opacity="0.6"/><rect x="53.5" y="93.5" width="9.6" height=".8" fill="#4a4a4a" opacity="0.8"/><rect x="50.7" y="99" width="16" height="26" fill="#d2d1cd"/><rect x="52.7" y="102" width="7.6" height=".8" fill="#4a4a4a" opacity="0.7"/><rect x="52.7" y="103.8" width="8.9" height=".8" fill="#4a4a4a" opacity="0.7"/><rect x="52.7" y="105.8" width="8.5" height=".8" fill="#4a4a4a" opacity="0.5"/><rect x="52.7" y="107.6" width="9.6" height=".8" fill="#4a4a4a" opacity="0.8"/><rect x="52.7" y="109.4" width="8" height=".8" fill="#4a4a4a" opacity="0.8"/><rect x="52.7" y="111.4" width="9.1" height=".8" fill="#4a4a4a" opacity="0.7"/><rect x="52.7" y="113.3" width="9" height=".8" fill="#4a4a4a" opacity="0.5"/><rect x="52.7" y="115.1" width="8.8" height=".8" fill="#4a4a4a" opacity="0.6"/><rect x="52.7" y="116.9" width="11.7" height=".8" fill="#4a4a4a" opacity="0.5"/><rect x="52.7" y="118.5" width="10.8" height=".8" fill="#4a4a4a" opacity="0.6"/><rect x="52.7" y="120.2" width="9.1" height=".8" fill="#4a4a4a" opacity="0.8"/><rect x="52.7" y="121.8" width="11.6" height=".8" fill="#4a4a4a" opacity="0.8"/><rect x="71.2" y="19.2" width="18" height="25.9" fill="#d2d1cd"/><rect x="73.2" y="22.2" width="9.9" height=".8" fill="#4a4a4a" opacity="0.7"/><rect x="73.2" y="23.9" width="10.5" height=".8" fill="#4a4a4a" opacity="0.8"/><rect x="73.2" y="26" width="12.9" height=".8" fill="#4a4a4a" opacity="0.7"/><rect x="73.2" y="28.1" width="13.7" height=".8" fill="#4a4a4a" opacity="0.7"/><rect x="73.2" y="30.2" width="8.7" height=".8" fill="#4a4a4a" opacity="0.7"/><rect x="73.2" y="32" width="12.6" height=".8" fill="#4a4a4a" opacity="0.7"/><rect x="73.2" y="33.8" width="8.7" height=".8" fill="#4a4a4a" opacity="0.8"/><rect x="73.2" y="35.5" width="11" height=".8" fill="#4a4a4a" opacity="0.6"/><rect x="73.2" y="37.3" width="12.5" height=".8" fill="#4a4a4a" opacity="0.8"/><rect x="73.2" y="39" width="12.1" height=".8" fill="#4a4a4a" opacity="0.6"/><rect x="73.2" y="41" width="10.6" height=".8" fill="#4a4a4a" opacity="0.5"/><rect x="73.2" y="42.7" width="9.6" height=".8" fill="#4a4a4a" opacity="0.8"/><rect x="71.8" y="47.1" width="18" height="28.9" fill="#cbc9c3"/><rect x="73.8" y="50.1" width="11.5" height=".8" fill="#4a4a4a" opacity="0.5"/><rect x="73.8" y="51.9" width="11.5" height=".8" fill="#4a4a4a" opacity="0.6"/><rect x="73.8" y="53.7" width="12.9" height=".8" fill="#4a4a4a" opacity="0.5"/><rect x="73.8" y="55.3" width="13.3" height=".8" fill="#4a4a4a" opacity="0.6"/><rect x="73.8" y="57.3" width="9.6" height=".8" fill="#4a4a4a" opacity="0.6"/><rect x="73.8" y="59.4" width="11.2" height=".8" fill="#4a4a4a" opacity="0.7"/><rect x="73.8" y="61.2" width="12.2" height=".8" fill="#4a4a4a" opacity="0.7"/><rect x="73.8" y="63.3" width="13.2" height=".8" fill="#4a4a4a" opacity="0.5"/><rect x="73.8" y="65.4" width="10.6" height=".8" fill="#4a4a4a" opacity="0.7"/><rect x="73.8" y="67.3" width="10.1" height=".8" fill="#4a4a4a" opacity="0.8"/><rect x="73.8" y="69.5" width="9.1" height=".8" fill="#4a4a4a" opacity="0.6"/><rect x="73.8" y="71.5" width="12.9" height=".8" fill="#4a4a4a" opacity="0.8"/><rect x="73.8" y="73.4" width="8.8" height=".8" fill="#4a4a4a" opacity="0.8"/><rect x="71.2" y="78.8" width="18" height="23.6" fill="#cbc9c3"/><rect x="73.2" y="81.8" width="9" height=".8" fill="#4a4a4a" opacity="0.5"/><rect x="73.2" y="83.8" width="12.2" height=".8" fill="#4a4a4a" opacity="0.8"/><rect x="73.2" y="85.8" width="12" height=".8" fill="#4a4a4a" opacity="0.8"/><rect x="73.2" y="87.7" width="11.5" height=".8" fill="#4a4a4a" opacity="0.5"/><rect x="73.2" y="89.7" width="9.7" height=".8" fill="#4a4a4a" opacity="0.8"/><rect x="73.2" y="91.7" width="10.1" height=".8" fill="#4a4a4a" opacity="0.5"/><rect x="73.2" y="93.5" width="12" height=".8" fill="#4a4a4a" opacity="0.7"/><rect x="73.2" y="95.1" width="8.8" height=".8" fill="#4a4a4a" opacity="0.7"/><rect x="73.2" y="97.1" width="10.6" height=".8" fill="#4a4a4a" opacity="0.5"/><rect x="73.2" y="99" width="8.5" height=".8" fill="#4a4a4a" opacity="0.6"/><rect x="71.9" y="106.4" width="18" height="18.6" fill="#d2d1cd"/><rect x="73.9" y="109.4" width="9.7" height=".8" fill="#4a4a4a" opacity="0.5"/><rect x="73.9" y="111.5" width="12.3" height=".8" fill="#4a4a4a" opacity="0.6"/><rect x="73.9" y="113.1" width="11.2" height=".8" fill="#4a4a4a" opacity="0.7"/><rect x="73.9" y="115" width="9.8" height=".8" fill="#4a4a4a" opacity="0.7"/><rect x="73.9" y="117.2" width="9.7" height=".8" fill="#4a4a4a" opacity="0.5"/><rect x="73.9" y="119" width="10.8" height=".8" fill="#4a4a4a" opacity="0.7"/><rect x="73.9" y="120.7" width="12.9" height=".8" fill="#4a4a4a" opacity="0.7"/><rect x="73.9" y="122.6" width="9.5" height=".8" fill="#4a4a4a" opacity="0.8"/><rect x="96.8" y="19.7" width="18" height="20.7" fill="#e3e2de"/><rect x="98.8" y="22.7" width="11.9" height=".8" fill="#4a4a4a" opacity="0.7"/><rect x="98.8" y="24.8" width="11.1" height=".8" fill="#4a4a4a" opacity="0.8"/><rect x="98.8" y="26.5" width="11.7" height=".8" fill="#4a4a4a" opacity="0.8"/><rect x="98.8" y="28.1" width="8.5" height=".8" fill="#4a4a4a" opacity="0.7"/><rect x="98.8" y="29.9" width="12.4" height=".8" fill="#4a4a4a" opacity="0.5"/><rect x="98.8" y="31.8" width="12.4" height=".8" fill="#4a4a4a" opacity="0.6"/><rect x="98.8" y="33.5" width="8.8" height=".8" fill="#4a4a4a" opacity="0.5"/><rect x="98.8" y="35.2" width="12.1" height=".8" fill="#4a4a4a" opacity="0.7"/><rect x="98.8" y="37.1" width="10.1" height=".8" fill="#4a4a4a" opacity="0.7"/><rect x="96.5" y="44.3" width="18" height="23.3" fill="#dad9d5"/><rect x="98.5" y="47.3" width="10" height=".8" fill="#4a4a4a" opacity="0.6"/><rect x="98.5" y="49.5" width="9.1" height=".8" fill="#4a4a4a" opacity="0.8"/><rect x="98.5" y="51.2" width="10.4" height=".8" fill="#4a4a4a" opacity="0.8"/><rect x="98.5" y="53.3" width="10.8" height=".8" fill="#4a4a4a" opacity="0.5"/><rect x="98.5" y="55.2" width="10.5" height=".8" fill="#4a4a4a" opacity="0.8"/><rect x="98.5" y="56.9" width="10.4" height=".8" fill="#4a4a4a" opacity="0.8"/><rect x="98.5" y="58.5" width="10.7" height=".8" fill="#4a4a4a" opacity="0.8"/><rect x="98.5" y="60.6" width="8.6" height=".8" fill="#4a4a4a" opacity="0.5"/><rect x="98.5" y="62.2" width="13.6" height=".8" fill="#4a4a4a" opacity="0.6"/><rect x="98.5" y="64.3" width="13.4" height=".8" fill="#4a4a4a" opacity="0.6"/><rect x="98.7" y="71.5" width="18" height="25.4" fill="#e3e2de"/><rect x="100.7" y="74.5" width="12.3" height=".8" fill="#4a4a4a" opacity="0.8"/><rect x="100.7" y="76.3" width="12.4" height=".8" fill="#4a4a4a" opacity="0.7"/><rect x="100.7" y="78.4" width="13.7" height=".8" fill="#4a4a4a" opacity="0.5"/><rect x="100.7" y="80.5" width="9" height=".8" fill="#4a4a4a" opacity="0.7"/><rect x="100.7" y="82.4" width="12.7" height=".8" fill="#4a4a4a" opacity="0.8"/><rect x="100.7" y="84.5" width="13" height=".8" fill="#4a4a4a" opacity="0.5"/><rect x="100.7" y="86.4" width="8.4" height=".8" fill="#4a4a4a" opacity="0.8"/><rect x="100.7" y="88.2" width="12.3" height=".8" fill="#4a4a4a" opacity="0.5"/><rect x="100.7" y="89.9" width="13.2" height=".8" fill="#4a4a4a" opacity="0.6"/><rect x="100.7" y="92" width="11.7" height=".8" fill="#4a4a4a" opacity="0.7"/><rect x="100.7" y="93.8" width="9.3" height=".8" fill="#4a4a4a" opacity="0.6"/><rect x="99.4" y="99.6" width="18" height="24.5" fill="#d2d1cd"/><rect x="101.4" y="102.6" width="13.3" height=".8" fill="#4a4a4a" opacity="0.8"/><rect x="101.4" y="104.4" width="8.9" height=".8" fill="#4a4a4a" opacity="0.5"/><rect x="101.4" y="106.3" width="12.4" height=".8" fill="#4a4a4a" opacity="0.6"/><rect x="101.4" y="108" width="10.7" height=".8" fill="#4a4a4a" opacity="0.7"/><rect x="101.4" y="110" width="12.6" height=".8" fill="#4a4a4a" opacity="0.8"/><rect x="101.4" y="112" width="9.1" height=".8" fill="#4a4a4a" opacity="0.8"/><rect x="101.4" y="113.8" width="11.6" height=".8" fill="#4a4a4a" opacity="0.6"/><rect x="101.4" y="115.8" width="9.5" height=".8" fill="#4a4a4a" opacity="0.5"/><rect x="101.4" y="117.6" width="9.3" height=".8" fill="#4a4a4a" opacity="0.8"/><rect x="101.4" y="119.5" width="10.2" height=".8" fill="#4a4a4a" opacity="0.6"/><rect x="101.4" y="121.7" width="11.2" height=".8" fill="#4a4a4a" opacity="0.5"/><rect x="120.1" y="22" width="19" height="19.2" fill="#cbc9c3"/><rect x="122.1" y="25" width="10.4" height=".8" fill="#4a4a4a" opacity="0.6"/><rect x="122.1" y="26.8" width="14.3" height=".8" fill="#4a4a4a" opacity="0.5"/><rect x="122.1" y="28.4" width="12.6" height=".8" fill="#4a4a4a" opacity="0.8"/><rect x="122.1" y="30.1" width="9.5" height=".8" fill="#4a4a4a" opacity="0.7"/><rect x="122.1" y="31.9" width="12.6" height=".8" fill="#4a4a4a" opacity="0.8"/><rect x="122.1" y="33.8" width="9" height=".8" fill="#4a4a4a" opacity="0.7"/><rect x="122.1" y="35.9" width="11.1" height=".8" fill="#4a4a4a" opacity="0.5"/><rect x="122.1" y="37.7" width="9.3" height=".8" fill="#4a4a4a" opacity="0.8"/><rect x="120" y="44.5" width="19" height="29" fill="#dad9d5"/><rect x="122" y="47.5" width="11.5" height=".8" fill="#4a4a4a" opacity="0.6"/><rect x="122" y="49.5" width="9.5" height=".8" fill="#4a4a4a" opacity="0.5"/><rect x="122" y="51.4" width="11.9" height=".8" fill="#4a4a4a" opacity="0.6"/><rect x="122" y="53.5" width="13" height=".8" fill="#4a4a4a" opacity="0.5"/><rect x="122" y="55.4" width="12.9" height=".8" fill="#4a4a4a" opacity="0.6"/><rect x="122" y="57.2" width="14.9" height=".8" fill="#4a4a4a" opacity="0.7"/><rect x="122" y="59" width="9.3" height=".8" fill="#4a4a4a" opacity="0.7"/><rect x="122" y="61.1" width="11.5" height=".8" fill="#4a4a4a" opacity="0.5"/><rect x="122" y="63.2" width="13.8" height=".8" fill="#4a4a4a" opacity="0.7"/><rect x="122" y="65" width="11.4" height=".8" fill="#4a4a4a" opacity="0.8"/><rect x="122" y="66.9" width="9.9" height=".8" fill="#4a4a4a" opacity="0.5"/><rect x="122" y="68.6" width="12.5" height=".8" fill="#4a4a4a" opacity="0.6"/><rect x="122" y="70.6" width="9.8" height=".8" fill="#4a4a4a" opacity="0.5"/><rect x="119.4" y="77" width="19" height="22.8" fill="#d8d6d0"/><rect x="121.4" y="80" width="11.2" height=".8" fill="#4a4a4a" opacity="0.7"/><rect x="121.4" y="81.7" width="10.7" height=".8" fill="#4a4a4a" opacity="0.7"/><rect x="121.4" y="83.9" width="9.7" height=".8" fill="#4a4a4a" opacity="0.6"/><rect x="121.4" y="85.9" width="14.8" height=".8" fill="#4a4a4a" opacity="0.5"/><rect x="121.4" y="87.6" width="14.7" height=".8" fill="#4a4a4a" opacity="0.8"/><rect x="121.4" y="89.5" width="9.3" height=".8" fill="#4a4a4a" opacity="0.8"/><rect x="121.4" y="91.3" width="14.4" height=".8" fill="#4a4a4a" opacity="0.7"/><rect x="121.4" y="93.4" width="10" height=".8" fill="#4a4a4a" opacity="0.8"/><rect x="121.4" y="95.2" width="11.4" height=".8" fill="#4a4a4a" opacity="0.8"/><rect x="121.4" y="97.3" width="10.1" height=".8" fill="#4a4a4a" opacity="0.5"/><rect x="117.9" y="102.6" width="19" height="22.4" fill="#dad9d5"/><rect x="119.9" y="105.6" width="14.8" height=".8" fill="#4a4a4a" opacity="0.8"/><rect x="119.9" y="107.3" width="14.3" height=".8" fill="#4a4a4a" opacity="0.8"/><rect x="119.9" y="109.3" width="13" height=".8" fill="#4a4a4a" opacity="0.6"/><rect x="119.9" y="111.1" width="11.7" height=".8" fill="#4a4a4a" opacity="0.8"/><rect x="119.9" y="113.2" width="12.9" height=".8" fill="#4a4a4a" opacity="0.6"/><rect x="119.9" y="114.9" width="11.3" height=".8" fill="#4a4a4a" opacity="0.6"/><rect x="119.9" y="116.8" width="10.1" height=".8" fill="#4a4a4a" opacity="0.5"/><rect x="119.9" y="119" width="11.8" height=".8" fill="#4a4a4a" opacity="0.6"/><rect x="119.9" y="121" width="13.9" height=".8" fill="#4a4a4a" opacity="0.8"/><rect x="140" y="0" width="2" height="125" fill="#aaa" opacity=".6"/></svg><svg class="a" style="left:480px;top:271px" width="68" height="126" viewBox="0 0 68 126"><rect width="68" height="126" fill="#aaa398"/><rect width="68" height="4" fill="#cfc8be"/><rect x="1" y="6.4" width="8.6" height="25.7" fill="#cfc9d1"/><rect x="2.5" y="9.4" width="4.1" height=".7" fill="#4a4a4a" opacity="0.6"/><rect x="2.5" y="11.4" width="5" height=".7" fill="#4a4a4a" opacity="0.5"/><rect x="2.5" y="13.6" width="3.3" height=".7" fill="#4a4a4a" opacity="0.5"/><rect x="2.5" y="15.5" width="4.3" height=".7" fill="#4a4a4a" opacity="0.7"/><rect x="2.5" y="17.7" width="4.5" height=".7" fill="#4a4a4a" opacity="0.5"/><rect x="2.5" y="19.9" width="4.9" height=".7" fill="#4a4a4a" opacity="0.6"/><rect x="2.5" y="22.1" width="5.1" height=".7" fill="#4a4a4a" opacity="0.3"/><rect x="2.5" y="23.9" width="5.2" height=".7" fill="#4a4a4a" opacity="0.5"/><rect x="2.5" y="26.3" width="3.7" height=".7" fill="#4a4a4a" opacity="0.5"/><rect x="2.5" y="28.2" width="3.4" height=".7" fill="#4a4a4a" opacity="0.4"/><rect x="11.3" y="7" width="9.3" height="24" fill="#c8c2bd"/><rect x="12.8" y="10" width="5.8" height=".7" fill="#4a4a4a" opacity="0.6"/><rect x="12.8" y="12" width="3.9" height=".7" fill="#4a4a4a" opacity="0.4"/><rect x="12.8" y="13.9" width="5.6" height=".7" fill="#4a4a4a" opacity="0.5"/><rect x="12.8" y="16.3" width="4.4" height=".7" fill="#4a4a4a" opacity="0.7"/><rect x="12.8" y="18.6" width="3.1" height=".7" fill="#4a4a4a" opacity="0.4"/><rect x="12.8" y="21.1" width="4.6" height=".7" fill="#4a4a4a" opacity="0.7"/><rect x="12.8" y="23.2" width="3.4" height=".7" fill="#4a4a4a" opacity="0.6"/><rect x="12.8" y="25.5" width="4" height=".7" fill="#4a4a4a" opacity="0.3"/><rect x="12.8" y="27.5" width="6.2" height=".7" fill="#4a4a4a" opacity="0.6"/><rect x="22.5" y="4.9" width="7.4" height="28.7" fill="#d2cec5"/><rect x="24" y="7.9" width="3.7" height=".7" fill="#4a4a4a" opacity="0.4"/><rect x="24" y="10" width="4.3" height=".7" fill="#4a4a4a" opacity="0.6"/><rect x="24" y="12.1" width="3" height=".7" fill="#4a4a4a" opacity="0.5"/><rect x="24" y="14.6" width="2.2" height=".7" fill="#4a4a4a" opacity="0.6"/><rect x="24" y="17.1" width="3.5" height=".7" fill="#4a4a4a" opacity="0.7"/><rect x="24" y="18.9" width="2.6" height=".7" fill="#4a4a4a" opacity="0.7"/><rect x="24" y="21.1" width="3.4" height=".7" fill="#4a4a4a" opacity="0.3"/><rect x="24" y="23" width="3.1" height=".7" fill="#4a4a4a" opacity="0.3"/><rect x="24" y="25.2" width="4" height=".7" fill="#4a4a4a" opacity="0.5"/><rect x="24" y="27.1" width="2.6" height=".7" fill="#4a4a4a" opacity="0.6"/><rect x="24" y="28.9" width="3" height=".7" fill="#4a4a4a" opacity="0.5"/><rect x="32.6" y="6.5" width="9.9" height="28.6" fill="#cbc7bf"/><rect x="34.1" y="9.5" width="4" height=".7" fill="#4a4a4a" opacity="0.7"/><rect x="34.1" y="11.8" width="4.3" height=".7" fill="#4a4a4a" opacity="0.4"/><rect x="34.1" y="14.2" width="6.7" height=".7" fill="#4a4a4a" opacity="0.4"/><rect x="34.1" y="16.6" width="6.5" height=".7" fill="#4a4a4a" opacity="0.5"/><rect x="34.1" y="18.7" width="3.8" height=".7" fill="#4a4a4a" opacity="0.3"/><rect x="34.1" y="21.2" width="4.3" height=".7" fill="#4a4a4a" opacity="0.6"/><rect x="34.1" y="23.2" width="6.3" height=".7" fill="#4a4a4a" opacity="0.5"/><rect x="34.1" y="25.2" width="4.1" height=".7" fill="#4a4a4a" opacity="0.6"/><rect x="34.1" y="27" width="4.2" height=".7" fill="#4a4a4a" opacity="0.5"/><rect x="34.1" y="29.4" width="5.6" height=".7" fill="#4a4a4a" opacity="0.4"/><rect x="34.1" y="31.9" width="4.2" height=".7" fill="#4a4a4a" opacity="0.3"/><rect x="44.9" y="4.1" width="7.2" height="29.2" fill="#cbc7bf"/><rect x="46.4" y="7.1" width="4.2" height=".7" fill="#4a4a4a" opacity="0.3"/><rect x="46.4" y="9" width="3.1" height=".7" fill="#4a4a4a" opacity="0.4"/><rect x="46.4" y="11.3" width="3.2" height=".7" fill="#4a4a4a" opacity="0.7"/><rect x="46.4" y="13.6" width="4.1" height=".7" fill="#4a4a4a" opacity="0.5"/><rect x="46.4" y="15.6" width="2.8" height=".7" fill="#4a4a4a" opacity="0.3"/><rect x="46.4" y="17.8" width="2.3" height=".7" fill="#4a4a4a" opacity="0.3"/><rect x="46.4" y="19.8" width="2.4" height=".7" fill="#4a4a4a" opacity="0.3"/><rect x="46.4" y="22" width="2.9" height=".7" fill="#4a4a4a" opacity="0.3"/><rect x="46.4" y="24.4" width="3.7" height=".7" fill="#4a4a4a" opacity="0.4"/><rect x="46.4" y="26.9" width="2.8" height=".7" fill="#4a4a4a" opacity="0.3"/><rect x="46.4" y="29" width="2.3" height=".7" fill="#4a4a4a" opacity="0.6"/><rect x="53.6" y="5.5" width="8.7" height="28.6" fill="#d2cec5"/><rect x="55.1" y="8.5" width="4.5" height=".7" fill="#4a4a4a" opacity="0.5"/><rect x="55.1" y="10.4" width="4.7" height=".7" fill="#4a4a4a" opacity="0.7"/><rect x="55.1" y="12.8" width="5" height=".7" fill="#4a4a4a" opacity="0.5"/><rect x="55.1" y="15.1" width="4.5" height=".7" fill="#4a4a4a" opacity="0.5"/><rect x="55.1" y="17.5" width="3.1" height=".7" fill="#4a4a4a" opacity="0.6"/><rect x="55.1" y="19.3" width="4.6" height=".7" fill="#4a4a4a" opacity="0.5"/><rect x="55.1" y="21.3" width="4.9" height=".7" fill="#4a4a4a" opacity="0.5"/><rect x="55.1" y="23.5" width="5.5" height=".7" fill="#4a4a4a" opacity="0.4"/><rect x="55.1" y="25.3" width="3.7" height=".7" fill="#4a4a4a" opacity="0.6"/><rect x="55.1" y="27.2" width="3.4" height=".7" fill="#4a4a4a" opacity="0.7"/><rect x="55.1" y="29.5" width="4.1" height=".7" fill="#4a4a4a" opacity="0.7"/><rect x="1" y="43.2" width="7.7" height="29" fill="#c8c2bd"/><rect x="2.5" y="46.2" width="2.8" height=".7" fill="#4a4a4a" opacity="0.4"/><rect x="2.5" y="48.2" width="4.5" height=".7" fill="#4a4a4a" opacity="0.4"/><rect x="2.5" y="50.1" width="3.2" height=".7" fill="#4a4a4a" opacity="0.7"/><rect x="2.5" y="51.9" width="2.5" height=".7" fill="#4a4a4a" opacity="0.7"/><rect x="2.5" y="54.3" width="2.6" height=".7" fill="#4a4a4a" opacity="0.5"/><rect x="2.5" y="56.7" width="4.3" height=".7" fill="#4a4a4a" opacity="0.5"/><rect x="2.5" y="58.9" width="3.9" height=".7" fill="#4a4a4a" opacity="0.6"/><rect x="2.5" y="61.3" width="3.8" height=".7" fill="#4a4a4a" opacity="0.4"/><rect x="2.5" y="63.6" width="3" height=".7" fill="#4a4a4a" opacity="0.5"/><rect x="2.5" y="65.9" width="3" height=".7" fill="#4a4a4a" opacity="0.4"/><rect x="2.5" y="68.2" width="3.7" height=".7" fill="#4a4a4a" opacity="0.6"/><rect x="10.6" y="40.9" width="9.7" height="34.3" fill="#d9d5cd"/><rect x="12.1" y="43.9" width="3.5" height=".7" fill="#4a4a4a" opacity="0.6"/><rect x="12.1" y="46.1" width="5.5" height=".7" fill="#4a4a4a" opacity="0.6"/><rect x="12.1" y="48.4" width="6.6" height=".7" fill="#4a4a4a" opacity="0.6"/><rect x="12.1" y="50.4" width="4.9" height=".7" fill="#4a4a4a" opacity="0.4"/><rect x="12.1" y="52.2" width="4.9" height=".7" fill="#4a4a4a" opacity="0.6"/><rect x="12.1" y="54.1" width="4.3" height=".7" fill="#4a4a4a" opacity="0.4"/><rect x="12.1" y="56.4" width="5.1" height=".7" fill="#4a4a4a" opacity="0.5"/><rect x="12.1" y="58.7" width="4.7" height=".7" fill="#4a4a4a" opacity="0.6"/><rect x="12.1" y="61.2" width="3.6" height=".7" fill="#4a4a4a" opacity="0.7"/><rect x="12.1" y="63.5" width="3.8" height=".7" fill="#4a4a4a" opacity="0.5"/><rect x="12.1" y="65.7" width="6.4" height=".7" fill="#4a4a4a" opacity="0.5"/><rect x="12.1" y="67.9" width="6.3" height=".7" fill="#4a4a4a" opacity="0.6"/><rect x="12.1" y="70.4" width="4.9" height=".7" fill="#4a4a4a" opacity="0.6"/><rect x="23.2" y="40.9" width="9.9" height="30.6" fill="#d2cec5"/><rect x="24.7" y="43.9" width="6.8" height=".7" fill="#4a4a4a" opacity="0.7"/><rect x="24.7" y="46" width="6.1" height=".7" fill="#4a4a4a" opacity="0.4"/><rect x="24.7" y="48.5" width="6.4" height=".7" fill="#4a4a4a" opacity="0.4"/><rect x="24.7" y="50.3" width="4.9" height=".7" fill="#4a4a4a" opacity="0.5"/><rect x="24.7" y="52.7" width="5.1" height=".7" fill="#4a4a4a" opacity="0.3"/><rect x="24.7" y="55" width="3.7" height=".7" fill="#4a4a4a" opacity="0.6"/><rect x="24.7" y="56.9" width="4.6" height=".7" fill="#4a4a4a" opacity="0.6"/><rect x="24.7" y="58.8" width="3.9" height=".7" fill="#4a4a4a" opacity="0.5"/><rect x="24.7" y="61.2" width="6.3" height=".7" fill="#4a4a4a" opacity="0.6"/><rect x="24.7" y="63.6" width="5.1" height=".7" fill="#4a4a4a" opacity="0.7"/><rect x="24.7" y="65.5" width="4.2" height=".7" fill="#4a4a4a" opacity="0.5"/><rect x="24.7" y="67.5" width="5.9" height=".7" fill="#4a4a4a" opacity="0.6"/><rect x="36.3" y="42.7" width="9" height="28.5" fill="#d9d5cd"/><rect x="37.8" y="45.7" width="5.6" height=".7" fill="#4a4a4a" opacity="0.5"/><rect x="37.8" y="47.7" width="3.4" height=".7" fill="#4a4a4a" opacity="0.5"/><rect x="37.8" y="49.7" width="4.5" height=".7" fill="#4a4a4a" opacity="0.5"/><rect x="37.8" y="51.6" width="3" height=".7" fill="#4a4a4a" opacity="0.5"/><rect x="37.8" y="53.7" width="3.1" height=".7" fill="#4a4a4a" opacity="0.7"/><rect x="37.8" y="55.9" width="5.9" height=".7" fill="#4a4a4a" opacity="0.3"/><rect x="37.8" y="57.8" width="3.5" height=".7" fill="#4a4a4a" opacity="0.7"/><rect x="37.8" y="59.9" width="5.7" height=".7" fill="#4a4a4a" opacity="0.6"/><rect x="37.8" y="62" width="3.7" height=".7" fill="#4a4a4a" opacity="0.5"/><rect x="37.8" y="64" width="5.7" height=".7" fill="#4a4a4a" opacity="0.7"/><rect x="37.8" y="66.5" width="4.5" height=".7" fill="#4a4a4a" opacity="0.3"/><rect x="46.8" y="40.1" width="7.9" height="35.1" fill="#d2cec5"/><rect x="48.3" y="43.1" width="2.5" height=".7" fill="#4a4a4a" opacity="0.4"/><rect x="48.3" y="45.4" width="3.1" height=".7" fill="#4a4a4a" opacity="0.5"/><rect x="48.3" y="47.6" width="3.9" height=".7" fill="#4a4a4a" opacity="0.6"/><rect x="48.3" y="49.8" width="4.2" height=".7" fill="#4a4a4a" opacity="0.6"/><rect x="48.3" y="52.3" width="2.5" height=".7" fill="#4a4a4a" opacity="0.6"/><rect x="48.3" y="54.6" width="4" height=".7" fill="#4a4a4a" opacity="0.5"/><rect x="48.3" y="57" width="3.8" height=".7" fill="#4a4a4a" opacity="0.4"/><rect x="48.3" y="59" width="3.8" height=".7" fill="#4a4a4a" opacity="0.5"/><rect x="48.3" y="60.9" width="4.7" height=".7" fill="#4a4a4a" opacity="0.6"/><rect x="48.3" y="62.9" width="2.9" height=".7" fill="#4a4a4a" opacity="0.5"/><rect x="48.3" y="65.3" width="2.9" height=".7" fill="#4a4a4a" opacity="0.6"/><rect x="48.3" y="67.3" width="2.7" height=".7" fill="#4a4a4a" opacity="0.7"/><rect x="48.3" y="69.2" width="2.7" height=".7" fill="#4a4a4a" opacity="0.5"/><rect x="48.3" y="71.3" width="4.8" height=".7" fill="#4a4a4a" opacity="0.5"/><rect x="56.6" y="40.4" width="9.2" height="32.8" fill="#d2cec5"/><rect x="58.1" y="43.4" width="4.2" height=".7" fill="#4a4a4a" opacity="0.6"/><rect x="58.1" y="45.4" width="5.3" height=".7" fill="#4a4a4a" opacity="0.6"/><rect x="58.1" y="47.5" width="6.2" height=".7" fill="#4a4a4a" opacity="0.6"/><rect x="58.1" y="49.8" width="4.6" height=".7" fill="#4a4a4a" opacity="0.3"/><rect x="58.1" y="52.2" width="5" height=".7" fill="#4a4a4a" opacity="0.7"/><rect x="58.1" y="54.3" width="3.7" height=".7" fill="#4a4a4a" opacity="0.3"/><rect x="58.1" y="56.2" width="3.6" height=".7" fill="#4a4a4a" opacity="0.4"/><rect x="58.1" y="58.5" width="4.9" height=".7" fill="#4a4a4a" opacity="0.4"/><rect x="58.1" y="60.8" width="3.3" height=".7" fill="#4a4a4a" opacity="0.3"/><rect x="58.1" y="62.9" width="4.4" height=".7" fill="#4a4a4a" opacity="0.4"/><rect x="58.1" y="64.8" width="4.3" height=".7" fill="#4a4a4a" opacity="0.6"/><rect x="58.1" y="66.6" width="3.7" height=".7" fill="#4a4a4a" opacity="0.5"/><rect x="58.1" y="68.7" width="4.2" height=".7" fill="#4a4a4a" opacity="0.7"/><rect x="1" y="85.6" width="9.8" height="29.4" fill="#d9d5cd"/><rect x="2.5" y="88.6" width="5.8" height=".7" fill="#4a4a4a" opacity="0.6"/><rect x="2.5" y="90.8" width="4.8" height=".7" fill="#4a4a4a" opacity="0.5"/><rect x="2.5" y="93" width="6.7" height=".7" fill="#4a4a4a" opacity="0.6"/><rect x="2.5" y="94.9" width="6.5" height=".7" fill="#4a4a4a" opacity="0.6"/><rect x="2.5" y="97.3" width="6.1" height=".7" fill="#4a4a4a" opacity="0.5"/><rect x="2.5" y="99.7" width="6.4" height=".7" fill="#4a4a4a" opacity="0.6"/><rect x="2.5" y="102.1" width="6" height=".7" fill="#4a4a4a" opacity="0.5"/><rect x="2.5" y="104.4" width="3.6" height=".7" fill="#4a4a4a" opacity="0.4"/><rect x="2.5" y="106.5" width="3.4" height=".7" fill="#4a4a4a" opacity="0.4"/><rect x="2.5" y="108.7" width="5.5" height=".7" fill="#4a4a4a" opacity="0.4"/><rect x="2.5" y="111.2" width="5.6" height=".7" fill="#4a4a4a" opacity="0.4"/><rect x="13.4" y="84.1" width="8.9" height="32.5" fill="#c8c2bd"/><rect x="14.9" y="87.1" width="3.6" height=".7" fill="#4a4a4a" opacity="0.3"/><rect x="14.9" y="89.1" width="4.6" height=".7" fill="#4a4a4a" opacity="0.3"/><rect x="14.9" y="91" width="3.6" height=".7" fill="#4a4a4a" opacity="0.5"/><rect x="14.9" y="93.2" width="5.2" height=".7" fill="#4a4a4a" opacity="0.6"/><rect x="14.9" y="95" width="3.7" height=".7" fill="#4a4a4a" opacity="0.4"/><rect x="14.9" y="97" width="4.5" height=".7" fill="#4a4a4a" opacity="0.5"/><rect x="14.9" y="99.2" width="5.4" height=".7" fill="#4a4a4a" opacity="0.3"/><rect x="14.9" y="101.3" width="4.8" height=".7" fill="#4a4a4a" opacity="0.5"/><rect x="14.9" y="103.6" width="5.7" height=".7" fill="#4a4a4a" opacity="0.5"/><rect x="14.9" y="106" width="4.1" height=".7" fill="#4a4a4a" opacity="0.7"/><rect x="14.9" y="108.4" width="4.5" height=".7" fill="#4a4a4a" opacity="0.5"/><rect x="14.9" y="110.5" width="4.4" height=".7" fill="#4a4a4a" opacity="0.4"/><rect x="14.9" y="112.6" width="3.8" height=".7" fill="#4a4a4a" opacity="0.5"/><rect x="24.3" y="82.1" width="10.3" height="33" fill="#d9d5cd"/><rect x="25.8" y="85.1" width="5.8" height=".7" fill="#4a4a4a" opacity="0.6"/><rect x="25.8" y="87.2" width="6.1" height=".7" fill="#4a4a4a" opacity="0.3"/><rect x="25.8" y="89.2" width="5.1" height=".7" fill="#4a4a4a" opacity="0.5"/><rect x="25.8" y="91.5" width="4.8" height=".7" fill="#4a4a4a" opacity="0.6"/><rect x="25.8" y="93.5" width="6.2" height=".7" fill="#4a4a4a" opacity="0.4"/><rect x="25.8" y="95.8" width="3.8" height=".7" fill="#4a4a4a" opacity="0.3"/><rect x="25.8" y="98.2" width="6.9" height=".7" fill="#4a4a4a" opacity="0.4"/><rect x="25.8" y="100.6" width="4.5" height=".7" fill="#4a4a4a" opacity="0.6"/><rect x="25.8" y="102.5" width="5.1" height=".7" fill="#4a4a4a" opacity="0.3"/><rect x="25.8" y="104.9" width="4.9" height=".7" fill="#4a4a4a" opacity="0.4"/><rect x="25.8" y="106.9" width="4.1" height=".7" fill="#4a4a4a" opacity="0.5"/><rect x="25.8" y="109.2" width="5.9" height=".7" fill="#4a4a4a" opacity="0.6"/><rect x="25.8" y="111.2" width="6.3" height=".7" fill="#4a4a4a" opacity="0.6"/><rect x="36.7" y="82.5" width="7.5" height="32.1" fill="#c8c2bd"/><rect x="38.2" y="85.5" width="4" height=".7" fill="#4a4a4a" opacity="0.5"/><rect x="38.2" y="87.5" width="2.8" height=".7" fill="#4a4a4a" opacity="0.6"/><rect x="38.2" y="89.7" width="3.5" height=".7" fill="#4a4a4a" opacity="0.6"/><rect x="38.2" y="92" width="2.6" height=".7" fill="#4a4a4a" opacity="0.4"/><rect x="38.2" y="94.5" width="4.3" height=".7" fill="#4a4a4a" opacity="0.7"/><rect x="38.2" y="96.3" width="2.4" height=".7" fill="#4a4a4a" opacity="0.4"/><rect x="38.2" y="98.4" width="3.6" height=".7" fill="#4a4a4a" opacity="0.3"/><rect x="38.2" y="100.6" width="2.4" height=".7" fill="#4a4a4a" opacity="0.3"/><rect x="38.2" y="102.9" width="3.5" height=".7" fill="#4a4a4a" opacity="0.6"/><rect x="38.2" y="105" width="3.3" height=".7" fill="#4a4a4a" opacity="0.4"/><rect x="38.2" y="107" width="3.9" height=".7" fill="#4a4a4a" opacity="0.6"/><rect x="38.2" y="108.8" width="2.5" height=".7" fill="#4a4a4a" opacity="0.6"/><rect x="38.2" y="111.1" width="3.9" height=".7" fill="#4a4a4a" opacity="0.4"/><rect x="46.1" y="82.6" width="9.8" height="32.2" fill="#d9d5cd"/><rect x="47.6" y="85.6" width="5.5" height=".7" fill="#4a4a4a" opacity="0.4"/><rect x="47.6" y="87.9" width="6.2" height=".7" fill="#4a4a4a" opacity="0.4"/><rect x="47.6" y="90.2" width="5.4" height=".7" fill="#4a4a4a" opacity="0.5"/><rect x="47.6" y="92.2" width="5.3" height=".7" fill="#4a4a4a" opacity="0.5"/><rect x="47.6" y="94.4" width="6.2" height=".7" fill="#4a4a4a" opacity="0.5"/><rect x="47.6" y="96.8" width="3.4" height=".7" fill="#4a4a4a" opacity="0.4"/><rect x="47.6" y="99.2" width="5.5" height=".7" fill="#4a4a4a" opacity="0.6"/><rect x="47.6" y="101.4" width="6" height=".7" fill="#4a4a4a" opacity="0.4"/><rect x="47.6" y="103.8" width="4.2" height=".7" fill="#4a4a4a" opacity="0.6"/><rect x="47.6" y="105.8" width="6.5" height=".7" fill="#4a4a4a" opacity="0.4"/><rect x="47.6" y="107.9" width="5.4" height=".7" fill="#4a4a4a" opacity="0.7"/><rect x="47.6" y="110.2" width="4.4" height=".7" fill="#4a4a4a" opacity="0.5"/><rect x="58.4" y="83" width="7.8" height="34.2" fill="#cfc9d1"/><rect x="59.9" y="86" width="3.3" height=".7" fill="#4a4a4a" opacity="0.4"/><rect x="59.9" y="88.1" width="3.3" height=".7" fill="#4a4a4a" opacity="0.4"/><rect x="59.9" y="90.3" width="4.3" height=".7" fill="#4a4a4a" opacity="0.5"/><rect x="59.9" y="92.7" width="3.7" height=".7" fill="#4a4a4a" opacity="0.4"/><rect x="59.9" y="95" width="4.5" height=".7" fill="#4a4a4a" opacity="0.4"/><rect x="59.9" y="96.8" width="3.6" height=".7" fill="#4a4a4a" opacity="0.5"/><rect x="59.9" y="99" width="4.7" height=".7" fill="#4a4a4a" opacity="0.6"/><rect x="59.9" y="101.4" width="2.5" height=".7" fill="#4a4a4a" opacity="0.5"/><rect x="59.9" y="103.7" width="2.6" height=".7" fill="#4a4a4a" opacity="0.3"/><rect x="59.9" y="106" width="4.5" height=".7" fill="#4a4a4a" opacity="0.3"/><rect x="59.9" y="108.3" width="2.7" height=".7" fill="#4a4a4a" opacity="0.6"/><rect x="59.9" y="110.5" width="3" height=".7" fill="#4a4a4a" opacity="0.4"/><rect x="59.9" y="112.9" width="3.6" height=".7" fill="#4a4a4a" opacity="0.6"/></svg>
<div class="a" style="left:333px;top:396px;width:213px;height:22px;background:#f0e6e6"></div>
<div class="a cap" style="left:333px;top:396px;width:213px">线下公示栏展承诺</div>
<!-- image 2 -->
<div class="a" style="left:690px;top:273px;width:116px;height:124px;background:rgba(60,60,60,.4);filter:blur(4px)"></div>
<div class="a" style="left:575px;top:268px;width:221px;height:159px;background:#fff;border:2px solid #b00c18;box-shadow:0 1px 1px rgba(90,0,0,.5)"></div>
<svg class="a" style="left:577px;top:271px" width="104" height="125" viewBox="0 0 104 125"><rect width="104" height="125" fill="#fff"/><rect x="14" y="3" width="86" height=".8" fill="#555" opacity="0.5"/><rect x="14" y="4.7" width="86" height=".8" fill="#555" opacity="0.6"/><rect x="14" y="6.4" width="86" height=".8" fill="#555" opacity="0.6"/><rect x="14" y="8.1" width="86" height=".8" fill="#555" opacity="0.7"/><rect x="14" y="9.8" width="86" height=".8" fill="#555" opacity="0.7"/><rect x="14" y="11.5" width="86" height=".8" fill="#555" opacity="0.5"/><rect x="14" y="13.2" width="26.4" height=".8" fill="#555" opacity="0.7"/><rect x="78" y="20" width="12" height=".8" fill="#777" opacity=".6"/><rect x="12" y="30" width="92" height=".5" fill="#ddd"/><rect x="90" y="33" width="4" height=".8" fill="#999"/><rect x="97" y="33" width="3" height=".8" fill="#999"/><rect x="0" y="37.5" width="104" height=".6" fill="#e4e4e4"/><rect x="2" y="41" width="8" height="9" fill="#d4e8f6"/><path d="M6 43a1.5 1.5 0 1 0 .01 0M3.5 49c0-3 5-3 5 0" fill="none" stroke="#8cc0e4" stroke-width=".7"/><rect x="13" y="44" width="10" height=".8" fill="#444"/><rect x="26" y="44" width="24" height=".8" fill="#aaa"/><rect x="100" y="42" width="2" height="1.5" fill="#f0a060"/><rect x="14" y="50" width="88" height=".8" fill="#555" opacity="0.5"/><rect x="14" y="51.7" width="88" height=".8" fill="#555" opacity="0.5"/><rect x="14" y="53.4" width="88" height=".8" fill="#555" opacity="0.8"/><rect x="14" y="55.1" width="47.1" height=".8" fill="#555" opacity="0.7"/><rect x="12" y="62" width="92" height=".5" fill="#ddd"/><rect x="90" y="65" width="4" height=".8" fill="#999"/><rect x="97" y="65" width="3" height=".8" fill="#999"/><rect x="0" y="69.5" width="104" height=".6" fill="#e4e4e4"/><rect x="2" y="72" width="8" height="9" fill="#8a6a4a"/><rect x="4" y="73" width="4" height="5" fill="#d8c0a0"/><rect x="13" y="75" width="10" height=".8" fill="#444"/><rect x="26" y="75" width="24" height=".8" fill="#aaa"/><rect x="100" y="73" width="2" height="1.5" fill="#f0a060"/><rect x="18" y="81" width="50" height=".9" fill="#555" opacity=".7"/><rect x="18" y="87.5" width="72" height=".9" fill="#555" opacity=".7"/><rect x="18" y="94" width="66" height=".9" fill="#555" opacity=".7"/><rect x="18" y="100.5" width="32" height=".9" fill="#555" opacity=".7"/><rect x="18" y="107" width="35" height=".9" fill="#555" opacity=".7"/><rect x="18" y="113.5" width="22" height=".9" fill="#555" opacity=".7"/><rect x="18" y="120" width="14" height=".9" fill="#555" opacity=".7"/><rect x="0" y="123" width="104" height="2" fill="#5a86b4"/></svg><div class="a" style="left:681px;top:271px;width:6px;height:125px;background:linear-gradient(90deg,#9a9a9a,#e8e8e8)"></div><svg class="a" style="left:687px;top:271px" width="108" height="125" viewBox="0 0 108 125"><rect width="108" height="125" fill="#fff"/><rect x="3" y="4" width="8" height="9" fill="#d4e8f6"/><path d="M7 6a1.5 1.5 0 1 0 .01 0M4.5 12c0-3 5-3 5 0" fill="none" stroke="#8cc0e4" stroke-width=".7"/><rect x="14" y="7" width="8" height=".8" fill="#444"/><rect x="25" y="7" width="24" height=".8" fill="#aaa"/><rect x="103" y="4" width="2.5" height="1.5" fill="#f0a060"/><rect x="15" y="13" width="88" height=".8" fill="#555" opacity="0.7"/><rect x="15" y="14.7" width="88" height=".8" fill="#555" opacity="0.7"/><rect x="15" y="16.4" width="88" height=".8" fill="#555" opacity="0.7"/><rect x="15" y="18.1" width="67.9" height=".8" fill="#555" opacity="0.7"/><rect x="14" y="24" width="92" height=".5" fill="#ddd"/><rect x="94" y="28" width="4" height=".8" fill="#999"/><rect x="101" y="28" width="3" height=".8" fill="#999"/><rect x="0" y="33" width="108" height=".6" fill="#e4e4e4"/><rect x="3" y="37" width="7" height="9" fill="#3a4a3a"/><rect x="4.5" y="38.5" width="4" height="4" fill="#e0b090"/><rect x="4" y="42.5" width="5" height="3.5" fill="#dfe8f4"/><rect x="14" y="40" width="8" height=".8" fill="#444"/><rect x="25" y="40" width="24" height=".8" fill="#aaa"/><rect x="103" y="37" width="2.5" height="1.5" fill="#f0a060"/><rect x="15" y="46" width="88" height=".8" fill="#555" opacity="0.8"/><rect x="15" y="47.7" width="88" height=".8" fill="#555" opacity="0.5"/><rect x="15" y="49.4" width="88" height=".8" fill="#555" opacity="0.6"/><rect x="15" y="51.1" width="67.9" height=".8" fill="#555" opacity="0.7"/><rect x="14" y="57" width="92" height=".5" fill="#ddd"/><rect x="94" y="61" width="4" height=".8" fill="#999"/><rect x="101" y="61" width="3" height=".8" fill="#999"/><rect x="0" y="66" width="108" height=".6" fill="#e4e4e4"/><rect x="3" y="70" width="7" height="9" fill="#3a4a3a"/><rect x="4.5" y="71.5" width="4" height="4" fill="#e0b090"/><rect x="4" y="75.5" width="5" height="3.5" fill="#dfe8f4"/><rect x="14" y="73" width="8" height=".8" fill="#444"/><rect x="25" y="73" width="24" height=".8" fill="#aaa"/><rect x="103" y="70" width="2.5" height="1.5" fill="#f0a060"/><rect x="19" y="80" width="74" height="45" fill="#2a0f16"/><path d="M25 95l61-1 2 31H24z" fill="#e9e7e4"/><rect x="47" y="99" width="10" height="3" fill="#777" opacity=".6"/><rect x="31" y="109" width="50" height="2" fill="#666" opacity=".55"/><rect x="31" y="114.5" width="52" height="2" fill="#666" opacity=".55"/><rect x="31" y="120" width="54" height="2" fill="#666" opacity=".55"/></svg>
<div class="a" style="left:578px;top:396px;width:234px;height:22px;background:#f0e6e6"></div>
<div class="a" style="left:794px;top:396px;width:2px;height:22px;background:#b00c18"></div>
<div class="a cap" style="left:578px;top:396px;width:235px">线上课群分享承诺</div>

</div>
<!-- v scrollbar -->
<div class="a" style="left:880px;top:139px;width:17px;height:528px;background:#f2f2f2"></div>
<div class="a sbtn" style="left:880px;top:139px;width:17px;height:9px"></div>
<div class="a sbtn" style="left:880px;top:148px;width:17px;height:17px"><div class="a" style="left:4px;top:5px;border:4px solid transparent;border-top:0;border-bottom:5px solid #000"></div></div>
<div class="a sbtn" style="left:880px;top:561px;width:17px;height:45px"></div>
<div class="a sbtn" style="left:880px;top:650px;width:17px;height:17px"><div class="a" style="left:4px;top:6px;border:4px solid transparent;border-bottom:0;border-top:5px solid #000"></div></div>
<div class="a" style="left:897px;top:139px;width:5px;height:554px;background:#fafafa"></div>
<!-- h scrollbar -->
<div class="a" style="left:19px;top:629px;width:861px;height:17px;background:#f0f0f0;border-bottom:1px solid #999"></div>
<div class="a sbtn" style="left:19px;top:629px;width:17px;height:17px"><div class="a" style="left:5px;top:4px;border:4px solid transparent;border-left:0;border-right:5px solid #000"></div></div>
<div class="a sbtn" style="left:863px;top:629px;width:17px;height:17px"><div class="a" style="left:6px;top:4px;border:4px solid transparent;border-right:0;border-left:5px solid #000"></div></div>
<!-- nav toolbar -->
<div class="a" style="left:19px;top:647px;width:861px;height:22px;background:linear-gradient(180deg,#fdfdfd,#f2f2f2 50%,#dcdcdc);border-bottom:1px solid #b4b4b4"></div>
<svg class="a" style="left:26px;top:650px" width="16" height="16" viewBox="0 0 16 16"><rect x="1" y="2" width="14" height="12" rx="1" fill="#e8f0fb" stroke="#3c66b0" stroke-width="1.2"/><rect x="3" y="4" width="10" height="8" fill="#4a7ad8"/><path d="M4 6h8M4 8h8M4 10h8" stroke="#fff" stroke-width=".9"/></svg>
<svg class="a" style="left:48px;top:650px" width="16" height="16" viewBox="0 0 16 16"><rect x="1.5" y="2.5" width="13" height="11" fill="#ececec" stroke="#c0c0c0"/><rect x="3" y="4" width="4.5" height="8" fill="#b4b4b4"/><rect x="9" y="4" width="4" height="3.5" fill="#c8c8c8"/><rect x="9" y="8.5" width="4" height="3.5" fill="#d4d4d4"/></svg>
<svg class="a" style="left:70px;top:650px" width="16" height="16" viewBox="0 0 16 16"><rect x="1" y="2" width="14" height="12" rx="1" fill="#e8f0fb" stroke="#3c66b0" stroke-width="1.2"/><rect x="3" y="4" width="4.5" height="3.5" fill="#4a7ad8"/><rect x="8.5" y="4" width="4.5" height="3.5" fill="#4a7ad8"/><rect x="3" y="8.5" width="4.5" height="3.5" fill="#4a7ad8"/><rect x="8.5" y="8.5" width="4.5" height="3.5" fill="#4a7ad8"/></svg>
<svg class="a" style="left:90px;top:651px" width="14" height="14" viewBox="0 0 16 16"><path d="M3 3v10" stroke="#1f6fd4" stroke-width="1.8"/><path d="M12.5 3v10L5 8z" fill="#2a7be0" stroke="#1659b8" stroke-width=".6"/></svg>
<svg class="a" style="left:114px;top:651px" width="14" height="14" viewBox="0 0 16 16"><path d="M11.5 3v10L4.5 8z" fill="#2a7be0" stroke="#1659b8" stroke-width=".6"/></svg>
<svg class="a" style="left:237px;top:651px" width="14" height="14" viewBox="0 0 16 16"><path d="M4.5 3v10l7-5z" fill="#2a7be0" stroke="#1659b8" stroke-width=".6"/></svg>
<svg class="a" style="left:259px;top:651px" width="14" height="14" viewBox="0 0 16 16"><path d="M13 3v10" stroke="#1f6fd4" stroke-width="1.8"/><path d="M3.5 3v10L11 8z" fill="#2a7be0" stroke="#1659b8" stroke-width=".6"/></svg>
<svg class="a" style="left:280px;top:650px" width="16" height="16" viewBox="0 0 16 16"><circle cx="8" cy="8" r="5.5" fill="#e8f2fd" stroke="#5b93df" stroke-width="1.2"/><path d="M5 8h6" stroke="#2c6fd4" stroke-width="1.5"/></svg>
<svg class="a" style="left:352px;top:650px" width="16" height="16" viewBox="0 0 16 16"><circle cx="8" cy="8" r="5.5" fill="#e8f2fd" stroke="#5b93df" stroke-width="1.2"/><path d="M5 8h6M8 5v6" stroke="#2c6fd4" stroke-width="1.5"/></svg>
<svg class="a" style="left:378px;top:650px" width="16" height="16" viewBox="0 0 16 16"><path d="M8 1.5L14 8.5h-3.5V14.5h-5V8.5H2z" fill="#2a7be0" stroke="#1450a8" stroke-width=".8"/></svg>
<div class="a inp" style="left:135px;top:650px;width:96px;height:17px">10/11</div>
<div class="a inp" style="left:301px;top:650px;width:46px;height:17px">65%</div>
<!-- status -->
<div class="a" style="left:16px;top:670px;width:886px;height:23px;background:#f0f0f0;border-top:1px solid #fafafa"></div>
<div class="a" style="left:20px;top:676px;font-size:12px;color:#111;letter-spacing:.2px">©TTKN Corp.</div>
<!-- share bar -->
<div class="a" style="left:727px;top:671px;width:178px;height:28px;background:#f2f2f2;border-radius:3px 3px 0 0"></div>
<div class="a" style="left:739px;top:680px;width:10px;height:10px;border-radius:5px;background:#c8423c"></div>
<div class="a" style="left:758px;top:677px;font-size:13px;color:#222;letter-spacing:-.3px">00:06:23</div>
<div class="a" style="left:813px;top:679px;width:1px;height:12px;background:#d0d0d0"></div>
<svg class="a" style="left:827px;top:678px" width="14" height="14" viewBox="0 0 14 14"><path d="M4.2 2.6A5.3 5.3 0 1 0 9.8 2.6" fill="none" stroke="#f0466e" stroke-width="1.3"/><path d="M7 .5v6" stroke="#f0466e" stroke-width="1.3"/></svg>
<div class="a" style="left:842px;top:676px;font-size:12.5px;color:#333">退出分享</div>
</div>
</div></div></div>
<!-- gift bubble -->
<div class="a" style="left:937px;top:604px;width:168px;height:30px;background:#111;border-radius:0 15px 15px 0;overflow:hidden">
 <div class="a" style="left:-10px;top:3px;font-size:16px;line-height:24px;color:#f4f4f4;white-space:nowrap">送给</div>
 <div class="a" style="left:31px;top:3px;font-size:16px;line-height:24px;color:#f2d67a;white-space:nowrap">串错鞋带<span style="margin-left:4px">~</span></div><div class="a" style="left:116px;top:3px;font-size:16px;line-height:24px;color:#f2d67a;white-space:nowrap">1个</div>
 <svg class="a" style="left:144px;top:7px" width="12" height="17" viewBox="0 0 12 17"><path d="M1.5 1l2 1.5L6 .5l2.5 2 2-1.5v6a4.5 4.5 0 0 1-9 0z" fill="#f04a78"/><path d="M6 11v5.5M6 15c-2 0-3.5-1-4-2.5M6 15c2 0 3.5-1 4-2.5" stroke="#2c9c4c" stroke-width="1.3" fill="none"/></svg>
</div>
<!-- collapse -->
<div class="a" style="left:1116px;top:54px;width:24px;height:24px;border-radius:12px;background:#0b0b0b"></div>
<svg class="a" style="left:1123px;top:59px" width="10" height="14" viewBox="0 0 10 14"><path d="M2.5 1.5L8 7l-5.5 5.5" fill="none" stroke="#9a9a9a" stroke-width="1.3"/></svg>
<!-- member list -->
<div class="a" style="left:1141px;top:54px;width:198px;height:599px;background:rgba(2,7,4,.885)"></div>
<div class="a" style="left:1328px;top:58px;width:9px;height:465px;border-radius:4.5px;background:rgba(60,66,60,.35)"></div>
<svg class="a" style="left:1149px;top:63px" width="25" height="25" viewBox="0 0 24 24"><clipPath id="cc0"><circle cx="12" cy="12" r="12"/></clipPath><g clip-path="url(#cc0)"><rect width="24" height="24" fill="#20306a"/><path d="M2 24c0-7 3-10 8-10l4-5 4 1-1 6c2 2 2 5 2 8z" fill="#e8e8ec"/><rect x="14" y="7" width="4" height="7" rx="1" fill="#111"/><circle cx="13" cy="6" r="3" fill="#1a1a1a"/></g></svg>
<div class="a mname" style="left:1181px;top:67px;letter-spacing:0px">博整</div>
<svg class="a" style="left:1297px;top:64px" width="20" height="20" viewBox="0 0 20 20"><circle cx="10" cy="10" r="10" fill="#3e403e"/><rect x="7.2" y="3.8" width="5.6" height="8.7" rx="2.8" fill="#b6b6b6"/><path d="M5 9.5a5 5 0 0 0 10 0M10 14.5v2.5" fill="none" stroke="#b6b6b6" stroke-width="1.3"/><path d="M5.2 4.2l10.5 10.5" stroke="#3e403e" stroke-width="2.4"/><path d="M5.8 3.6l10.2 10.2" stroke="#b6b6b6" stroke-width="1.1"/></svg>
<svg class="a" style="left:1149px;top:98px" width="25" height="25" viewBox="0 0 24 24"><clipPath id="cc1"><circle cx="12" cy="12" r="12"/></clipPath><g clip-path="url(#cc1)"><rect width="24" height="24" fill="#e8ecf8"/><circle cx="15" cy="9" r="7" fill="#fafbff"/><rect y="18" width="24" height="6" fill="#3a2630"/><rect y="17" width="24" height="1.5" fill="#8c3450"/><path d="M8 19l.5-9c.5-2.5 3-2.5 3 0l.5 9z" fill="#4a4458"/></g></svg>
<div class="a mname" style="left:1181px;top:102px;letter-spacing:0px">博</div>
<svg class="a" style="left:1297px;top:99px" width="20" height="20" viewBox="0 0 20 20"><circle cx="10" cy="10" r="10" fill="#3e403e"/><rect x="7.2" y="3.8" width="5.6" height="8.7" rx="2.8" fill="#b6b6b6"/><path d="M5 9.5a5 5 0 0 0 10 0M10 14.5v2.5" fill="none" stroke="#b6b6b6" stroke-width="1.3"/><path d="M5.2 4.2l10.5 10.5" stroke="#3e403e" stroke-width="2.4"/><path d="M5.8 3.6l10.2 10.2" stroke="#b6b6b6" stroke-width="1.1"/></svg>
<svg class="a" style="left:1149px;top:133px" width="25" height="25" viewBox="0 0 24 24"><clipPath id="cc2"><circle cx="12" cy="12" r="12"/></clipPath><g clip-path="url(#cc2)"><rect width="24" height="24" fill="#7a4a44"/><circle cx="12" cy="11" r="6" fill="#d8a890"/><path d="M4 12c0-8 16-8 16 0l-2 8c-1-6-1-9-6-9s-5 3-6 9z" fill="#3c2420"/><path d="M8 13h3M13 13h3" stroke="#222" stroke-width=".8"/><rect y="19" width="24" height="5" fill="#8c3c3c"/></g></svg>
<div class="a mname" style="left:1181px;top:137px;letter-spacing:0px">串错鞋带<span style="margin-left:3px">~</span></div>
<svg class="a" style="left:1297px;top:134px" width="20" height="20" viewBox="0 0 20 20"><circle cx="10" cy="10" r="10" fill="#3e403e"/><rect x="7.2" y="3.8" width="5.6" height="8.7" rx="2.8" fill="#b6b6b6"/><path d="M5 9.5a5 5 0 0 0 10 0M10 14.5v2.5" fill="none" stroke="#b6b6b6" stroke-width="1.3"/><path d="M5.2 4.2l10.5 10.5" stroke="#3e403e" stroke-width="2.4"/><path d="M5.8 3.6l10.2 10.2" stroke="#b6b6b6" stroke-width="1.1"/></svg>
<svg class="a" style="left:1149px;top:168px" width="25" height="25" viewBox="0 0 24 24"><clipPath id="cc3"><circle cx="12" cy="12" r="12"/></clipPath><g clip-path="url(#cc3)"><rect width="24" height="24" fill="#2c1a08"/><rect y="6" width="24" height="4" fill="#7c4810"/><rect y="9" width="24" height="7" fill="#e8941c"/><circle cx="15" cy="12.5" r="2.8" fill="#fff2a8"/><rect y="15.5" width="24" height="1.2" fill="#f8c050"/><rect y="16.5" width="24" height="8" fill="#160c04"/><rect x="12" y="17.5" width="6" height="1" fill="#c87818"/><path d="M5 24l.5-9c-1.5-1-1-3.5 1-3.5s2.5 2.5 1 3.5l1.5 3 2-1 .5 1-2.5 2V24z" fill="#0a0602"/></g></svg>
<div class="a mname" style="left:1181px;top:172px;letter-spacing:0px">DesireΣっ き</div>
<svg class="a" style="left:1297px;top:169px" width="20" height="20" viewBox="0 0 20 20"><circle cx="10" cy="10" r="10" fill="#3e403e"/><rect x="7.2" y="3.8" width="5.6" height="8.7" rx="2.8" fill="#b6b6b6"/><path d="M5 9.5a5 5 0 0 0 10 0M10 14.5v2.5" fill="none" stroke="#b6b6b6" stroke-width="1.3"/><path d="M5.2 4.2l10.5 10.5" stroke="#3e403e" stroke-width="2.4"/><path d="M5.8 3.6l10.2 10.2" stroke="#b6b6b6" stroke-width="1.1"/></svg>
<svg class="a" style="left:1149px;top:203px" width="25" height="25" viewBox="0 0 24 24"><clipPath id="cc4"><circle cx="12" cy="12" r="12"/></clipPath><g clip-path="url(#cc4)"><rect width="24" height="24" fill="#f0dce0"/><circle cx="12" cy="11" r="5.5" fill="#f8e8e0"/><path d="M5 14c-1-10 15-10 14 0l-1 7c-1-5-2-9-6-9s-5 4-6 9z" fill="#5c4038"/><path d="M6 24c1-4 11-4 12 0z" fill="#e8b8c0"/></g></svg>
<div class="a mname" style="left:1181px;top:207px;letter-spacing:-0.8px">FLIPPED<span style="font-size:11px;margin-left:6px">♛</span></div>
<svg class="a" style="left:1297px;top:204px" width="20" height="20" viewBox="0 0 20 20"><circle cx="10" cy="10" r="10" fill="#3e403e"/><rect x="7.2" y="3.8" width="5.6" height="8.7" rx="2.8" fill="#b6b6b6"/><path d="M5 9.5a5 5 0 0 0 10 0M10 14.5v2.5" fill="none" stroke="#b6b6b6" stroke-width="1.3"/><path d="M5.2 4.2l10.5 10.5" stroke="#3e403e" stroke-width="2.4"/><path d="M5.8 3.6l10.2 10.2" stroke="#b6b6b6" stroke-width="1.1"/></svg>
<svg class="a" style="left:1149px;top:238px" width="25" height="25" viewBox="0 0 24 24"><clipPath id="cc5"><circle cx="12" cy="12" r="12"/></clipPath><g clip-path="url(#cc5)"><rect width="24" height="24" fill="#e6dcc0"/><circle cx="12" cy="12" r="5" fill="#f8e4d0"/><path d="M5 13c0-9 14-9 14 0l-1 5c-1-4-2-7-6-7s-5 3-6 7z" fill="#8c6848"/><path d="M6 24c1-5 11-5 12 0z" fill="#7c9c6c"/></g></svg>
<div class="a mname" style="left:1181px;top:242px;letter-spacing:0.5px">Follow my heart</div>
<svg class="a" style="left:1297px;top:239px" width="20" height="20" viewBox="0 0 20 20"><circle cx="10" cy="10" r="10" fill="#3e403e"/><rect x="7.2" y="3.8" width="5.6" height="8.7" rx="2.8" fill="#b6b6b6"/><path d="M5 9.5a5 5 0 0 0 10 0M10 14.5v2.5" fill="none" stroke="#b6b6b6" stroke-width="1.3"/><path d="M5.2 4.2l10.5 10.5" stroke="#3e403e" stroke-width="2.4"/><path d="M5.8 3.6l10.2 10.2" stroke="#b6b6b6" stroke-width="1.1"/></svg>
<svg class="a" style="left:1149px;top:273px" width="25" height="25" viewBox="0 0 24 24"><clipPath id="cc6"><circle cx="12" cy="12" r="12"/></clipPath><g clip-path="url(#cc6)"><rect width="24" height="24" fill="#fafafa"/><path d="M6 9c2-5 10-5 12 0 2 4 0 9-6 9s-8-5-6-9zM8 7c1-2 3-3 4-2M14 5c2 0 3 2 3 3M9 12h2M13 12h2M10 15c1 1 3 1 4 0M5 13c-2 1-2 4 0 5M19 13c2 1 2 4 0 5" fill="none" stroke="#333" stroke-width=".8"/></g></svg>
<div class="a mname" style="left:1181px;top:277px;letter-spacing:0px">很久</div>
<svg class="a" style="left:1297px;top:274px" width="20" height="20" viewBox="0 0 20 20"><circle cx="10" cy="10" r="10" fill="#3e403e"/><rect x="7.2" y="3.8" width="5.6" height="8.7" rx="2.8" fill="#b6b6b6"/><path d="M5 9.5a5 5 0 0 0 10 0M10 14.5v2.5" fill="none" stroke="#b6b6b6" stroke-width="1.3"/><path d="M5.2 4.2l10.5 10.5" stroke="#3e403e" stroke-width="2.4"/><path d="M5.8 3.6l10.2 10.2" stroke="#b6b6b6" stroke-width="1.1"/></svg>
<svg class="a" style="left:1149px;top:308px" width="25" height="25" viewBox="0 0 24 24"><clipPath id="cc7"><circle cx="12" cy="12" r="12"/></clipPath><g clip-path="url(#cc7)"><rect width="24" height="24" fill="#f4f4f6"/><path d="M7 17l2-8c1-2 4-2 4 0l1 5 4 3z" fill="#2c3c64"/><circle cx="11" cy="7" r="2.5" fill="#3c2c2c"/><path d="M4 18h15l1 2H5z" fill="#6cb4c8"/></g></svg>
<div class="a mname" style="left:1181px;top:312px;letter-spacing:0.3px">june<span style="font-size:17px;line-height:12px;letter-spacing:0;position:relative;top:1px">♥</span></div>
<svg class="a" style="left:1297px;top:309px" width="20" height="20" viewBox="0 0 20 20"><circle cx="10" cy="10" r="10" fill="#3e403e"/><rect x="7.2" y="3.8" width="5.6" height="8.7" rx="2.8" fill="#b6b6b6"/><path d="M5 9.5a5 5 0 0 0 10 0M10 14.5v2.5" fill="none" stroke="#b6b6b6" stroke-width="1.3"/><path d="M5.2 4.2l10.5 10.5" stroke="#3e403e" stroke-width="2.4"/><path d="M5.8 3.6l10.2 10.2" stroke="#b6b6b6" stroke-width="1.1"/></svg>
<svg class="a" style="left:1149px;top:343px" width="25" height="25" viewBox="0 0 24 24"><clipPath id="cc8"><circle cx="12" cy="12" r="12"/></clipPath><g clip-path="url(#cc8)"><rect width="24" height="24" fill="#fdfdfd"/><path d="M6 10c3-3 9-3 11 1s0 8-5 8-8-5-6-9z" fill="#fbf0f2" stroke="#f0d8dc" stroke-width=".6"/><circle cx="9" cy="9" r="1" fill="#f4c8d0"/><circle cx="16" cy="14" r=".8" fill="#c8d8f0"/></g></svg>
<div class="a mname" style="left:1181px;top:347px;letter-spacing:0px">君影草</div>
<svg class="a" style="left:1297px;top:344px" width="20" height="20" viewBox="0 0 20 20"><circle cx="10" cy="10" r="10" fill="#3e403e"/><rect x="7.2" y="3.8" width="5.6" height="8.7" rx="2.8" fill="#b6b6b6"/><path d="M5 9.5a5 5 0 0 0 10 0M10 14.5v2.5" fill="none" stroke="#b6b6b6" stroke-width="1.3"/><path d="M5.2 4.2l10.5 10.5" stroke="#3e403e" stroke-width="2.4"/><path d="M5.8 3.6l10.2 10.2" stroke="#b6b6b6" stroke-width="1.1"/></svg>
<svg class="a" style="left:1149px;top:378px" width="25" height="25" viewBox="0 0 24 24"><clipPath id="cc9"><circle cx="12" cy="12" r="12"/></clipPath><g clip-path="url(#cc9)"><rect width="24" height="24" fill="#f6f0c8"/><path d="M7 4l2 6M17 4l-2 6" stroke="#e8c83c" stroke-width="2"/><ellipse cx="12" cy="14" rx="6.5" ry="6" fill="#f8dc50"/><circle cx="9.5" cy="13" r=".9" fill="#222"/><circle cx="14.5" cy="13" r=".9" fill="#222"/><circle cx="8" cy="16" r="1.2" fill="#e8503c"/><circle cx="16" cy="16" r="1.2" fill="#e8503c"/></g></svg>
<div class="a mname" style="left:1181px;top:382px;letter-spacing:0px">每一段路、都是一...</div>
<svg class="a" style="left:1297px;top:379px" width="20" height="20" viewBox="0 0 20 20"><circle cx="10" cy="10" r="10" fill="#3e403e"/><rect x="7.2" y="3.8" width="5.6" height="8.7" rx="2.8" fill="#b6b6b6"/><path d="M5 9.5a5 5 0 0 0 10 0M10 14.5v2.5" fill="none" stroke="#b6b6b6" stroke-width="1.3"/><path d="M5.2 4.2l10.5 10.5" stroke="#3e403e" stroke-width="2.4"/><path d="M5.8 3.6l10.2 10.2" stroke="#b6b6b6" stroke-width="1.1"/></svg>
<svg class="a" style="left:1149px;top:413px" width="25" height="25" viewBox="0 0 24 24"><clipPath id="cc10"><circle cx="12" cy="12" r="12"/></clipPath><g clip-path="url(#cc10)"><rect width="24" height="24" fill="#c8381c"/><path d="M0 24V14l5-3 3 13z" fill="#2c8c3c"/><path d="M24 24V13l-5-2-3 13z" fill="#2c8c3c"/><circle cx="12" cy="13" r="5" fill="#f8e0d0"/><path d="M6 11c1-8 11-8 12 0z" fill="#d82c2c"/><rect x="6" y="10" width="12" height="2" rx="1" fill="#fff"/><path d="M7 24c1-6 9-6 10 0z" fill="#8c2418"/></g></svg>
<div class="a mname" style="left:1181px;top:417px;letter-spacing:0px">你欠我个奥利奥O_o</div>
<svg class="a" style="left:1297px;top:414px" width="20" height="20" viewBox="0 0 20 20"><circle cx="10" cy="10" r="10" fill="#3e403e"/><rect x="7.2" y="3.8" width="5.6" height="8.7" rx="2.8" fill="#b6b6b6"/><path d="M5 9.5a5 5 0 0 0 10 0M10 14.5v2.5" fill="none" stroke="#b6b6b6" stroke-width="1.3"/><path d="M5.2 4.2l10.5 10.5" stroke="#3e403e" stroke-width="2.4"/><path d="M5.8 3.6l10.2 10.2" stroke="#b6b6b6" stroke-width="1.1"/></svg>
<svg class="a" style="left:1149px;top:448px" width="25" height="25" viewBox="0 0 24 24"><clipPath id="cc11"><circle cx="12" cy="12" r="12"/></clipPath><g clip-path="url(#cc11)"><rect width="24" height="24" fill="#fbfbfb"/><rect x="5" y="11" width="14" height="8" rx="3" fill="#d8ecf8" stroke="#8cb4d0" stroke-width=".8"/><ellipse cx="10" cy="10" rx="3" ry="2.5" fill="#fff" stroke="#888" stroke-width=".6"/><path d="M6 8l2-2M16 7l2 1" stroke="#c8a880" stroke-width=".8"/></g></svg>
<div class="a mname" style="left:1181px;top:452px;letter-spacing:0px">沁</div>
<svg class="a" style="left:1297px;top:449px" width="20" height="20" viewBox="0 0 20 20"><circle cx="10" cy="10" r="10" fill="#3e403e"/><rect x="7.2" y="3.8" width="5.6" height="8.7" rx="2.8" fill="#b6b6b6"/><path d="M5 9.5a5 5 0 0 0 10 0M10 14.5v2.5" fill="none" stroke="#b6b6b6" stroke-width="1.3"/><path d="M5.2 4.2l10.5 10.5" stroke="#3e403e" stroke-width="2.4"/><path d="M5.8 3.6l10.2 10.2" stroke="#b6b6b6" stroke-width="1.1"/></svg>
<svg class="a" style="left:1149px;top:483px" width="25" height="25" viewBox="0 0 24 24"><clipPath id="cc12"><circle cx="12" cy="12" r="12"/></clipPath><g clip-path="url(#cc12)"><rect width="24" height="24" fill="#f4eed8"/><ellipse cx="12" cy="13" rx="7.5" ry="8.5" fill="#fff" stroke="#ccc" stroke-width=".5"/><circle cx="9" cy="9" r="1" fill="#222"/><circle cx="15" cy="9" r="1" fill="#222"/><ellipse cx="12" cy="12" rx="3" ry="1.5" fill="#f0a030"/><path d="M12 22c-4-3-4-6-2-6 1 0 2 1 2 2 0-1 1-2 2-2 2 0 2 3-2 6z" fill="#f06080"/><path d="M3 17c2 2 3 2 4 1M21 17c-2 2-3 2-4 1" stroke="#7cb45c" stroke-width="1.2" fill="none"/></g></svg>
<div class="a mname" style="left:1181px;top:487px;letter-spacing:0px">秋之白华</div>
<svg class="a" style="left:1297px;top:484px" width="20" height="20" viewBox="0 0 20 20"><circle cx="10" cy="10" r="10" fill="#3e403e"/><rect x="7.2" y="3.8" width="5.6" height="8.7" rx="2.8" fill="#b6b6b6"/><path d="M5 9.5a5 5 0 0 0 10 0M10 14.5v2.5" fill="none" stroke="#b6b6b6" stroke-width="1.3"/><path d="M5.2 4.2l10.5 10.5" stroke="#3e403e" stroke-width="2.4"/><path d="M5.8 3.6l10.2 10.2" stroke="#b6b6b6" stroke-width="1.1"/></svg>
<svg class="a" style="left:1271px;top:487px" width="20" height="14" viewBox="0 0 20 14"><rect x="0" y="0" width="14" height="14" rx="1.5" fill="#f0466e"/><path d="M13 7l7-5.5v11z" fill="#f0466e"/></svg>
<svg class="a" style="left:1149px;top:518px" width="25" height="25" viewBox="0 0 24 24"><clipPath id="cc13"><circle cx="12" cy="12" r="12"/></clipPath><g clip-path="url(#cc13)"><rect width="24" height="24" fill="#050505"/><path d="M3 13c-2 3 0 5 4 3l14-7-13 3c-3 1-4 0-5 1z" fill="#fff"/><rect x="6" y="17" width="10" height=".8" fill="#999"/></g></svg>
<div class="a mname" style="left:1181px;top:522px;letter-spacing:0px">生为自由</div>
<svg class="a" style="left:1297px;top:519px" width="20" height="20" viewBox="0 0 20 20"><circle cx="10" cy="10" r="10" fill="#3e403e"/><rect x="7.2" y="3.8" width="5.6" height="8.7" rx="2.8" fill="#b6b6b6"/><path d="M5 9.5a5 5 0 0 0 10 0M10 14.5v2.5" fill="none" stroke="#b6b6b6" stroke-width="1.3"/><path d="M5.2 4.2l10.5 10.5" stroke="#3e403e" stroke-width="2.4"/><path d="M5.8 3.6l10.2 10.2" stroke="#b6b6b6" stroke-width="1.1"/></svg>
<svg class="a" style="left:1149px;top:553px" width="25" height="25" viewBox="0 0 24 24"><clipPath id="cc14"><circle cx="12" cy="12" r="12"/></clipPath><g clip-path="url(#cc14)"><rect width="24" height="24" fill="#5c4c54"/><rect y="0" width="24" height="9" fill="#8c6c5c"/><ellipse cx="14" cy="9" rx="7" ry="3" fill="#d89c5c" opacity=".8"/><rect y="14" width="24" height="10" fill="#1c1824"/><path d="M7 24c0-6 2-9 5-9s5 3 5 9z" fill="#100c14"/><circle cx="12" cy="11" r="3.5" fill="#18121a"/></g></svg>
<div class="a mname" style="left:1181px;top:557px;letter-spacing:-0.5px">SNKRS</div>
<svg class="a" style="left:1297px;top:554px" width="20" height="20" viewBox="0 0 20 20"><circle cx="10" cy="10" r="10" fill="#3e403e"/><rect x="7.2" y="3.8" width="5.6" height="8.7" rx="2.8" fill="#b6b6b6"/><path d="M5 9.5a5 5 0 0 0 10 0M10 14.5v2.5" fill="none" stroke="#b6b6b6" stroke-width="1.3"/><path d="M5.2 4.2l10.5 10.5" stroke="#3e403e" stroke-width="2.4"/><path d="M5.8 3.6l10.2 10.2" stroke="#b6b6b6" stroke-width="1.1"/></svg>
<svg class="a" style="left:1149px;top:588px" width="25" height="25" viewBox="0 0 24 24"><clipPath id="cc15"><circle cx="12" cy="12" r="12"/></clipPath><g clip-path="url(#cc15)"><rect width="24" height="24" fill="#3a3e34"/><path d="M6 24l2-14c1-3 6-3 7 0l3 14z" fill="#20241c"/><rect x="9" y="6" width="5" height="6" fill="#a86c3c"/><rect x="10" y="8" width="3" height="2" fill="#e8e0d0"/><path d="M15 12l4 10" stroke="#6c7060" stroke-width="1.5"/></g></svg>
<div class="a mname" style="left:1181px;top:592px;letter-spacing:0.15px">Snow.</div>
<svg class="a" style="left:1297px;top:589px" width="20" height="20" viewBox="0 0 20 20"><circle cx="10" cy="10" r="10" fill="#3e403e"/><rect x="7.2" y="3.8" width="5.6" height="8.7" rx="2.8" fill="#b6b6b6"/><path d="M5 9.5a5 5 0 0 0 10 0M10 14.5v2.5" fill="none" stroke="#b6b6b6" stroke-width="1.3"/><path d="M5.2 4.2l10.5 10.5" stroke="#3e403e" stroke-width="2.4"/><path d="M5.8 3.6l10.2 10.2" stroke="#b6b6b6" stroke-width="1.1"/></svg>
<svg class="a" style="left:1149px;top:623px" width="25" height="25" viewBox="0 0 24 24"><clipPath id="cc16"><circle cx="12" cy="12" r="12"/></clipPath><g clip-path="url(#cc16)"><rect width="24" height="24" fill="#f8f4f4"/><path d="M5 12c0-9 14-9 15 0l1 6-4-3c-2-3-6-4-9-3l-3 5z" fill="#f4ecd8"/><path d="M16 5c4 2 6 8 4 14l-3-6z" fill="#8c1c2c"/><circle cx="11" cy="13" r="4.5" fill="#fbeee8"/><path d="M8 15h5l-1 3h-3z" fill="#2c2c3c"/><path d="M5 24c1-4 3-5 6-5s6 1 7 5z" fill="#7c1c2c"/></g></svg>
<div class="a mname" style="left:1181px;top:627px;letter-spacing:0px">偷猫的鱼</div>
<svg class="a" style="left:1297px;top:624px" width="20" height="20" viewBox="0 0 20 20"><circle cx="10" cy="10" r="10" fill="#3e403e"/><rect x="7.2" y="3.8" width="5.6" height="8.7" rx="2.8" fill="#b6b6b6"/><path d="M5 9.5a5 5 0 0 0 10 0M10 14.5v2.5" fill="none" stroke="#b6b6b6" stroke-width="1.3"/><path d="M5.2 4.2l10.5 10.5" stroke="#3e403e" stroke-width="2.4"/><path d="M5.8 3.6l10.2 10.2" stroke="#b6b6b6" stroke-width="1.1"/></svg>
<!-- bottom toolbar -->
<svg class="a" style="left:948px;top:664px" width="20" height="20" viewBox="0 0 20 20"><path d="M1 7h3.5L10 2v16L4.5 13H1z" fill="#fff"/><path d="M12.5 6.5a5 5 0 0 1 0 7M14.5 4a8.5 8.5 0 0 1 0 12" fill="none" stroke="#fff" stroke-width="1.5"/></svg>
<svg class="a" style="left:1076px;top:663px" width="18" height="23" viewBox="0 0 18 23"><rect x="5.5" y="1" width="7" height="12.5" rx="3.5" fill="#bdbdbd"/><path d="M2.5 10.5a6.5 6.5 0 0 0 13 0M9 17.5v4" fill="none" stroke="#bdbdbd" stroke-width="1.6"/><path d="M2 2.5l13 17" stroke="#1a1a1a" stroke-width="3.4"/><path d="M2 2.5l13 17" stroke="#bdbdbd" stroke-width="1.5"/></svg>
<svg class="a" style="left:1110px;top:664px" width="20" height="20" viewBox="0 0 20 20"><rect x="1" y="4" width="12.5" height="12" rx="1" fill="#bdbdbd"/><path d="M13 10l6-5v10z" fill="#bdbdbd"/><path d="M1.5 2.5l14 15.5" stroke="#1a1a1a" stroke-width="3.2"/><path d="M1.5 2.5l14 15.5" stroke="#bdbdbd" stroke-width="1.4"/></svg>
<svg class="a" style="left:1145px;top:665px" width="18" height="18" viewBox="0 0 18 18"><rect x=".5" y="1" width="17" height="12.5" rx="1.5" fill="#d8d8d8"/><path d="M4.5 10.5c.5-3 2.5-4.5 5-4.5V3.5l4 3.8-4 3.7V8.5c-2 0-3.5.5-5 2z" fill="#1a1a1a"/><path d="M4.5 16.5h9" stroke="#d8d8d8" stroke-width="1.6"/></svg>
<svg class="a" style="left:1178px;top:664px" width="20" height="20" viewBox="0 0 20 20"><path d="M6.5 15.5V4L16.5 2v11.5" fill="none" stroke="#d8d8d8" stroke-width="1.7"/><path d="M6.5 4.5l10-2v2.5l-10 2z" fill="#d8d8d8"/><ellipse cx="4" cy="15.8" rx="3" ry="2.3" fill="#d8d8d8"/><ellipse cx="14" cy="13.8" rx="3" ry="2.3" fill="#d8d8d8"/></svg>
<svg class="a" style="left:1270px;top:664px" width="18" height="19" viewBox="0 0 18 19"><path d="M5 1c1.5-1 3.5 0 4 3 .5-3 2.5-4 4-3s1 3.5-4 4C4 4.5 3.5 2 5 1z" fill="#f0503c"/><rect x=".5" y="5" width="17" height="4.5" fill="#f0443c"/><rect x="1.5" y="9.5" width="15" height="9" fill="#e8382c"/><rect x="7" y="5" width="4" height="13.5" fill="#f8c83c"/></svg>
<svg class="a" style="left:1308px;top:665px" width="19" height="19" viewBox="0 0 19 19"><path d="M9 1a8 8 0 1 1-3 15.5c-1.5 1-3 1.5-4.5 1 1-1 1.5-2 1.5-3.2A8 8 0 0 1 9 1z" fill="#fff"/><circle cx="6.5" cy="8" r="1.1" fill="#1a1a1a"/><circle cx="11.5" cy="8" r="1.1" fill="#1a1a1a"/></svg>

</body></html>
